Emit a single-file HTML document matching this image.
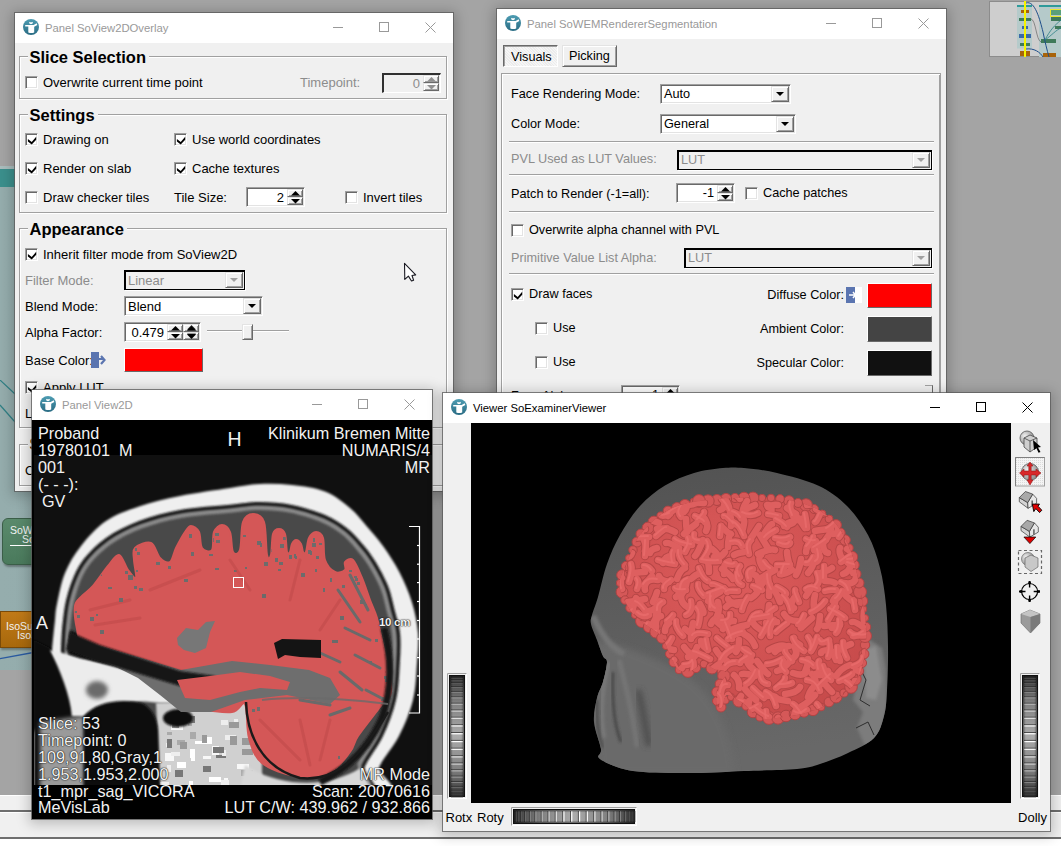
<!DOCTYPE html><html><head><meta charset="utf-8"><style>
*{box-sizing:border-box}
body{margin:0;width:1061px;height:846px;position:relative;overflow:hidden;background:#a4a4a4;font-family:"Liberation Sans",sans-serif;font-size:13px;color:#000}
.a{position:absolute}
.win{position:absolute;box-shadow:0 0 0 1px rgba(90,90,90,0.75),0 2px 12px 3px rgba(0,0,0,0.22)}
.t{position:absolute;white-space:nowrap}
.grp{position:absolute;border:1px solid #a0a0a0;box-shadow:inset 1px 1px 0 #fff,1px 1px 0 #fff}
.cb{position:absolute;width:13px;height:13px;background:#fff;border-top:1px solid #a0a0a0;border-left:1px solid #a0a0a0;border-right:1px solid #fff;border-bottom:1px solid #fff;box-shadow:inset 1px 1px 0 #696969,inset -1px -1px 0 #e3e3e3}
.sunk{position:absolute;border-top:1px solid #a0a0a0;border-left:1px solid #a0a0a0;border-right:1px solid #fff;border-bottom:1px solid #fff;box-shadow:inset 1px 1px 0 #696969,inset -1px -1px 0 #e3e3e3}
.btn{position:absolute;background:#f0f0f0;border-top:1px solid #e3e3e3;border-left:1px solid #e3e3e3;border-right:1px solid #696969;border-bottom:1px solid #696969;box-shadow:inset 1px 1px 0 #fff,inset -1px -1px 0 #a0a0a0}
</style></head><body>
<div class="a" style="left:0px;top:166px;width:430px;height:504px;background:linear-gradient(90deg,#95adad,#8aa7a7)"></div>
<div class="a" style="left:0px;top:166px;width:430px;height:3px;background:#a9bdbd"></div>
<div class="a" style="left:0px;top:169px;width:430px;height:18px;background:#3b8f8c"></div>
<svg class="a" style="left:0;top:380px" width="40" height="290"><path d="M0 0 L15 14" stroke="#2f7f84" stroke-width="1.2"/><path d="M0 25 L15 42" stroke="#2f7f84" stroke-width="1.2"/><path d="M0 278.7 L36 272" stroke="#2a5aa0" stroke-width="1.3"/></svg>
<div class="a" style="left:2px;top:518px;width:40px;height:47px;background:linear-gradient(#5a8a6c,#4a7a5c);border:1px solid #3b5e48;border-radius:6px;box-shadow:1px 2px 2px rgba(0,0,0,0.3)"></div>
<div class="t" style="left:10px;top:523.86px;font-size:10.5px;line-height:13px;color:#f4f4f4;">SoWE</div>
<div class="t" style="left:22px;top:533.36px;font-size:10.5px;line-height:13px;color:#f4f4f4;">So</div>
<div class="a" style="left:10px;top:545px;width:22px;height:1px;background:#fff"></div>
<div class="a" style="left:0px;top:611px;width:42px;height:37px;background:linear-gradient(#c07a18,#a8680c);border:1px solid #7a4a08;box-shadow:1px 2px 2px rgba(0,0,0,0.3)"></div>
<div class="t" style="left:6px;top:619.86px;font-size:10.5px;line-height:13px;color:#f4f4f4;">IsoSurf</div>
<div class="t" style="left:17px;top:629.36px;font-size:10.5px;line-height:13px;color:#f4f4f4;">IsoS</div>
<div class="a" style="left:0px;top:795px;width:1061px;height:51px;background:#f0f0f0"></div>
<div class="a" style="left:0px;top:795px;width:1061px;height:1px;background:#fff"></div>
<div class="a" style="left:0px;top:810px;width:1061px;height:2px;background:#6e6e6e"></div>
<div class="a" style="left:0px;top:812px;width:1061px;height:1px;background:#fff"></div>
<div class="a" style="left:0px;top:837px;width:1061px;height:2px;background:#6e6e6e"></div>
<div class="a" style="left:0px;top:839px;width:1061px;height:7px;background:#fff"></div>
<svg class="a" style="left:989px;top:1px" width="72" height="56" viewBox="989 1 72 56"><rect x="989.5" y="1.5" width="80" height="55" fill="#cecece" stroke="#8c8c8c" stroke-width="1"/><rect x="1017" y="5" width="15" height="43.5" fill="#b5caca"/><rect x="1017" y="5" width="15" height="2" fill="#2f9a9a"/><rect x="1039" y="5" width="30" height="52" fill="#b5caca"/><rect x="1039" y="5" width="30" height="2" fill="#2f9a9a"/><rect x="1021" y="10" width="8" height="3" fill="#a8630a"/><rect x="1019" y="18" width="12" height="3" fill="#3f7a5a"/><rect x="1022" y="26" width="6" height="3" fill="#3a6aa8"/><rect x="1019" y="34" width="12" height="4" fill="#3a6aa8"/><rect x="1020" y="43" width="10" height="3" fill="#3f7a5a"/><rect x="1020" y="51" width="10" height="5" fill="#a8630a"/><rect x="1051" y="10" width="10" height="5" fill="#5aa07a"/><rect x="1051" y="16" width="10" height="5" fill="#3f7a5a"/><rect x="1055" y="26" width="6" height="3" fill="#3f7a5a"/><rect x="1041" y="39" width="15" height="4" fill="#3f7a5a"/><rect x="1043" y="53" width="13" height="4" fill="#a8630a"/><rect x="1050.5" y="9.5" width="12" height="7" fill="none" stroke="#e8e830" stroke-width="1"/><path d="M1031 19 C1036 20 1036 40 1041 42" stroke="#555" stroke-width="0.6" fill="none"/><path d="M1026 3 C1035 0 1040 20 1043 32 C1045 42 1047 50 1049 57" stroke="#1f4f8a" stroke-width="1" fill="none"/><path d="M1026 49 C1034 48 1040 52 1043 57" stroke="#1f4f8a" stroke-width="1" fill="none"/><path d="M1045 40 C1050 30 1055 25 1061 20 M1045 40 C1052 35 1056 30 1061 28" stroke="#2a7f84" stroke-width="0.8" fill="none"/><rect x="1024" y="1" width="2" height="56" fill="#f5f500"/></svg>
<div class="win" style="left:15px;top:13px;width:438px;height:478px;background:#f0f0f0"></div>
<div class="a" style="left:15px;top:13px;width:438px;height:30px;background:#fff"></div>
<div class="a" style="left:23px;top:19px;width:17px;height:17px"><svg width="17" height="17" viewBox="0 0 17 17"><defs><linearGradient id="ig" x1="0" y1="0" x2="0" y2="1"><stop offset="0" stop-color="#4d9cb2"/><stop offset="1" stop-color="#2a6c84"/></linearGradient></defs><circle cx="8" cy="8" r="8" fill="url(#ig)"/><path d="M6 2.7 Q7 3.5 8 3.3 Q9 3.5 10 2.7 Q10.3 5.1 8 5.3 Q5.7 5.1 6 2.7 Z" fill="#fff"/><path d="M2.2 5.9 L10.6 5.9 L13.7 4.2 L14.3 6 L11.2 7.7 L11.2 13.4 Q8.2 14.4 5.3 13.4 L5.3 7.6 L2.2 7.6 Z" fill="#fff"/></svg></div>
<div class="t" style="left:45px;top:21.08px;font-size:11.3px;line-height:14px;color:#999;">Panel SoView2DOverlay</div>
<div class="a" style="left:333px;top:27px;width:10px;height:1px;background:#999"></div>
<div class="a" style="left:379px;top:22px;width:10px;height:10px;border:1px solid #999"></div>
<svg class="a" style="left:425px;top:22px" width="11" height="11"><path d="M0.5 0.5L10.5 10.5M10.5 0.5L0.5 10.5" stroke="#999" stroke-width="1"/></svg>
<div class="grp" style="left:19px;top:56px;width:428px;height:43px"></div>
<div class="t" style="left:27.5px;top:48px;height:14px;font-weight:bold;font-size:16.5px;line-height:14px;background:#f0f0f0;color:#f0f0f0;padding:0 3px 0 2px">Slice Selection</div>
<div class="t" style="left:29.5px;top:47.08px;font-size:16.5px;line-height:20px;color:#000;font-weight:bold;">Slice Selection</div>
<div class="cb" style="left:25px;top:76px"></div>
<div class="t" style="left:43px;top:74.50px;font-size:13px;line-height:16px;color:#000;">Overwrite current time point</div>
<div class="t" style="left:300px;top:74.50px;font-size:13px;line-height:16px;color:#8c8c8c;">Timepoint:</div>
<div class="a" style="left:382px;top:73px;width:59px;height:20px;background:#f0f0f0;border-top:2px solid #303030;border-left:2px solid #303030;border-right:1px solid #fff;border-bottom:1px solid #fff"></div>
<div class="btn" style="left:423px;top:75px;width:16px;height:8.0px"></div>
<div class="btn" style="left:423px;top:83.0px;width:16px;height:8.0px"></div>
<svg class="a" style="left:426.5px;top:77.0px" width="9" height="5"><path d="M0 4.5H9L4.5 0Z" fill="#909090"/></svg>
<svg class="a" style="left:426.5px;top:84.5px" width="9" height="5"><path d="M0 0H9L4.5 4.5Z" fill="#909090"/></svg>
<div class="t" style="right:641px;top:75.50px;font-size:13px;line-height:16px;color:#8c8c8c;">0</div>
<div class="grp" style="left:19px;top:114px;width:428px;height:99px"></div>
<div class="t" style="left:27.5px;top:106px;height:14px;font-weight:bold;font-size:16.5px;line-height:14px;background:#f0f0f0;color:#f0f0f0;padding:0 3px 0 2px">Settings</div>
<div class="t" style="left:29.5px;top:104.78px;font-size:16.5px;line-height:20px;color:#000;font-weight:bold;">Settings</div>
<div class="cb" style="left:25px;top:133px"><svg class="a" style="left:1px;top:0.5px" width="10" height="10" viewBox="-0.3 -0.5 10 10"><path d="M0.6 3.4 L4.4 6.6 L8.9 1.2 L8.9 4.2 L4.4 9 L0.6 6 Z" fill="#000"/></svg></div>
<div class="t" style="left:43px;top:131.50px;font-size:13px;line-height:16px;color:#000;">Drawing on</div>
<div class="cb" style="left:174px;top:133px"><svg class="a" style="left:1px;top:0.5px" width="10" height="10" viewBox="-0.3 -0.5 10 10"><path d="M0.6 3.4 L4.4 6.6 L8.9 1.2 L8.9 4.2 L4.4 9 L0.6 6 Z" fill="#000"/></svg></div>
<div class="t" style="left:192px;top:131.50px;font-size:13px;line-height:16px;color:#000;">Use world coordinates</div>
<div class="cb" style="left:25px;top:162px"><svg class="a" style="left:1px;top:0.5px" width="10" height="10" viewBox="-0.3 -0.5 10 10"><path d="M0.6 3.4 L4.4 6.6 L8.9 1.2 L8.9 4.2 L4.4 9 L0.6 6 Z" fill="#000"/></svg></div>
<div class="t" style="left:43px;top:160.50px;font-size:13px;line-height:16px;color:#000;">Render on slab</div>
<div class="cb" style="left:174px;top:162px"><svg class="a" style="left:1px;top:0.5px" width="10" height="10" viewBox="-0.3 -0.5 10 10"><path d="M0.6 3.4 L4.4 6.6 L8.9 1.2 L8.9 4.2 L4.4 9 L0.6 6 Z" fill="#000"/></svg></div>
<div class="t" style="left:192px;top:160.50px;font-size:13px;line-height:16px;color:#000;">Cache textures</div>
<div class="cb" style="left:25px;top:191px"></div>
<div class="t" style="left:43px;top:189.50px;font-size:13px;line-height:16px;color:#000;">Draw checker tiles</div>
<div class="t" style="left:174px;top:190.00px;font-size:13px;line-height:16px;color:#000;">Tile Size:</div>
<div class="sunk" style="left:246px;top:187px;width:59px;height:20px;background:#fff"></div>
<div class="btn" style="left:287px;top:189px;width:16px;height:8.0px"></div>
<div class="btn" style="left:287px;top:197.0px;width:16px;height:8.0px"></div>
<svg class="a" style="left:290.5px;top:191.0px" width="9" height="5"><path d="M0 4.5H9L4.5 0Z" fill="#000"/></svg>
<svg class="a" style="left:290.5px;top:198.5px" width="9" height="5"><path d="M0 0H9L4.5 4.5Z" fill="#000"/></svg>
<div class="t" style="right:777px;top:189.50px;font-size:13px;line-height:16px;color:#000;">2</div>
<div class="cb" style="left:345px;top:191px"></div>
<div class="t" style="left:363px;top:189.50px;font-size:13px;line-height:16px;color:#000;">Invert tiles</div>
<div class="grp" style="left:19px;top:228px;width:428px;height:200px"></div>
<div class="t" style="left:27.5px;top:220px;height:14px;font-weight:bold;font-size:16.5px;line-height:14px;background:#f0f0f0;color:#f0f0f0;padding:0 3px 0 2px">Appearance</div>
<div class="t" style="left:29.5px;top:219.28px;font-size:16.5px;line-height:20px;color:#000;font-weight:bold;">Appearance</div>
<div class="cb" style="left:25px;top:248px"><svg class="a" style="left:1px;top:0.5px" width="10" height="10" viewBox="-0.3 -0.5 10 10"><path d="M0.6 3.4 L4.4 6.6 L8.9 1.2 L8.9 4.2 L4.4 9 L0.6 6 Z" fill="#000"/></svg></div>
<div class="t" style="left:43px;top:246.50px;font-size:13px;line-height:16px;color:#000;">Inherit filter mode from SoView2D</div>
<div class="t" style="left:25px;top:272.50px;font-size:13px;line-height:16px;color:#8c8c8c;">Filter Mode:</div>
<div class="a" style="left:124px;top:270px;width:121px;height:20px;background:#f0f0f0;border:1px solid #000;border-top-width:2px;border-left-width:2px;box-shadow:1px 1px 0 #fff"></div>
<div class="btn" style="left:225px;top:272px;width:18px;height:16px"></div>
<svg class="a" style="left:230.0px;top:278.0px" width="8" height="5"><path d="M0 0H8L4 4Z" fill="#a0a0a0"/></svg>
<div class="t" style="left:128px;top:272.50px;font-size:13px;line-height:16px;color:#8c8c8c;">Linear</div>
<div class="t" style="left:25px;top:298.50px;font-size:13px;line-height:16px;color:#000;">Blend Mode:</div>
<div class="sunk" style="left:124px;top:296px;width:139px;height:20px;background:#fff"></div>
<div class="btn" style="left:243px;top:298px;width:18px;height:16px"></div>
<svg class="a" style="left:248.0px;top:304.0px" width="8" height="5"><path d="M0 0H8L4 4Z" fill="#000"/></svg>
<div class="t" style="left:128px;top:298.50px;font-size:13px;line-height:16px;color:#000;">Blend</div>
<div class="t" style="left:25px;top:324.50px;font-size:13px;line-height:16px;color:#000;">Alpha Factor:</div>
<div class="sunk" style="left:124px;top:322px;width:77px;height:20px;background:#fff"></div>
<div class="btn" style="left:183px;top:324px;width:16px;height:8.0px"></div>
<div class="btn" style="left:183px;top:332.0px;width:16px;height:8.0px"></div>
<svg class="a" style="left:186.5px;top:326.0px" width="9" height="5"><path d="M0 4.5H9L4.5 0Z" fill="#000"/></svg>
<svg class="a" style="left:186.5px;top:333.5px" width="9" height="5"><path d="M0 0H9L4.5 4.5Z" fill="#000"/></svg>
<div class="btn" style="left:167px;top:324px;width:16px;height:8.0px"></div>
<div class="btn" style="left:167px;top:332.0px;width:16px;height:8.0px"></div>
<svg class="a" style="left:170.5px;top:326.0px" width="9" height="5"><path d="M0 4.5H9L4.5 0Z" fill="#000"/></svg>
<svg class="a" style="left:170.5px;top:333.5px" width="9" height="5"><path d="M0 0H9L4.5 4.5Z" fill="#000"/></svg>
<svg class="a" style="left:186.5px;top:325.0px" width="9" height="14"><path d="M0 4.5H9L4.5 0Z M0 5.5H9L4.5 1Z" fill="#000" opacity="0.8"/><path d="M0 8.5H9L4.5 13Z M0 9.5H9L4.5 14Z" fill="#000" opacity="0.8"/></svg>
<div class="t" style="right:897px;top:324.50px;font-size:13px;line-height:16px;color:#000;">0.479</div>
<div class="a" style="left:207px;top:330px;width:82px;height:2px;border-top:1px solid #a0a0a0;border-bottom:1px solid #fff"></div>
<div class="btn" style="left:242px;top:324px;width:11px;height:16px"></div>
<div class="t" style="left:25px;top:352.50px;font-size:13px;line-height:16px;color:#000;">Base Color:</div>
<svg class="a" style="left:91px;top:352px" width="17" height="16"><rect x="0" y="0" width="8" height="16" fill="#5b75b0"/><path d="M6 7H13M10 4L13.5 8L10 12" stroke="#5b75b0" stroke-width="2.2" fill="none"/></svg>
<div class="a" style="left:124px;top:348px;width:79px;height:24px;background:#f00;border-top:1px solid #fff;border-left:1px solid #fff;border-right:1px solid #696969;border-bottom:1px solid #696969"></div>
<div class="cb" style="left:25px;top:381px"><svg class="a" style="left:1px;top:0.5px" width="10" height="10" viewBox="-0.3 -0.5 10 10"><path d="M0.6 3.4 L4.4 6.6 L8.9 1.2 L8.9 4.2 L4.4 9 L0.6 6 Z" fill="#000"/></svg></div>
<div class="t" style="left:43px;top:379.50px;font-size:13px;line-height:16px;color:#000;">Apply LUT</div>
<div class="t" style="left:25px;top:405.50px;font-size:13px;line-height:16px;color:#000;">LUT</div>
<div class="grp" style="left:19px;top:444px;width:428px;height:42px"></div>
<div class="t" style="left:27.5px;top:436px;height:14px;font-weight:bold;font-size:16.5px;line-height:14px;background:#f0f0f0;color:#f0f0f0;padding:0 3px 0 2px">S</div>
<div class="t" style="left:29.5px;top:434.28px;font-size:16.5px;line-height:20px;color:#000;font-weight:bold;">S</div>
<div class="t" style="left:25px;top:462.50px;font-size:13px;line-height:16px;color:#000;">Ov</div>
<svg class="a" style="left:402px;top:261px" width="16" height="23" viewBox="402 261 16 23"><path d="M404.5 263.3 L404.8 279.4 L408.4 276.1 L411.5 281 L413.6 280.2 L412 275.5 L415.7 274.9 Z" fill="#fff" stroke="#1a1a22" stroke-width="1.1" stroke-linejoin="round"/></svg>
<div class="win" style="left:497px;top:9px;width:449px;height:400px;background:#f0f0f0"></div>
<div class="a" style="left:497px;top:9px;width:449px;height:30px;background:#fff"></div>
<div class="a" style="left:505px;top:15px;width:17px;height:17px"><svg width="17" height="17" viewBox="0 0 17 17"><defs><linearGradient id="ig" x1="0" y1="0" x2="0" y2="1"><stop offset="0" stop-color="#4d9cb2"/><stop offset="1" stop-color="#2a6c84"/></linearGradient></defs><circle cx="8" cy="8" r="8" fill="url(#ig)"/><path d="M6 2.7 Q7 3.5 8 3.3 Q9 3.5 10 2.7 Q10.3 5.1 8 5.3 Q5.7 5.1 6 2.7 Z" fill="#fff"/><path d="M2.2 5.9 L10.6 5.9 L13.7 4.2 L14.3 6 L11.2 7.7 L11.2 13.4 Q8.2 14.4 5.3 13.4 L5.3 7.6 L2.2 7.6 Z" fill="#fff"/></svg></div>
<div class="t" style="left:527px;top:17.08px;font-size:11.3px;line-height:14px;color:#999;">Panel SoWEMRendererSegmentation</div>
<div class="a" style="left:826px;top:23px;width:10px;height:1px;background:#999"></div>
<div class="a" style="left:872px;top:18px;width:10px;height:10px;border:1px solid #999"></div>
<svg class="a" style="left:918px;top:18px" width="11" height="11"><path d="M0.5 0.5L10.5 10.5M10.5 0.5L0.5 10.5" stroke="#999" stroke-width="1"/></svg>
<div class="a" style="left:501px;top:73px;width:440px;height:340px;border-top:1px solid #fff;border-left:1px solid #fff;border-right:1px solid #696969;box-shadow:inset -1px 0 0 #a0a0a0, inset 1px 1px 0 #e3e3e3;outline:1px solid #a0a0a0;outline-offset:-1px"></div>
<div class="a" style="left:501px;top:73px;width:440px;height:340px;border:1px solid #a0a0a0;box-shadow:inset 1px 1px 0 #fff"></div>
<div class="a" style="left:503px;top:45px;width:55px;height:22px;background:#f0f0f0;border-top:1px solid #696969;border-left:1px solid #696969;border-right:1px solid #fff;border-bottom:1px solid #fff;box-shadow:inset 1px 1px 0 #a0a0a0;background-image:repeating-linear-gradient(45deg,#f6f6f6 0 1px,#ececec 1px 2px)"></div>
<div class="t" style="left:511px;top:50.10px;font-size:12.7px;line-height:15px;color:#000;">Visuals</div>
<div class="btn" style="left:562px;top:45px;width:55px;height:22px"></div>
<div class="t" style="left:569px;top:49.10px;font-size:12.7px;line-height:15px;color:#000;">Picking</div>
<div class="t" style="left:511px;top:87.10px;font-size:12.7px;line-height:15px;color:#000;">Face Rendering Mode:</div>
<div class="sunk" style="left:660px;top:84px;width:131px;height:20px;background:#fff"></div>
<div class="btn" style="left:771px;top:86px;width:18px;height:16px"></div>
<svg class="a" style="left:776.0px;top:92.0px" width="8" height="5"><path d="M0 0H8L4 4Z" fill="#000"/></svg>
<div class="t" style="left:664px;top:87.10px;font-size:12.7px;line-height:15px;color:#000;">Auto</div>
<div class="t" style="left:511px;top:117.10px;font-size:12.7px;line-height:15px;color:#000;">Color Mode:</div>
<div class="sunk" style="left:660px;top:114px;width:136px;height:20px;background:#fff"></div>
<div class="btn" style="left:776px;top:116px;width:18px;height:16px"></div>
<svg class="a" style="left:781.0px;top:122.0px" width="8" height="5"><path d="M0 0H8L4 4Z" fill="#000"/></svg>
<div class="t" style="left:664px;top:117.10px;font-size:12.7px;line-height:15px;color:#000;">General</div>
<div class="a" style="left:509px;top:141px;width:425px;height:2px;border-top:1px solid #a0a0a0;border-bottom:1px solid #fff"></div>
<div class="t" style="left:511px;top:152.10px;font-size:12.7px;line-height:15px;color:#8c8c8c;">PVL Used as LUT Values:</div>
<div class="a" style="left:677px;top:150px;width:255px;height:20px;background:#f0f0f0;border:1px solid #000;border-top-width:2px;border-left-width:2px;box-shadow:1px 1px 0 #fff"></div>
<div class="btn" style="left:912px;top:152px;width:18px;height:16px"></div>
<svg class="a" style="left:917.0px;top:158.0px" width="8" height="5"><path d="M0 0H8L4 4Z" fill="#a0a0a0"/></svg>
<div class="t" style="left:681px;top:153.10px;font-size:12.7px;line-height:15px;color:#8c8c8c;">LUT</div>
<div class="a" style="left:509px;top:174px;width:425px;height:2px;border-top:1px solid #a0a0a0;border-bottom:1px solid #fff"></div>
<div class="t" style="left:511px;top:186.60px;font-size:12.7px;line-height:15px;color:#000;">Patch to Render (-1=all):</div>
<div class="sunk" style="left:676px;top:183px;width:59px;height:20px;background:#fff"></div>
<div class="btn" style="left:717px;top:185px;width:16px;height:8.0px"></div>
<div class="btn" style="left:717px;top:193.0px;width:16px;height:8.0px"></div>
<svg class="a" style="left:720.5px;top:187.0px" width="9" height="5"><path d="M0 4.5H9L4.5 0Z" fill="#000"/></svg>
<svg class="a" style="left:720.5px;top:194.5px" width="9" height="5"><path d="M0 0H9L4.5 4.5Z" fill="#000"/></svg>
<div class="t" style="right:347px;top:186.10px;font-size:12.7px;line-height:15px;color:#000;">-1</div>
<div class="cb" style="left:745px;top:187px"></div>
<div class="t" style="left:763px;top:186.10px;font-size:12.7px;line-height:15px;color:#000;">Cache patches</div>
<div class="a" style="left:509px;top:211px;width:425px;height:2px;border-top:1px solid #a0a0a0;border-bottom:1px solid #fff"></div>
<div class="cb" style="left:511px;top:224px"></div>
<div class="t" style="left:529px;top:223.10px;font-size:12.7px;line-height:15px;color:#000;">Overwrite alpha channel with PVL</div>
<div class="t" style="left:511px;top:251.10px;font-size:12.7px;line-height:15px;color:#8c8c8c;">Primitive Value List Alpha:</div>
<div class="a" style="left:684px;top:248px;width:248px;height:20px;background:#f0f0f0;border:1px solid #000;border-top-width:2px;border-left-width:2px;box-shadow:1px 1px 0 #fff"></div>
<div class="btn" style="left:912px;top:250px;width:18px;height:16px"></div>
<svg class="a" style="left:917.0px;top:256.0px" width="8" height="5"><path d="M0 0H8L4 4Z" fill="#a0a0a0"/></svg>
<div class="t" style="left:688px;top:251.10px;font-size:12.7px;line-height:15px;color:#8c8c8c;">LUT</div>
<div class="a" style="left:509px;top:273px;width:425px;height:2px;border-top:1px solid #a0a0a0;border-bottom:1px solid #fff"></div>
<div class="cb" style="left:511px;top:288px"><svg class="a" style="left:1px;top:0.5px" width="10" height="10" viewBox="-0.3 -0.5 10 10"><path d="M0.6 3.4 L4.4 6.6 L8.9 1.2 L8.9 4.2 L4.4 9 L0.6 6 Z" fill="#000"/></svg></div>
<div class="t" style="left:529px;top:287.10px;font-size:12.7px;line-height:15px;color:#000;">Draw faces</div>
<div class="t" style="right:217px;top:288.10px;font-size:12.7px;line-height:15px;color:#000;">Diffuse Color:</div>
<svg class="a" style="left:846px;top:287px" width="16" height="16"><rect x="0" y="0" width="16" height="16" fill="#fff"/><rect x="0" y="0" width="9" height="16" fill="#5b75b0"/><path d="M3 8H9M7 5L9.5 8L7 11" stroke="#fff" stroke-width="1.5" fill="none"/></svg>
<div class="a" style="left:867px;top:283px;width:65px;height:25px;background:#f00;border-top:1px solid #fff;border-left:1px solid #fff;border-right:1px solid #696969;border-bottom:1px solid #696969"></div>
<div class="cb" style="left:535px;top:322px"></div>
<div class="t" style="left:553px;top:321.10px;font-size:12.7px;line-height:15px;color:#000;">Use</div>
<div class="t" style="right:217px;top:322.10px;font-size:12.7px;line-height:15px;color:#000;">Ambient Color:</div>
<div class="a" style="left:867px;top:316px;width:65px;height:26px;background:#444;border-top:1px solid #fff;border-left:1px solid #fff;border-right:1px solid #696969;border-bottom:1px solid #696969"></div>
<div class="cb" style="left:535px;top:356px"></div>
<div class="t" style="left:553px;top:355.10px;font-size:12.7px;line-height:15px;color:#000;">Use</div>
<div class="t" style="right:217px;top:356.10px;font-size:12.7px;line-height:15px;color:#000;">Specular Color:</div>
<div class="a" style="left:867px;top:350px;width:65px;height:26px;background:#111;border-top:1px solid #fff;border-left:1px solid #fff;border-right:1px solid #696969;border-bottom:1px solid #696969"></div>
<div class="t" style="left:511px;top:389.10px;font-size:12.7px;line-height:15px;color:#000;">Face Alpha:</div>
<div class="sunk" style="left:621px;top:385px;width:59px;height:20px;background:#fff"></div>
<div class="btn" style="left:662px;top:387px;width:16px;height:8.0px"></div>
<div class="btn" style="left:662px;top:395.0px;width:16px;height:8.0px"></div>
<svg class="a" style="left:665.5px;top:389.0px" width="9" height="5"><path d="M0 4.5H9L4.5 0Z" fill="#000"/></svg>
<svg class="a" style="left:665.5px;top:396.5px" width="9" height="5"><path d="M0 0H9L4.5 4.5Z" fill="#000"/></svg>
<div class="t" style="right:402px;top:388.10px;font-size:12.7px;line-height:15px;color:#000;">1</div>
<div class="a" style="left:925px;top:385px;width:8px;height:20px;border-top:1px solid #a0a0a0;border-right:1px solid #696969"></div>
<div class="win" style="left:32px;top:390px;width:400px;height:429px;background:#000"></div>
<div class="a" style="left:32px;top:390px;width:400px;height:30px;background:#fff"></div>
<div class="a" style="left:40px;top:396px;width:17px;height:17px"><svg width="17" height="17" viewBox="0 0 17 17"><defs><linearGradient id="ig" x1="0" y1="0" x2="0" y2="1"><stop offset="0" stop-color="#4d9cb2"/><stop offset="1" stop-color="#2a6c84"/></linearGradient></defs><circle cx="8" cy="8" r="8" fill="url(#ig)"/><path d="M6 2.7 Q7 3.5 8 3.3 Q9 3.5 10 2.7 Q10.3 5.1 8 5.3 Q5.7 5.1 6 2.7 Z" fill="#fff"/><path d="M2.2 5.9 L10.6 5.9 L13.7 4.2 L14.3 6 L11.2 7.7 L11.2 13.4 Q8.2 14.4 5.3 13.4 L5.3 7.6 L2.2 7.6 Z" fill="#fff"/></svg></div>
<div class="t" style="left:62px;top:398.08px;font-size:11.3px;line-height:14px;color:#999;">Panel View2D</div>
<div class="a" style="left:312px;top:404px;width:10px;height:1px;background:#999"></div>
<div class="a" style="left:358px;top:399px;width:10px;height:10px;border:1px solid #999"></div>
<svg class="a" style="left:404px;top:399px" width="11" height="11"><path d="M0.5 0.5L10.5 10.5M10.5 0.5L0.5 10.5" stroke="#999" stroke-width="1"/></svg>
<svg class="a" style="left:32px;top:420px" width="401" height="399" viewBox="32 420 401 399"><defs><clipPath id="imgc"><rect x="34" y="455" width="398" height="330"/></clipPath><filter id="b1" x="-10%" y="-10%" width="120%" height="120%"><feGaussianBlur stdDeviation="1"/></filter><filter id="b2" x="-20%" y="-20%" width="140%" height="140%"><feGaussianBlur stdDeviation="2"/></filter></defs><rect x="34" y="455" width="398" height="330" fill="#101010"/><g clip-path="url(#imgc)"><path d="M40.0 800.0 C-12.8 783.3 46.0 725.0 48.0 700.0 C50.0 675.0 50.8 663.3 52.0 650.0 C53.2 636.7 54.2 627.7 55.0 620.0 C55.8 612.3 55.3 611.8 57.0 604.0 C58.7 596.2 61.0 582.7 65.0 573.0 C69.0 563.3 74.2 554.7 81.0 546.0 C87.8 537.3 96.3 527.6 106.0 521.0 C115.7 514.4 126.7 510.7 139.0 506.5 C151.3 502.3 164.8 499.1 180.0 496.0 C195.2 492.9 216.7 490.0 230.0 488.0 C243.3 486.0 249.7 484.5 260.0 484.0 C270.3 483.5 281.2 483.8 292.0 485.0 C302.8 486.2 315.3 487.7 325.0 491.5 C334.7 495.3 343.1 502.2 350.0 508.0 C356.9 513.8 361.0 519.7 366.5 526.0 C372.0 532.3 377.5 538.2 383.0 546.0 C388.5 553.8 394.8 563.2 399.6 572.6 C404.4 582.0 408.9 592.4 412.0 602.5 C415.1 612.6 417.2 622.9 418.0 633.0 C418.8 643.1 417.8 651.8 417.0 663.0 C416.2 674.2 416.0 687.8 413.0 700.0 C410.0 712.2 404.6 725.0 399.0 736.0 C393.4 747.0 385.3 755.3 379.6 766.0 C373.9 776.7 421.6 794.3 365.0 800.0 C308.4 805.7 92.8 816.7 40.0 800.0 Z" fill="#efefef" filter="url(#b1)"/><path d="M58.0 800.0 C9.7 783.3 59.5 725.0 60.0 700.0 C60.5 675.0 60.5 663.3 61.0 650.0 C61.5 636.7 61.8 629.5 63.0 620.0 C64.2 610.5 65.0 602.5 68.0 593.0 C71.0 583.5 74.7 572.2 81.0 563.0 C87.3 553.8 96.3 545.0 106.0 538.0 C115.7 531.0 126.7 525.7 139.0 521.0 C151.3 516.3 164.8 512.7 180.0 510.0 C195.2 507.3 216.7 506.0 230.0 504.7 C243.3 503.4 249.7 501.9 260.0 502.0 C270.3 502.1 281.2 502.8 292.0 505.0 C302.8 507.2 315.9 511.2 325.0 515.0 C334.1 518.8 340.5 523.3 346.6 528.0 C352.7 532.7 356.8 537.5 361.5 543.0 C366.2 548.5 370.6 553.8 375.0 561.0 C379.4 568.2 384.7 577.8 388.0 586.0 C391.3 594.2 392.6 602.2 394.6 610.0 C396.6 617.8 399.1 624.2 400.0 633.0 C400.9 641.8 400.5 651.8 399.8 663.0 C399.1 674.2 398.8 687.8 396.0 700.0 C393.2 712.2 388.2 725.0 383.0 736.0 C377.8 747.0 370.5 755.3 365.0 766.0 C359.5 776.7 401.2 794.3 350.0 800.0 C298.8 805.7 106.3 816.7 58.0 800.0 Z" fill="#141414" filter="url(#b1)"/><path d="M61.5 800.1 C14.3 783.7 63.0 725.1 63.5 700.1 C64.0 675.1 64.0 663.4 64.5 650.1 C65.0 636.9 65.3 629.8 66.5 620.4 C67.6 611.1 68.4 603.3 71.3 594.1 C74.2 584.8 77.8 573.9 83.9 565.0 C90.0 556.1 98.7 547.6 108.1 540.8 C117.4 534.0 128.1 528.8 140.2 524.3 C152.3 519.7 165.6 516.1 180.6 513.4 C195.6 510.8 217.1 509.5 230.3 508.2 C243.6 506.9 249.8 505.5 260.0 505.5 C270.1 505.5 280.7 506.3 291.3 508.4 C301.9 510.6 314.8 514.5 323.6 518.2 C332.5 521.9 338.6 526.3 344.5 530.8 C350.3 535.3 354.3 539.9 358.8 545.3 C363.4 550.6 367.7 555.8 372.0 562.8 C376.3 569.8 381.6 579.3 384.8 587.3 C387.9 595.3 389.2 603.2 391.2 610.9 C393.2 618.5 395.7 624.7 396.5 633.3 C397.4 642.0 397.0 651.8 396.3 662.8 C395.7 673.8 395.3 687.3 392.6 699.2 C389.8 711.2 384.9 723.6 379.8 734.5 C374.7 745.4 367.4 753.7 361.9 764.4 C356.4 775.1 396.9 792.6 346.8 798.6 C296.7 804.5 108.7 816.5 61.5 800.1 Z" fill="#8a8a8a" filter="url(#b1)"/><path d="M66.0 800.2 C20.2 784.1 67.5 725.1 68.0 700.2 C68.5 675.2 68.5 663.5 69.0 650.3 C69.5 637.1 69.8 630.1 70.9 621.0 C72.0 611.8 72.9 604.3 75.6 595.4 C78.4 586.5 81.7 576.0 87.6 567.5 C93.4 559.1 101.7 551.0 110.7 544.5 C119.7 538.0 130.0 532.9 141.8 528.5 C153.6 524.0 166.6 520.5 181.4 517.9 C196.2 515.2 217.7 514.0 230.8 512.7 C243.9 511.3 250.0 510.0 260.0 510.0 C269.9 510.0 280.1 510.8 290.4 512.8 C300.8 514.9 313.3 518.8 321.9 522.4 C330.4 526.0 336.1 530.0 341.7 534.3 C347.3 538.7 351.0 543.1 355.4 548.2 C359.8 553.4 364.0 558.4 368.2 565.2 C372.4 572.0 377.5 581.2 380.6 589.0 C383.7 596.8 384.9 604.5 386.8 612.0 C388.8 619.4 391.2 625.4 392.0 633.8 C392.9 642.2 392.5 651.8 391.8 662.5 C391.2 673.3 390.9 686.5 388.2 698.2 C385.5 709.9 380.8 721.9 375.8 732.6 C370.7 743.3 363.4 751.6 357.9 762.3 C352.4 773.0 391.3 790.5 342.7 796.8 C294.0 803.1 111.8 816.3 66.0 800.2 Z" fill="#484848" filter="url(#b1)"/><path d="M34 640 L50 648 L62 668 L72 690 L72 716 L84 716 L84 790 L34 790 Z" fill="#0c0c0c" filter="url(#b1)"/><path d="M40 722 L84 716 L84 790 L40 790 Z" fill="#9a9a9a" filter="url(#b2)"/><path d="M50 650 C62 652 90 661 122 668 C150 673 180 677 210 688 L232 700 C200 703 185 703 160 703 C140 700 115 700 84 716 L72 716 C70 695 60 670 50 650 Z" fill="#ececec" filter="url(#b1)"/><path d="M70 630 L90 638 L130 650 L179 666 L232 674 L236 690 L179 682 L130 668 L80 658 L68 654 Z" fill="#141414" filter="url(#b1)"/><ellipse cx="97" cy="690" rx="11" ry="9" fill="#6a6a6a" filter="url(#b2)"/><path d="M156 703 L247 700 L262 740 L262 790 L160 790 Z" fill="#d0d0d0" filter="url(#b1)"/><rect x="188" y="723" width="4" height="3" fill="#aaa"/><rect x="234" y="719" width="4" height="7" fill="#eee"/><rect x="178" y="718" width="5" height="4" fill="#fff"/><rect x="166" y="743" width="5" height="4" fill="#eee"/><rect x="216" y="755" width="10" height="3" fill="#777"/><rect x="248" y="715" width="8" height="6" fill="#999"/><rect x="171" y="721" width="12" height="9" fill="#f8f8f8"/><rect x="221" y="720" width="7" height="5" fill="#eee"/><rect x="167" y="765" width="4" height="7" fill="#eee"/><rect x="177" y="762" width="9" height="6" fill="#fff"/><rect x="212" y="746" width="7" height="9" fill="#f8f8f8"/><rect x="175" y="770" width="8" height="7" fill="#777"/><rect x="204" y="737" width="8" height="7" fill="#fff"/><rect x="248" y="721" width="6" height="9" fill="#fff"/><rect x="189" y="781" width="4" height="8" fill="#fff"/><rect x="165" y="753" width="9" height="8" fill="#f8f8f8"/><rect x="190" y="749" width="5" height="9" fill="#fff"/><rect x="167" y="732" width="5" height="3" fill="#aaa"/><rect x="225" y="735" width="11" height="5" fill="#eee"/><rect x="224" y="778" width="4" height="6" fill="#f8f8f8"/><rect x="191" y="757" width="4" height="4" fill="#fff"/><rect x="229" y="722" width="10" height="6" fill="#999"/><rect x="242" y="749" width="11" height="6" fill="#999"/><rect x="209" y="777" width="12" height="5" fill="#fff"/><rect x="223" y="785" width="10" height="4" fill="#aaa"/><rect x="172" y="725" width="7" height="3" fill="#999"/><rect x="203" y="756" width="8" height="3" fill="#f8f8f8"/><rect x="171" y="752" width="9" height="4" fill="#eee"/><rect x="222" y="750" width="4" height="6" fill="#eee"/><rect x="241" y="770" width="12" height="6" fill="#aaa"/><rect x="195" y="741" width="10" height="3" fill="#fff"/><rect x="176" y="785" width="6" height="3" fill="#fff"/><rect x="189" y="716" width="6" height="7" fill="#777"/><rect x="167" y="739" width="5" height="9" fill="#777"/><rect x="177" y="740" width="8" height="5" fill="#aaa"/><rect x="213" y="747" width="11" height="6" fill="#777"/><rect x="202" y="735" width="5" height="8" fill="#999"/><rect x="190" y="732" width="6" height="7" fill="#aaa"/><rect x="160" y="782" width="9" height="4" fill="#eee"/><rect x="221" y="780" width="8" height="8" fill="#eee"/><rect x="237" y="764" width="12" height="5" fill="#f8f8f8"/><rect x="242" y="738" width="12" height="7" fill="#999"/><rect x="230" y="736" width="7" height="9" fill="#999"/><rect x="180" y="742" width="7" height="7" fill="#999"/><rect x="203" y="766" width="8" height="6" fill="#777"/><path d="M84 790 L84 716 C95 702 120 698 142 703 C152 708 157 718 158 730 L160 790 Z" fill="#0b0b0b" filter="url(#b1)"/><ellipse cx="178" cy="718" rx="15" ry="9" fill="#0b0b0b" filter="url(#b1)"/><path d="M245 765 C280 788 330 788 360 768 L372 790 L240 790 Z" fill="#d8d8d8" filter="url(#b1)"/><path d="M77.0 629.0 C75.7 623.3 74.2 611.5 75.0 606.0 C75.8 600.5 79.0 599.3 82.0 596.0 C85.0 592.7 88.7 591.0 93.0 586.0 C97.3 581.0 103.7 571.2 108.0 566.0 C112.3 560.8 115.7 554.3 119.0 555.0 C122.3 555.7 125.2 566.2 128.0 570.0 C130.8 573.8 135.0 579.7 136.0 578.0 C137.0 576.3 134.2 565.0 134.0 560.0 C133.8 555.0 132.2 550.8 135.0 548.0 C137.8 545.2 146.8 541.3 151.0 543.0 C155.2 544.7 156.8 554.8 160.0 558.0 C163.2 561.2 167.3 563.7 170.0 562.0 C172.7 560.3 173.5 553.0 176.0 548.0 C178.5 543.0 182.5 535.7 185.0 532.0 C187.5 528.3 188.7 526.0 191.0 526.0 C193.3 526.0 197.2 528.3 199.0 532.0 C200.8 535.7 199.8 545.0 202.0 548.0 C204.2 551.0 210.0 552.7 212.0 550.0 C214.0 547.3 212.3 536.2 214.0 532.0 C215.7 527.8 219.3 525.0 222.0 525.0 C224.7 525.0 228.2 527.5 230.0 532.0 C231.8 536.5 231.3 549.0 233.0 552.0 C234.7 555.0 238.3 555.0 240.0 550.0 C241.7 545.0 240.8 528.0 243.0 522.0 C245.2 516.0 249.5 514.0 253.0 514.0 C256.5 514.0 261.7 515.2 264.0 522.0 C266.3 528.8 265.8 549.5 267.0 555.0 C268.2 560.5 270.0 558.5 271.0 555.0 C272.0 551.5 271.7 538.3 273.0 534.0 C274.3 529.7 277.0 529.0 279.0 529.0 C281.0 529.0 283.7 530.2 285.0 534.0 C286.3 537.8 286.2 549.0 287.0 552.0 C287.8 555.0 289.2 553.3 290.0 552.0 C290.8 550.7 291.0 546.0 292.0 544.0 C293.0 542.0 294.5 540.0 296.0 540.0 C297.5 540.0 299.8 542.0 301.0 544.0 C302.2 546.0 302.2 550.7 303.0 552.0 C303.8 553.3 305.0 554.3 306.0 552.0 C307.0 549.7 307.3 541.3 309.0 538.0 C310.7 534.7 313.7 532.0 316.0 532.0 C318.3 532.0 321.5 533.3 323.0 538.0 C324.5 542.7 323.0 554.3 325.0 560.0 C327.0 565.7 331.7 570.3 335.0 572.0 C338.3 573.7 343.3 571.7 345.0 570.0 C346.7 568.3 343.7 563.7 345.0 562.0 C346.3 560.3 350.2 557.3 353.0 560.0 C355.8 562.7 359.2 571.3 362.0 578.0 C364.8 584.7 367.5 593.3 370.0 600.0 C372.5 606.7 375.0 611.3 377.0 618.0 C379.0 624.7 380.3 632.5 382.0 640.0 C383.7 647.5 385.5 654.3 387.0 663.0 C388.5 671.7 392.2 684.7 391.0 692.0 C389.8 699.3 385.5 699.7 380.0 707.0 C374.5 714.3 363.0 728.5 358.0 736.0 C353.0 743.5 354.7 746.0 350.0 752.0 C345.3 758.0 339.0 768.0 330.0 772.0 C321.0 776.0 307.3 777.5 296.0 776.0 C284.7 774.5 269.8 769.3 262.0 763.0 C254.2 756.7 251.8 747.8 249.0 738.0 C246.2 728.2 247.8 708.3 245.0 704.0 C242.2 699.7 239.8 711.3 232.0 712.0 C224.2 712.7 207.2 710.8 198.0 708.0 C188.8 705.2 181.3 701.3 177.0 695.0 C172.7 688.7 176.3 675.7 172.0 670.0 C167.7 664.3 160.2 663.8 151.0 661.0 C141.8 658.2 128.3 656.5 117.0 653.0 C105.7 649.5 89.7 644.0 83.0 640.0 C76.3 636.0 78.3 634.7 77.0 629.0 Z" fill="#d45757" stroke="#d45757" stroke-width="2" stroke-linejoin="round"/><clipPath id="redc"><path d="M77.0 629.0 C75.7 623.3 74.2 611.5 75.0 606.0 C75.8 600.5 79.0 599.3 82.0 596.0 C85.0 592.7 88.7 591.0 93.0 586.0 C97.3 581.0 103.7 571.2 108.0 566.0 C112.3 560.8 115.7 554.3 119.0 555.0 C122.3 555.7 125.2 566.2 128.0 570.0 C130.8 573.8 135.0 579.7 136.0 578.0 C137.0 576.3 134.2 565.0 134.0 560.0 C133.8 555.0 132.2 550.8 135.0 548.0 C137.8 545.2 146.8 541.3 151.0 543.0 C155.2 544.7 156.8 554.8 160.0 558.0 C163.2 561.2 167.3 563.7 170.0 562.0 C172.7 560.3 173.5 553.0 176.0 548.0 C178.5 543.0 182.5 535.7 185.0 532.0 C187.5 528.3 188.7 526.0 191.0 526.0 C193.3 526.0 197.2 528.3 199.0 532.0 C200.8 535.7 199.8 545.0 202.0 548.0 C204.2 551.0 210.0 552.7 212.0 550.0 C214.0 547.3 212.3 536.2 214.0 532.0 C215.7 527.8 219.3 525.0 222.0 525.0 C224.7 525.0 228.2 527.5 230.0 532.0 C231.8 536.5 231.3 549.0 233.0 552.0 C234.7 555.0 238.3 555.0 240.0 550.0 C241.7 545.0 240.8 528.0 243.0 522.0 C245.2 516.0 249.5 514.0 253.0 514.0 C256.5 514.0 261.7 515.2 264.0 522.0 C266.3 528.8 265.8 549.5 267.0 555.0 C268.2 560.5 270.0 558.5 271.0 555.0 C272.0 551.5 271.7 538.3 273.0 534.0 C274.3 529.7 277.0 529.0 279.0 529.0 C281.0 529.0 283.7 530.2 285.0 534.0 C286.3 537.8 286.2 549.0 287.0 552.0 C287.8 555.0 289.2 553.3 290.0 552.0 C290.8 550.7 291.0 546.0 292.0 544.0 C293.0 542.0 294.5 540.0 296.0 540.0 C297.5 540.0 299.8 542.0 301.0 544.0 C302.2 546.0 302.2 550.7 303.0 552.0 C303.8 553.3 305.0 554.3 306.0 552.0 C307.0 549.7 307.3 541.3 309.0 538.0 C310.7 534.7 313.7 532.0 316.0 532.0 C318.3 532.0 321.5 533.3 323.0 538.0 C324.5 542.7 323.0 554.3 325.0 560.0 C327.0 565.7 331.7 570.3 335.0 572.0 C338.3 573.7 343.3 571.7 345.0 570.0 C346.7 568.3 343.7 563.7 345.0 562.0 C346.3 560.3 350.2 557.3 353.0 560.0 C355.8 562.7 359.2 571.3 362.0 578.0 C364.8 584.7 367.5 593.3 370.0 600.0 C372.5 606.7 375.0 611.3 377.0 618.0 C379.0 624.7 380.3 632.5 382.0 640.0 C383.7 647.5 385.5 654.3 387.0 663.0 C388.5 671.7 392.2 684.7 391.0 692.0 C389.8 699.3 385.5 699.7 380.0 707.0 C374.5 714.3 363.0 728.5 358.0 736.0 C353.0 743.5 354.7 746.0 350.0 752.0 C345.3 758.0 339.0 768.0 330.0 772.0 C321.0 776.0 307.3 777.5 296.0 776.0 C284.7 774.5 269.8 769.3 262.0 763.0 C254.2 756.7 251.8 747.8 249.0 738.0 C246.2 728.2 247.8 708.3 245.0 704.0 C242.2 699.7 239.8 711.3 232.0 712.0 C224.2 712.7 207.2 710.8 198.0 708.0 C188.8 705.2 181.3 701.3 177.0 695.0 C172.7 688.7 176.3 675.7 172.0 670.0 C167.7 664.3 160.2 663.8 151.0 661.0 C141.8 658.2 128.3 656.5 117.0 653.0 C105.7 649.5 89.7 644.0 83.0 640.0 C76.3 636.0 78.3 634.7 77.0 629.0 Z"/></clipPath><g clip-path="url(#redc)"><rect x="384" y="676" width="3" height="3" fill="#6c6c6c"/><rect x="209" y="554" width="4" height="2" fill="#6c6c6c"/><rect x="190" y="724" width="3" height="3" fill="#6c6c6c"/><rect x="387" y="623" width="4" height="3" fill="#6c6c6c"/><rect x="323" y="588" width="2" height="4" fill="#6c6c6c"/><rect x="313" y="538" width="2" height="4" fill="#6c6c6c"/><rect x="260" y="543" width="2" height="4" fill="#6c6c6c"/><rect x="128" y="666" width="2" height="3" fill="#6c6c6c"/><rect x="191" y="552" width="3" height="4" fill="#6c6c6c"/><rect x="245" y="567" width="2" height="2" fill="#6c6c6c"/><rect x="73" y="611" width="4" height="2" fill="#6c6c6c"/><rect x="362" y="739" width="2" height="4" fill="#6c6c6c"/><rect x="315" y="569" width="2" height="3" fill="#6c6c6c"/><rect x="323" y="781" width="3" height="3" fill="#6c6c6c"/><rect x="257" y="707" width="3" height="4" fill="#6c6c6c"/><rect x="180" y="529" width="3" height="3" fill="#6c6c6c"/><rect x="381" y="697" width="3" height="4" fill="#6c6c6c"/><rect x="283" y="537" width="3" height="3" fill="#6c6c6c"/><rect x="135" y="548" width="2" height="3" fill="#6c6c6c"/><rect x="264" y="562" width="4" height="4" fill="#6c6c6c"/><rect x="389" y="719" width="3" height="2" fill="#6c6c6c"/><rect x="368" y="587" width="4" height="3" fill="#6c6c6c"/><rect x="319" y="543" width="3" height="2" fill="#6c6c6c"/><rect x="308" y="550" width="3" height="4" fill="#6c6c6c"/><rect x="301" y="573" width="4" height="4" fill="#6c6c6c"/><rect x="275" y="558" width="3" height="4" fill="#6c6c6c"/><rect x="211" y="538" width="3" height="4" fill="#6c6c6c"/><rect x="216" y="540" width="4" height="3" fill="#6c6c6c"/><rect x="365" y="604" width="2" height="3" fill="#6c6c6c"/><rect x="316" y="556" width="3" height="3" fill="#6c6c6c"/><rect x="387" y="726" width="3" height="4" fill="#6c6c6c"/><rect x="349" y="570" width="3" height="2" fill="#6c6c6c"/><rect x="112" y="668" width="3" height="4" fill="#6c6c6c"/><rect x="257" y="541" width="4" height="4" fill="#6c6c6c"/><rect x="87" y="657" width="3" height="3" fill="#6c6c6c"/><rect x="96" y="614" width="2" height="2" fill="#6c6c6c"/><rect x="134" y="586" width="3" height="3" fill="#6c6c6c"/><rect x="184" y="579" width="4" height="3" fill="#6c6c6c"/><rect x="289" y="555" width="3" height="4" fill="#6c6c6c"/><rect x="375" y="639" width="3" height="3" fill="#6c6c6c"/><rect x="279" y="562" width="4" height="3" fill="#6c6c6c"/><rect x="234" y="726" width="4" height="3" fill="#6c6c6c"/><rect x="136" y="570" width="2" height="2" fill="#6c6c6c"/><rect x="333" y="562" width="2" height="3" fill="#6c6c6c"/><rect x="77" y="615" width="3" height="3" fill="#6c6c6c"/><rect x="125" y="571" width="3" height="3" fill="#6c6c6c"/><rect x="231" y="526" width="4" height="3" fill="#6c6c6c"/><rect x="232" y="526" width="3" height="3" fill="#6c6c6c"/><rect x="137" y="552" width="3" height="3" fill="#6c6c6c"/><rect x="158" y="545" width="3" height="3" fill="#6c6c6c"/><rect x="215" y="533" width="4" height="3" fill="#6c6c6c"/><rect x="355" y="578" width="3" height="3" fill="#6c6c6c"/><rect x="139" y="588" width="4" height="3" fill="#6c6c6c"/><rect x="300" y="540" width="4" height="2" fill="#6c6c6c"/><rect x="270" y="549" width="2" height="3" fill="#6c6c6c"/><rect x="337" y="785" width="2" height="3" fill="#6c6c6c"/><rect x="238" y="540" width="3" height="2" fill="#6c6c6c"/><rect x="369" y="661" width="3" height="2" fill="#6c6c6c"/><rect x="310" y="551" width="2" height="4" fill="#6c6c6c"/><rect x="366" y="737" width="3" height="3" fill="#6c6c6c"/><rect x="330" y="578" width="2" height="4" fill="#6c6c6c"/><rect x="295" y="556" width="2" height="3" fill="#6c6c6c"/><rect x="385" y="679" width="3" height="3" fill="#6c6c6c"/><rect x="80" y="641" width="3" height="3" fill="#6c6c6c"/><rect x="232" y="527" width="2" height="2" fill="#6c6c6c"/><rect x="243" y="535" width="3" height="2" fill="#6c6c6c"/><rect x="278" y="569" width="3" height="2" fill="#6c6c6c"/><rect x="108" y="587" width="4" height="2" fill="#6c6c6c"/><rect x="232" y="540" width="3" height="4" fill="#6c6c6c"/><rect x="156" y="562" width="4" height="3" fill="#6c6c6c"/><rect x="168" y="566" width="3" height="3" fill="#6c6c6c"/><rect x="252" y="709" width="3" height="3" fill="#6c6c6c"/><rect x="122" y="664" width="2" height="3" fill="#6c6c6c"/><rect x="280" y="544" width="4" height="4" fill="#6c6c6c"/><rect x="85" y="645" width="3" height="3" fill="#6c6c6c"/><rect x="168" y="712" width="2" height="2" fill="#6c6c6c"/><rect x="338" y="756" width="2" height="3" fill="#6c6c6c"/><rect x="234" y="570" width="3" height="2" fill="#6c6c6c"/><rect x="77" y="656" width="2" height="3" fill="#6c6c6c"/><rect x="342" y="585" width="3" height="3" fill="#6c6c6c"/><rect x="284" y="797" width="3" height="3" fill="#6c6c6c"/><rect x="215" y="568" width="4" height="2" fill="#6c6c6c"/><rect x="357" y="582" width="3" height="3" fill="#6c6c6c"/><rect x="122" y="552" width="3" height="3" fill="#6c6c6c"/><rect x="294" y="554" width="2" height="4" fill="#6c6c6c"/><rect x="189" y="534" width="3" height="4" fill="#6c6c6c"/><rect x="360" y="744" width="3" height="3" fill="#6c6c6c"/><rect x="354" y="576" width="3" height="2" fill="#6c6c6c"/><rect x="100" y="573" width="2" height="3" fill="#6c6c6c"/><rect x="312" y="543" width="4" height="4" fill="#6c6c6c"/><path d="M90 610 L130 600" stroke="#c04a4a" stroke-width="3" stroke-linecap="round" opacity="0.6"/><path d="M95 625 L140 618" stroke="#c04a4a" stroke-width="3" stroke-linecap="round" opacity="0.6"/><path d="M150 590 L200 570" stroke="#c04a4a" stroke-width="3" stroke-linecap="round" opacity="0.6"/><path d="M230 560 L250 590" stroke="#c04a4a" stroke-width="3" stroke-linecap="round" opacity="0.6"/><path d="M300 560 L290 600" stroke="#c04a4a" stroke-width="3" stroke-linecap="round" opacity="0.6"/><path d="M340 600 L320 630" stroke="#c04a4a" stroke-width="3" stroke-linecap="round" opacity="0.6"/><path d="M260 720 L300 760" stroke="#c04a4a" stroke-width="3" stroke-linecap="round" opacity="0.6"/><path d="M300 720 L310 765" stroke="#c04a4a" stroke-width="3" stroke-linecap="round" opacity="0.6"/><path d="M330 720 L320 760" stroke="#c04a4a" stroke-width="3" stroke-linecap="round" opacity="0.6"/></g><rect x="119" y="598" width="4" height="4" fill="#6a6a6a"/><rect x="90" y="617" width="4" height="4" fill="#6a6a6a"/><rect x="100" y="630" width="4" height="4" fill="#6a6a6a"/><rect x="128" y="575" width="5" height="5" fill="#6a6a6a"/><rect x="262" y="594" width="4" height="4" fill="#6a6a6a"/><rect x="340" y="616" width="4" height="4" fill="#6a6a6a"/><rect x="332" y="640" width="6" height="3" fill="#6a6a6a"/><rect x="360" y="600" width="5" height="4" fill="#6a6a6a"/><path d="M350 575 L368 610" stroke="#6a6a6a" stroke-width="3" stroke-linecap="round"/><path d="M338 590 L360 622" stroke="#6a6a6a" stroke-width="3" stroke-linecap="round"/><path d="M345 628 L370 640" stroke="#6a6a6a" stroke-width="3" stroke-linecap="round"/><path d="M355 655 L380 668" stroke="#6a6a6a" stroke-width="3" stroke-linecap="round"/><path d="M340 672 L362 690" stroke="#6a6a6a" stroke-width="3" stroke-linecap="round"/><path d="M318 652 L340 662" stroke="#6a6a6a" stroke-width="3" stroke-linecap="round"/><path d="M300 700 L330 705" stroke="#6a6a6a" stroke-width="3" stroke-linecap="round"/><path d="M330 715 L350 708" stroke="#6a6a6a" stroke-width="3" stroke-linecap="round"/><path d="M366 690 L385 700" stroke="#6a6a6a" stroke-width="3" stroke-linecap="round"/><path d="M177 638 L186 628 L198 630 L206 622 L215 621 L210 632 L206 648 L195 653 L184 650 L178 645 Z" fill="#777"/><path d="M79 640 L138 657 L181 670 L232 661 L270 665 L309 670 L330 678 L340 695 L330 704 L287 695 L245 700 L211 712 L181 712 L160 695 L138 678 L96 657 Z" fill="#6e6e6e"/><path d="M70 632 L100 645 L140 658 L180 671 L215 676 L225 690 L180 686 L140 674 L96 661 L66 650 Z" fill="#121212" filter="url(#b1)"/><path d="M177 680 L210 676 L240 672 L270 676 L290 682 L287 690 L260 688 L240 692 L210 700 L185 698 Z" fill="#d45757"/><path d="M274 643 L282 639 L321 640 L321 658 L300 657 L285 655 L278 659 Z" fill="#141414"/><path d="M384 628 C392 660 392 690 382 718 C370 745 350 768 320 782" stroke="#151515" stroke-width="7" fill="none" filter="url(#b1)"/><path d="M246 702 C247 735 262 768 300 778 C335 782 358 760 388 712" stroke="#1a1a1a" stroke-width="2.5" fill="none"/><path d="M262 700 C290 697 330 697 388 704" stroke="#6a6a6a" stroke-width="2" fill="none" opacity="0.8"/></g><path d="M409 526.5 H419.5 V713 H409" stroke="#fff" stroke-width="1.2" fill="none"/><path d="M417 545.5 H419.5" stroke="#fff" stroke-width="1.2"/><path d="M417 564.2 H419.5" stroke="#fff" stroke-width="1.2"/><path d="M417 582.6 H419.5" stroke="#fff" stroke-width="1.2"/><path d="M417 601.5 H419.5" stroke="#fff" stroke-width="1.2"/><path d="M417 620.5 H419.5" stroke="#fff" stroke-width="1.2"/><path d="M417 639 H419.5" stroke="#fff" stroke-width="1.2"/><path d="M417 657.6 H419.5" stroke="#fff" stroke-width="1.2"/><path d="M417 676 H419.5" stroke="#fff" stroke-width="1.2"/><path d="M417 695 H419.5" stroke="#fff" stroke-width="1.2"/><rect x="233.5" y="577.5" width="10" height="10" fill="none" stroke="#fff" stroke-width="1"/></svg>
<div class="t" style="left:38px;top:424.49px;font-size:16.2px;line-height:19px;color:#f2f2f2;">Proband</div>
<div class="t" style="left:38px;top:441.49px;font-size:16.2px;line-height:19px;color:#f2f2f2;">19780101&nbsp;&nbsp;M</div>
<div class="t" style="left:38px;top:458.39px;font-size:16.2px;line-height:19px;color:#f2f2f2;">001</div>
<div class="t" style="left:38px;top:475.39px;font-size:16.2px;line-height:19px;color:#f2f2f2;">(- - -):</div>
<div class="t" style="left:42px;top:492.39px;font-size:16.2px;line-height:19px;color:#f2f2f2;">GV</div>
<div class="t" style="left:227.5px;top:427.74px;font-size:19.5px;line-height:23px;color:#f2f2f2;">H</div>
<div class="t" style="right:631px;top:424.49px;font-size:16.2px;line-height:19px;color:#f2f2f2;">Klinikum Bremen Mitte</div>
<div class="t" style="right:631px;top:441.49px;font-size:16.2px;line-height:19px;color:#f2f2f2;">NUMARIS/4</div>
<div class="t" style="right:631px;top:458.39px;font-size:16.2px;line-height:19px;color:#f2f2f2;">MR</div>
<div class="t" style="left:36px;top:611.76px;font-size:18px;line-height:22px;color:#f2f2f2;">A</div>
<div class="t" style="left:379px;top:615.02px;font-size:11.5px;line-height:14px;color:#f2f2f2;font-weight:bold;letter-spacing:-0.3px;text-shadow:0 0 2px #000,0 0 1px #000">10 cm</div>
<div class="t" style="left:38px;top:714.39px;font-size:16.2px;line-height:19px;color:#f2f2f2;text-shadow:0 0 1.5px #000,0 0 1px #000">Slice: 53</div>
<div class="t" style="left:38px;top:731.39px;font-size:16.2px;line-height:19px;color:#f2f2f2;text-shadow:0 0 1.5px #000,0 0 1px #000">Timepoint: 0</div>
<div class="t" style="left:38px;top:748.29px;font-size:16.2px;line-height:19px;color:#f2f2f2;text-shadow:0 0 1.5px #000,0 0 1px #000">109,91,80,Gray,1</div>
<div class="t" style="left:38px;top:765.29px;font-size:16.2px;line-height:19px;color:#f2f2f2;text-shadow:0 0 1.5px #000,0 0 1px #000">1.953,1.953,2.000</div>
<div class="t" style="left:38px;top:782.29px;font-size:16.2px;line-height:19px;color:#f2f2f2;">t1_mpr_sag_VICORA</div>
<div class="t" style="left:38px;top:798.49px;font-size:16.2px;line-height:19px;color:#f2f2f2;">MeVisLab</div>
<div class="t" style="right:631px;top:765.29px;font-size:16.2px;line-height:19px;color:#f2f2f2;text-shadow:0 0 1.5px #000,0 0 1px #000">MR Mode</div>
<div class="t" style="right:631px;top:782.29px;font-size:16.2px;line-height:19px;color:#f2f2f2;">Scan: 20070616</div>
<div class="t" style="right:631px;top:798.49px;font-size:16.2px;line-height:19px;color:#f2f2f2;">LUT C/W: 439.962 / 932.866</div>
<div class="win" style="left:443px;top:393px;width:607px;height:438px;background:#f0f0f0"></div>
<div class="a" style="left:443px;top:393px;width:607px;height:30px;background:#fff"></div>
<div class="a" style="left:451px;top:399px;width:17px;height:17px"><svg width="17" height="17" viewBox="0 0 17 17"><defs><linearGradient id="ig" x1="0" y1="0" x2="0" y2="1"><stop offset="0" stop-color="#4d9cb2"/><stop offset="1" stop-color="#2a6c84"/></linearGradient></defs><circle cx="8" cy="8" r="8" fill="url(#ig)"/><path d="M6 2.7 Q7 3.5 8 3.3 Q9 3.5 10 2.7 Q10.3 5.1 8 5.3 Q5.7 5.1 6 2.7 Z" fill="#fff"/><path d="M2.2 5.9 L10.6 5.9 L13.7 4.2 L14.3 6 L11.2 7.7 L11.2 13.4 Q8.2 14.4 5.3 13.4 L5.3 7.6 L2.2 7.6 Z" fill="#fff"/></svg></div>
<div class="t" style="left:473px;top:401.08px;font-size:11.3px;line-height:14px;color:#000;">Viewer SoExaminerViewer</div>
<div class="a" style="left:930px;top:407px;width:10px;height:1px;background:#000"></div>
<div class="a" style="left:976px;top:402px;width:10px;height:10px;border:1px solid #000"></div>
<svg class="a" style="left:1022px;top:402px" width="11" height="11"><path d="M0.5 0.5L10.5 10.5M10.5 0.5L0.5 10.5" stroke="#000" stroke-width="1"/></svg>
<svg class="a" style="left:471px;top:423px" width="540" height="380" viewBox="471 423 540 380"><rect x="471" y="423" width="540" height="380" fill="#000"/><defs><linearGradient id="hg1" x1="0" y1="0" x2="0.15" y2="1"><stop offset="0" stop-color="#525252"/><stop offset="0.45" stop-color="#5c5c5c"/><stop offset="1" stop-color="#686868"/></linearGradient><radialGradient id="bg1" cx="0.45" cy="0.35" r="0.7"><stop offset="0" stop-color="#dd5c5c"/><stop offset="1" stop-color="#c64a4a"/></radialGradient><filter id="hb"><feGaussianBlur stdDeviation="1.5"/></filter><filter id="hb3"><feGaussianBlur stdDeviation="3"/></filter></defs><path d="M723.0 468.0 C714.7 468.8 703.7 470.1 694.0 473.0 C684.3 475.9 674.0 480.0 665.0 485.5 C656.0 491.0 647.5 497.8 640.0 506.0 C632.5 514.2 625.5 525.3 620.0 535.0 C614.5 544.7 610.7 553.7 607.0 564.0 C603.3 574.3 600.5 588.5 598.0 597.0 C595.5 605.5 593.2 610.5 592.0 615.0 C590.8 619.5 590.2 619.8 591.0 624.0 C591.8 628.2 595.0 634.7 597.0 640.0 C599.0 645.3 601.3 652.3 603.0 656.0 C604.7 659.7 607.0 657.7 607.0 662.0 C607.0 666.3 604.7 676.0 603.0 682.0 C601.3 688.0 598.5 691.3 597.0 698.0 C595.5 704.7 593.3 713.5 594.0 722.0 C594.7 730.5 600.0 742.8 601.0 749.0 C602.0 755.2 594.7 755.3 600.0 759.0 C605.3 762.7 617.3 768.7 633.0 771.0 C648.7 773.3 675.5 773.0 694.0 773.0 C712.5 773.0 726.8 771.7 744.0 771.0 C761.2 770.3 784.3 770.2 797.0 769.0 C809.7 767.8 811.5 766.7 820.0 764.0 C828.5 761.3 839.0 757.3 848.0 753.0 C857.0 748.7 868.0 744.2 874.0 738.0 C880.0 731.8 881.8 724.0 884.0 716.0 C886.2 708.0 886.3 701.5 887.0 690.0 C887.7 678.5 888.2 661.2 888.0 647.0 C887.8 632.8 887.3 618.2 886.0 605.0 C884.7 591.8 883.0 579.7 880.0 568.0 C877.0 556.3 873.5 545.3 868.0 535.0 C862.5 524.7 855.3 514.2 847.0 506.0 C838.7 497.8 829.7 491.0 818.0 485.5 C806.3 480.0 789.3 475.9 777.0 473.0 C764.7 470.1 753.0 468.8 744.0 468.0 C735.0 467.2 731.3 467.2 723.0 468.0 Z" fill="url(#hg1)"/><clipPath id="hdc"><path d="M723.0 468.0 C714.7 468.8 703.7 470.1 694.0 473.0 C684.3 475.9 674.0 480.0 665.0 485.5 C656.0 491.0 647.5 497.8 640.0 506.0 C632.5 514.2 625.5 525.3 620.0 535.0 C614.5 544.7 610.7 553.7 607.0 564.0 C603.3 574.3 600.5 588.5 598.0 597.0 C595.5 605.5 593.2 610.5 592.0 615.0 C590.8 619.5 590.2 619.8 591.0 624.0 C591.8 628.2 595.0 634.7 597.0 640.0 C599.0 645.3 601.3 652.3 603.0 656.0 C604.7 659.7 607.0 657.7 607.0 662.0 C607.0 666.3 604.7 676.0 603.0 682.0 C601.3 688.0 598.5 691.3 597.0 698.0 C595.5 704.7 593.3 713.5 594.0 722.0 C594.7 730.5 600.0 742.8 601.0 749.0 C602.0 755.2 594.7 755.3 600.0 759.0 C605.3 762.7 617.3 768.7 633.0 771.0 C648.7 773.3 675.5 773.0 694.0 773.0 C712.5 773.0 726.8 771.7 744.0 771.0 C761.2 770.3 784.3 770.2 797.0 769.0 C809.7 767.8 811.5 766.7 820.0 764.0 C828.5 761.3 839.0 757.3 848.0 753.0 C857.0 748.7 868.0 744.2 874.0 738.0 C880.0 731.8 881.8 724.0 884.0 716.0 C886.2 708.0 886.3 701.5 887.0 690.0 C887.7 678.5 888.2 661.2 888.0 647.0 C887.8 632.8 887.3 618.2 886.0 605.0 C884.7 591.8 883.0 579.7 880.0 568.0 C877.0 556.3 873.5 545.3 868.0 535.0 C862.5 524.7 855.3 514.2 847.0 506.0 C838.7 497.8 829.7 491.0 818.0 485.5 C806.3 480.0 789.3 475.9 777.0 473.0 C764.7 470.1 753.0 468.8 744.0 468.0 C735.0 467.2 731.3 467.2 723.0 468.0 Z"/></clipPath><g clip-path="url(#hdc)"><path d="M596 640 C620 645 650 655 680 672 C710 690 730 720 735 775 L600 775 L595 700 Z" fill="#6a6a6a" filter="url(#hb3)"/><path d="M593 616 C603 638 612 648 624 654" stroke="#767676" stroke-width="6" fill="none" filter="url(#hb)"/><path d="M609 662 C603 682 599 712 604 738" stroke="#787878" stroke-width="4.5" fill="none" filter="url(#hb)"/><path d="M619 660 C627 690 634 720 637 747" stroke="#747474" stroke-width="5" fill="none" filter="url(#hb)"/><path d="M613 672 C612 700 614 725 621 742" stroke="#3c3c3c" stroke-width="2.2" fill="none" filter="url(#hb)"/><path d="M638 690 C643 710 646 730 649 746" stroke="#454545" stroke-width="5" fill="none" filter="url(#hb3)"/><path d="M597 700 C596 720 598 735 603 748" stroke="#444" stroke-width="2" fill="none" filter="url(#hb)"/></g><g clip-path="url(#hdc)"><path d="M858 646 L870 640 L882 648 L886 670 L887 705 L880 738 L866 748 L857 728 L863 712 L853 700 L860 668 Z" fill="#7c7c7c" filter="url(#hb)"/><path d="M864 650 L876 646 L882 680 L876 700 L866 698 Z" fill="#8c8c8c" filter="url(#hb)"/><path d="M860 668 L866 680 L860 700 L870 706 M856 728 L868 722 L874 735" stroke="#2e2e2e" stroke-width="1" fill="none"/></g><path d="M694.0 502.0 C682.3 504.3 674.0 506.5 665.0 512.0 C656.0 517.5 646.2 527.0 640.0 535.0 C633.8 543.0 631.3 552.3 628.0 560.0 C624.7 567.7 621.0 575.2 620.0 581.0 C619.0 586.8 619.7 589.3 622.0 595.0 C624.3 600.7 629.7 609.8 634.0 615.0 C638.3 620.2 643.3 622.3 648.0 626.0 C652.7 629.7 658.2 631.8 662.0 637.0 C665.8 642.2 668.2 651.5 671.0 657.0 C673.8 662.5 675.8 667.7 679.0 670.0 C682.2 672.3 685.8 672.0 690.0 671.0 C694.2 670.0 700.0 664.3 704.0 664.0 C708.0 663.7 710.3 667.5 714.0 669.0 C717.7 670.5 725.5 669.5 726.0 673.0 C726.5 676.5 718.5 684.5 717.0 690.0 C715.5 695.5 716.2 703.2 717.0 706.0 C717.8 708.8 720.3 708.8 722.0 707.0 C723.7 705.2 723.3 695.5 727.0 695.0 C730.7 694.5 738.8 700.3 744.0 704.0 C749.2 707.7 752.5 714.7 758.0 717.0 C763.5 719.3 767.0 719.3 777.0 718.0 C787.0 716.7 805.7 714.0 818.0 709.0 C830.3 704.0 843.3 696.3 851.0 688.0 C858.7 679.7 861.5 669.3 864.0 659.0 C866.5 648.7 866.7 637.7 866.0 626.0 C865.3 614.3 862.5 601.3 860.0 589.0 C857.5 576.7 855.2 563.0 851.0 552.0 C846.8 541.0 841.8 530.7 835.0 523.0 C828.2 515.3 819.7 510.2 810.0 506.0 C800.3 501.8 789.5 499.3 777.0 498.0 C764.5 496.7 748.8 497.3 735.0 498.0 C721.2 498.7 705.7 499.7 694.0 502.0 Z" fill="url(#bg1)"/><circle cx="694" cy="502" r="4.0" fill="#d55858" stroke="#b04444" stroke-width="1"/><circle cx="685" cy="505" r="5.6" fill="#d55858" stroke="#b04444" stroke-width="1"/><circle cx="677" cy="508" r="5.4" fill="#d55858" stroke="#b04444" stroke-width="1"/><circle cx="668" cy="511" r="4.9" fill="#d55858" stroke="#b04444" stroke-width="1"/><circle cx="661" cy="516" r="4.1" fill="#d55858" stroke="#b04444" stroke-width="1"/><circle cx="654" cy="522" r="5.9" fill="#d55858" stroke="#b04444" stroke-width="1"/><circle cx="648" cy="528" r="5.9" fill="#d55858" stroke="#b04444" stroke-width="1"/><circle cx="641" cy="534" r="5.0" fill="#d55858" stroke="#b04444" stroke-width="1"/><circle cx="637" cy="542" r="5.0" fill="#d55858" stroke="#b04444" stroke-width="1"/><circle cx="633" cy="550" r="4.2" fill="#d55858" stroke="#b04444" stroke-width="1"/><circle cx="629" cy="558" r="3.5" fill="#d55858" stroke="#b04444" stroke-width="1"/><circle cx="626" cy="566" r="4.6" fill="#d55858" stroke="#b04444" stroke-width="1"/><circle cx="622" cy="575" r="5.3" fill="#d55858" stroke="#b04444" stroke-width="1"/><circle cx="620" cy="583" r="3.7" fill="#d55858" stroke="#b04444" stroke-width="1"/><circle cx="622" cy="592" r="5.9" fill="#d55858" stroke="#b04444" stroke-width="1"/><circle cx="625" cy="600" r="4.2" fill="#d55858" stroke="#b04444" stroke-width="1"/><circle cx="630" cy="608" r="4.2" fill="#d55858" stroke="#b04444" stroke-width="1"/><circle cx="635" cy="615" r="3.6" fill="#d55858" stroke="#b04444" stroke-width="1"/><circle cx="642" cy="621" r="6.5" fill="#d55858" stroke="#b04444" stroke-width="1"/><circle cx="649" cy="627" r="5.7" fill="#d55858" stroke="#b04444" stroke-width="1"/><circle cx="656" cy="632" r="6.1" fill="#d55858" stroke="#b04444" stroke-width="1"/><circle cx="662" cy="638" r="5.3" fill="#d55858" stroke="#b04444" stroke-width="1"/><circle cx="666" cy="646" r="3.6" fill="#d55858" stroke="#b04444" stroke-width="1"/><circle cx="670" cy="654" r="4.5" fill="#d55858" stroke="#b04444" stroke-width="1"/><circle cx="674" cy="662" r="5.0" fill="#d55858" stroke="#b04444" stroke-width="1"/><circle cx="679" cy="670" r="3.8" fill="#d55858" stroke="#b04444" stroke-width="1"/><circle cx="688" cy="671" r="6.4" fill="#d55858" stroke="#b04444" stroke-width="1"/><circle cx="696" cy="668" r="4.6" fill="#d55858" stroke="#b04444" stroke-width="1"/><circle cx="704" cy="664" r="4.0" fill="#d55858" stroke="#b04444" stroke-width="1"/><circle cx="712" cy="668" r="6.0" fill="#d55858" stroke="#b04444" stroke-width="1"/><circle cx="721" cy="671" r="3.9" fill="#d55858" stroke="#b04444" stroke-width="1"/><circle cx="724" cy="676" r="6.3" fill="#d55858" stroke="#b04444" stroke-width="1"/><circle cx="720" cy="684" r="4.9" fill="#d55858" stroke="#b04444" stroke-width="1"/><circle cx="717" cy="692" r="5.2" fill="#d55858" stroke="#b04444" stroke-width="1"/><circle cx="717" cy="701" r="4.5" fill="#d55858" stroke="#b04444" stroke-width="1"/><circle cx="721" cy="707" r="5.0" fill="#d55858" stroke="#b04444" stroke-width="1"/><circle cx="725" cy="700" r="4.1" fill="#d55858" stroke="#b04444" stroke-width="1"/><circle cx="731" cy="697" r="3.6" fill="#d55858" stroke="#b04444" stroke-width="1"/><circle cx="739" cy="701" r="6.1" fill="#d55858" stroke="#b04444" stroke-width="1"/><circle cx="746" cy="706" r="4.2" fill="#d55858" stroke="#b04444" stroke-width="1"/><circle cx="753" cy="712" r="5.8" fill="#d55858" stroke="#b04444" stroke-width="1"/><circle cx="760" cy="717" r="4.1" fill="#d55858" stroke="#b04444" stroke-width="1"/><circle cx="769" cy="718" r="6.4" fill="#d55858" stroke="#b04444" stroke-width="1"/><circle cx="778" cy="718" r="6.2" fill="#d55858" stroke="#b04444" stroke-width="1"/><circle cx="786" cy="716" r="5.8" fill="#d55858" stroke="#b04444" stroke-width="1"/><circle cx="795" cy="714" r="5.8" fill="#d55858" stroke="#b04444" stroke-width="1"/><circle cx="804" cy="712" r="5.2" fill="#d55858" stroke="#b04444" stroke-width="1"/><circle cx="813" cy="710" r="5.7" fill="#d55858" stroke="#b04444" stroke-width="1"/><circle cx="821" cy="707" r="3.9" fill="#d55858" stroke="#b04444" stroke-width="1"/><circle cx="829" cy="702" r="4.9" fill="#d55858" stroke="#b04444" stroke-width="1"/><circle cx="836" cy="697" r="6.0" fill="#d55858" stroke="#b04444" stroke-width="1"/><circle cx="844" cy="693" r="4.1" fill="#d55858" stroke="#b04444" stroke-width="1"/><circle cx="851" cy="687" r="6.3" fill="#d55858" stroke="#b04444" stroke-width="1"/><circle cx="855" cy="679" r="6.2" fill="#d55858" stroke="#b04444" stroke-width="1"/><circle cx="859" cy="671" r="4.7" fill="#d55858" stroke="#b04444" stroke-width="1"/><circle cx="862" cy="663" r="4.6" fill="#d55858" stroke="#b04444" stroke-width="1"/><circle cx="864" cy="654" r="4.9" fill="#d55858" stroke="#b04444" stroke-width="1"/><circle cx="865" cy="645" r="4.7" fill="#d55858" stroke="#b04444" stroke-width="1"/><circle cx="865" cy="636" r="6.5" fill="#d55858" stroke="#b04444" stroke-width="1"/><circle cx="866" cy="627" r="4.7" fill="#d55858" stroke="#b04444" stroke-width="1"/><circle cx="865" cy="618" r="3.6" fill="#d55858" stroke="#b04444" stroke-width="1"/><circle cx="863" cy="609" r="3.8" fill="#d55858" stroke="#b04444" stroke-width="1"/><circle cx="862" cy="601" r="5.7" fill="#d55858" stroke="#b04444" stroke-width="1"/><circle cx="860" cy="592" r="6.5" fill="#d55858" stroke="#b04444" stroke-width="1"/><circle cx="859" cy="583" r="5.0" fill="#d55858" stroke="#b04444" stroke-width="1"/><circle cx="856" cy="574" r="5.0" fill="#d55858" stroke="#b04444" stroke-width="1"/><circle cx="854" cy="565" r="5.2" fill="#d55858" stroke="#b04444" stroke-width="1"/><circle cx="852" cy="557" r="5.7" fill="#d55858" stroke="#b04444" stroke-width="1"/><circle cx="849" cy="548" r="4.2" fill="#d55858" stroke="#b04444" stroke-width="1"/><circle cx="845" cy="540" r="5.3" fill="#d55858" stroke="#b04444" stroke-width="1"/><circle cx="840" cy="533" r="5.2" fill="#d55858" stroke="#b04444" stroke-width="1"/><circle cx="836" cy="525" r="5.4" fill="#d55858" stroke="#b04444" stroke-width="1"/><circle cx="829" cy="519" r="4.0" fill="#d55858" stroke="#b04444" stroke-width="1"/><circle cx="822" cy="514" r="4.0" fill="#d55858" stroke="#b04444" stroke-width="1"/><circle cx="814" cy="509" r="4.5" fill="#d55858" stroke="#b04444" stroke-width="1"/><circle cx="806" cy="505" r="6.3" fill="#d55858" stroke="#b04444" stroke-width="1"/><circle cx="798" cy="503" r="4.5" fill="#d55858" stroke="#b04444" stroke-width="1"/><circle cx="789" cy="501" r="5.3" fill="#d55858" stroke="#b04444" stroke-width="1"/><circle cx="780" cy="499" r="4.4" fill="#d55858" stroke="#b04444" stroke-width="1"/><circle cx="771" cy="498" r="3.8" fill="#d55858" stroke="#b04444" stroke-width="1"/><circle cx="762" cy="498" r="3.7" fill="#d55858" stroke="#b04444" stroke-width="1"/><circle cx="753" cy="498" r="5.9" fill="#d55858" stroke="#b04444" stroke-width="1"/><circle cx="744" cy="498" r="5.8" fill="#d55858" stroke="#b04444" stroke-width="1"/><circle cx="735" cy="498" r="4.6" fill="#d55858" stroke="#b04444" stroke-width="1"/><circle cx="726" cy="499" r="5.6" fill="#d55858" stroke="#b04444" stroke-width="1"/><circle cx="717" cy="500" r="5.5" fill="#d55858" stroke="#b04444" stroke-width="1"/><circle cx="708" cy="501" r="6.2" fill="#d55858" stroke="#b04444" stroke-width="1"/><circle cx="699" cy="501" r="6.4" fill="#d55858" stroke="#b04444" stroke-width="1"/><clipPath id="brc"><path d="M694.0 502.0 C682.3 504.3 674.0 506.5 665.0 512.0 C656.0 517.5 646.2 527.0 640.0 535.0 C633.8 543.0 631.3 552.3 628.0 560.0 C624.7 567.7 621.0 575.2 620.0 581.0 C619.0 586.8 619.7 589.3 622.0 595.0 C624.3 600.7 629.7 609.8 634.0 615.0 C638.3 620.2 643.3 622.3 648.0 626.0 C652.7 629.7 658.2 631.8 662.0 637.0 C665.8 642.2 668.2 651.5 671.0 657.0 C673.8 662.5 675.8 667.7 679.0 670.0 C682.2 672.3 685.8 672.0 690.0 671.0 C694.2 670.0 700.0 664.3 704.0 664.0 C708.0 663.7 710.3 667.5 714.0 669.0 C717.7 670.5 725.5 669.5 726.0 673.0 C726.5 676.5 718.5 684.5 717.0 690.0 C715.5 695.5 716.2 703.2 717.0 706.0 C717.8 708.8 720.3 708.8 722.0 707.0 C723.7 705.2 723.3 695.5 727.0 695.0 C730.7 694.5 738.8 700.3 744.0 704.0 C749.2 707.7 752.5 714.7 758.0 717.0 C763.5 719.3 767.0 719.3 777.0 718.0 C787.0 716.7 805.7 714.0 818.0 709.0 C830.3 704.0 843.3 696.3 851.0 688.0 C858.7 679.7 861.5 669.3 864.0 659.0 C866.5 648.7 866.7 637.7 866.0 626.0 C865.3 614.3 862.5 601.3 860.0 589.0 C857.5 576.7 855.2 563.0 851.0 552.0 C846.8 541.0 841.8 530.7 835.0 523.0 C828.2 515.3 819.7 510.2 810.0 506.0 C800.3 501.8 789.5 499.3 777.0 498.0 C764.5 496.7 748.8 497.3 735.0 498.0 C721.2 498.7 705.7 499.7 694.0 502.0 Z"/></clipPath><g clip-path="url(#brc)"><path d="M613 494 Q618 490 618 478" stroke="#b64646" stroke-width="8.5" stroke-linecap="round" fill="none"/><path d="M607 504 Q618 497 621 498" stroke="#b64646" stroke-width="8.5" stroke-linecap="round" fill="none"/><path d="M612 513 Q600 509 598 510" stroke="#b64646" stroke-width="8.5" stroke-linecap="round" fill="none"/><path d="M610 532 Q613 523 611 522" stroke="#b64646" stroke-width="8.5" stroke-linecap="round" fill="none"/><path d="M613 536 Q619 534 630 536" stroke="#b64646" stroke-width="8.5" stroke-linecap="round" fill="none"/><path d="M617 556 Q615 566 613 573" stroke="#b64646" stroke-width="8.5" stroke-linecap="round" fill="none"/><path d="M609 568 Q610 558 603 552" stroke="#b64646" stroke-width="8.5" stroke-linecap="round" fill="none"/><path d="M611 573 Q612 577 616 580" stroke="#b64646" stroke-width="8.5" stroke-linecap="round" fill="none"/><path d="M607 590 Q607 595 601 600" stroke="#b64646" stroke-width="8.5" stroke-linecap="round" fill="none"/><path d="M610 600 Q614 590 607 591" stroke="#b64646" stroke-width="8.5" stroke-linecap="round" fill="none"/><path d="M614 615 Q621 617 630 617" stroke="#b64646" stroke-width="8.5" stroke-linecap="round" fill="none"/><path d="M607 619 Q608 630 614 635" stroke="#b64646" stroke-width="8.5" stroke-linecap="round" fill="none"/><path d="M616 640 Q613 648 609 651" stroke="#b64646" stroke-width="8.5" stroke-linecap="round" fill="none"/><path d="M608 650 Q606 647 613 634" stroke="#b64646" stroke-width="8.5" stroke-linecap="round" fill="none"/><path d="M608 658 Q600 657 595 647" stroke="#b64646" stroke-width="8.5" stroke-linecap="round" fill="none"/><path d="M612 670 Q606 671 608 680" stroke="#b64646" stroke-width="8.5" stroke-linecap="round" fill="none"/><path d="M614 689 Q621 693 619 697" stroke="#b64646" stroke-width="8.5" stroke-linecap="round" fill="none"/><path d="M611 693 Q604 688 597 684" stroke="#b64646" stroke-width="8.5" stroke-linecap="round" fill="none"/><path d="M608 712 Q618 710 621 715" stroke="#b64646" stroke-width="8.5" stroke-linecap="round" fill="none"/><path d="M614 724 Q605 718 603 713" stroke="#b64646" stroke-width="8.5" stroke-linecap="round" fill="none"/><path d="M620 495 Q624 505 617 508" stroke="#b64646" stroke-width="8.5" stroke-linecap="round" fill="none"/><path d="M629 504 Q621 502 613 505" stroke="#b64646" stroke-width="8.5" stroke-linecap="round" fill="none"/><path d="M623 512 Q621 520 610 525" stroke="#b64646" stroke-width="8.5" stroke-linecap="round" fill="none"/><path d="M624 526 Q632 533 634 532" stroke="#b64646" stroke-width="8.5" stroke-linecap="round" fill="none"/><path d="M623 543 Q625 538 625 528" stroke="#b64646" stroke-width="8.5" stroke-linecap="round" fill="none"/><path d="M623 554 Q624 563 620 567" stroke="#b64646" stroke-width="8.5" stroke-linecap="round" fill="none"/><path d="M622 568 Q613 563 614 557" stroke="#b64646" stroke-width="8.5" stroke-linecap="round" fill="none"/><path d="M622 578 Q615 583 606 581" stroke="#b64646" stroke-width="8.5" stroke-linecap="round" fill="none"/><path d="M622 589 Q620 585 621 573" stroke="#b64646" stroke-width="8.5" stroke-linecap="round" fill="none"/><path d="M628 602 Q637 601 645 599" stroke="#b64646" stroke-width="8.5" stroke-linecap="round" fill="none"/><path d="M621 615 Q629 615 633 610" stroke="#b64646" stroke-width="8.5" stroke-linecap="round" fill="none"/><path d="M626 621 Q629 613 629 607" stroke="#b64646" stroke-width="8.5" stroke-linecap="round" fill="none"/><path d="M625 639 Q615 629 615 627" stroke="#b64646" stroke-width="8.5" stroke-linecap="round" fill="none"/><path d="M623 650 Q626 652 626 664" stroke="#b64646" stroke-width="8.5" stroke-linecap="round" fill="none"/><path d="M624 657 Q627 656 633 661" stroke="#b64646" stroke-width="8.5" stroke-linecap="round" fill="none"/><path d="M621 667 Q616 670 609 670" stroke="#b64646" stroke-width="8.5" stroke-linecap="round" fill="none"/><path d="M621 688 Q625 687 634 688" stroke="#b64646" stroke-width="8.5" stroke-linecap="round" fill="none"/><path d="M620 699 Q618 699 614 706" stroke="#b64646" stroke-width="8.5" stroke-linecap="round" fill="none"/><path d="M624 706 Q620 701 609 698" stroke="#b64646" stroke-width="8.5" stroke-linecap="round" fill="none"/><path d="M627 721 Q625 726 620 729" stroke="#b64646" stroke-width="8.5" stroke-linecap="round" fill="none"/><path d="M641 497 Q640 488 631 489" stroke="#b64646" stroke-width="8.5" stroke-linecap="round" fill="none"/><path d="M632 505 Q630 505 624 498" stroke="#b64646" stroke-width="8.5" stroke-linecap="round" fill="none"/><path d="M635 515 Q640 520 636 527" stroke="#b64646" stroke-width="8.5" stroke-linecap="round" fill="none"/><path d="M641 532 Q641 529 631 526" stroke="#b64646" stroke-width="8.5" stroke-linecap="round" fill="none"/><path d="M635 538 Q640 537 649 537" stroke="#b64646" stroke-width="8.5" stroke-linecap="round" fill="none"/><path d="M632 553 Q630 559 621 557" stroke="#b64646" stroke-width="8.5" stroke-linecap="round" fill="none"/><path d="M631 564 Q633 570 629 582" stroke="#b64646" stroke-width="8.5" stroke-linecap="round" fill="none"/><path d="M634 573 Q641 572 645 572" stroke="#b64646" stroke-width="8.5" stroke-linecap="round" fill="none"/><path d="M637 589 Q640 582 637 579" stroke="#b64646" stroke-width="8.5" stroke-linecap="round" fill="none"/><path d="M636 598 Q634 604 632 612" stroke="#b64646" stroke-width="8.5" stroke-linecap="round" fill="none"/><path d="M638 613 Q643 618 649 615" stroke="#b64646" stroke-width="8.5" stroke-linecap="round" fill="none"/><path d="M640 624 Q647 626 656 626" stroke="#b64646" stroke-width="8.5" stroke-linecap="round" fill="none"/><path d="M638 637 Q628 637 621 639" stroke="#b64646" stroke-width="8.5" stroke-linecap="round" fill="none"/><path d="M640 645 Q633 656 635 661" stroke="#b64646" stroke-width="8.5" stroke-linecap="round" fill="none"/><path d="M638 659 Q640 664 634 675" stroke="#b64646" stroke-width="8.5" stroke-linecap="round" fill="none"/><path d="M636 672 Q626 673 624 673" stroke="#b64646" stroke-width="8.5" stroke-linecap="round" fill="none"/><path d="M639 680 Q643 689 641 696" stroke="#b64646" stroke-width="8.5" stroke-linecap="round" fill="none"/><path d="M631 698 Q642 693 649 696" stroke="#b64646" stroke-width="8.5" stroke-linecap="round" fill="none"/><path d="M639 705 Q636 695 629 691" stroke="#b64646" stroke-width="8.5" stroke-linecap="round" fill="none"/><path d="M634 724 Q637 727 642 736" stroke="#b64646" stroke-width="8.5" stroke-linecap="round" fill="none"/><path d="M649 487 Q650 487 659 495" stroke="#b64646" stroke-width="8.5" stroke-linecap="round" fill="none"/><path d="M649 506 Q652 501 656 499" stroke="#b64646" stroke-width="8.5" stroke-linecap="round" fill="none"/><path d="M649 516 Q650 516 660 511" stroke="#b64646" stroke-width="8.5" stroke-linecap="round" fill="none"/><path d="M645 529 Q636 530 627 529" stroke="#b64646" stroke-width="8.5" stroke-linecap="round" fill="none"/><path d="M646 541 Q646 545 645 556" stroke="#b64646" stroke-width="8.5" stroke-linecap="round" fill="none"/><path d="M645 551 Q647 547 644 540" stroke="#b64646" stroke-width="8.5" stroke-linecap="round" fill="none"/><path d="M644 566 Q649 566 652 571" stroke="#b64646" stroke-width="8.5" stroke-linecap="round" fill="none"/><path d="M652 576 Q643 585 645 590" stroke="#b64646" stroke-width="8.5" stroke-linecap="round" fill="none"/><path d="M644 585 Q648 578 658 580" stroke="#b64646" stroke-width="8.5" stroke-linecap="round" fill="none"/><path d="M653 602 Q656 596 657 592" stroke="#b64646" stroke-width="8.5" stroke-linecap="round" fill="none"/><path d="M645 610 Q640 603 636 602" stroke="#b64646" stroke-width="8.5" stroke-linecap="round" fill="none"/><path d="M651 625 Q657 620 656 613" stroke="#b64646" stroke-width="8.5" stroke-linecap="round" fill="none"/><path d="M649 637 Q645 626 648 624" stroke="#b64646" stroke-width="8.5" stroke-linecap="round" fill="none"/><path d="M645 643 Q653 634 655 635" stroke="#b64646" stroke-width="8.5" stroke-linecap="round" fill="none"/><path d="M648 664 Q643 656 638 655" stroke="#b64646" stroke-width="8.5" stroke-linecap="round" fill="none"/><path d="M645 669 Q644 670 636 677" stroke="#b64646" stroke-width="8.5" stroke-linecap="round" fill="none"/><path d="M646 682 Q646 687 652 692" stroke="#b64646" stroke-width="8.5" stroke-linecap="round" fill="none"/><path d="M643 700 Q639 708 631 713" stroke="#b64646" stroke-width="8.5" stroke-linecap="round" fill="none"/><path d="M648 712 Q651 719 659 723" stroke="#b64646" stroke-width="8.5" stroke-linecap="round" fill="none"/><path d="M650 717 Q649 717 653 725" stroke="#b64646" stroke-width="8.5" stroke-linecap="round" fill="none"/><path d="M659 497 Q655 499 651 506" stroke="#b64646" stroke-width="8.5" stroke-linecap="round" fill="none"/><path d="M662 506 Q667 515 668 516" stroke="#b64646" stroke-width="8.5" stroke-linecap="round" fill="none"/><path d="M661 515 Q662 517 670 514" stroke="#b64646" stroke-width="8.5" stroke-linecap="round" fill="none"/><path d="M659 523 Q651 519 642 518" stroke="#b64646" stroke-width="8.5" stroke-linecap="round" fill="none"/><path d="M656 536 Q666 527 667 528" stroke="#b64646" stroke-width="8.5" stroke-linecap="round" fill="none"/><path d="M657 548 Q651 549 650 553" stroke="#b64646" stroke-width="8.5" stroke-linecap="round" fill="none"/><path d="M658 560 Q663 562 675 564" stroke="#b64646" stroke-width="8.5" stroke-linecap="round" fill="none"/><path d="M659 576 Q660 580 669 582" stroke="#b64646" stroke-width="8.5" stroke-linecap="round" fill="none"/><path d="M664 589 Q663 585 671 580" stroke="#b64646" stroke-width="8.5" stroke-linecap="round" fill="none"/><path d="M660 601 Q657 610 649 611" stroke="#b64646" stroke-width="8.5" stroke-linecap="round" fill="none"/><path d="M658 611 Q657 605 663 602" stroke="#b64646" stroke-width="8.5" stroke-linecap="round" fill="none"/><path d="M656 627 Q655 617 661 616" stroke="#b64646" stroke-width="8.5" stroke-linecap="round" fill="none"/><path d="M657 632 Q649 631 645 638" stroke="#b64646" stroke-width="8.5" stroke-linecap="round" fill="none"/><path d="M662 643 Q663 645 666 654" stroke="#b64646" stroke-width="8.5" stroke-linecap="round" fill="none"/><path d="M659 658 Q663 653 659 644" stroke="#b64646" stroke-width="8.5" stroke-linecap="round" fill="none"/><path d="M663 673 Q657 680 647 679" stroke="#b64646" stroke-width="8.5" stroke-linecap="round" fill="none"/><path d="M662 686 Q660 690 660 702" stroke="#b64646" stroke-width="8.5" stroke-linecap="round" fill="none"/><path d="M656 693 Q653 696 654 708" stroke="#b64646" stroke-width="8.5" stroke-linecap="round" fill="none"/><path d="M663 709 Q664 708 672 710" stroke="#b64646" stroke-width="8.5" stroke-linecap="round" fill="none"/><path d="M664 724 Q659 720 655 717" stroke="#b64646" stroke-width="8.5" stroke-linecap="round" fill="none"/><path d="M670 487 Q665 479 656 479" stroke="#b64646" stroke-width="8.5" stroke-linecap="round" fill="none"/><path d="M672 501 Q675 497 669 488" stroke="#b64646" stroke-width="8.5" stroke-linecap="round" fill="none"/><path d="M668 514 Q673 510 679 507" stroke="#b64646" stroke-width="8.5" stroke-linecap="round" fill="none"/><path d="M675 532 Q667 527 657 529" stroke="#b64646" stroke-width="8.5" stroke-linecap="round" fill="none"/><path d="M675 539 Q679 543 692 545" stroke="#b64646" stroke-width="8.5" stroke-linecap="round" fill="none"/><path d="M672 556 Q665 556 663 563" stroke="#b64646" stroke-width="8.5" stroke-linecap="round" fill="none"/><path d="M673 563 Q671 554 673 551" stroke="#b64646" stroke-width="8.5" stroke-linecap="round" fill="none"/><path d="M677 579 Q680 570 685 568" stroke="#b64646" stroke-width="8.5" stroke-linecap="round" fill="none"/><path d="M675 588 Q676 591 686 590" stroke="#b64646" stroke-width="8.5" stroke-linecap="round" fill="none"/><path d="M676 597 Q680 595 679 586" stroke="#b64646" stroke-width="8.5" stroke-linecap="round" fill="none"/><path d="M673 615 Q670 619 667 621" stroke="#b64646" stroke-width="8.5" stroke-linecap="round" fill="none"/><path d="M669 623 Q665 626 665 631" stroke="#b64646" stroke-width="8.5" stroke-linecap="round" fill="none"/><path d="M672 638 Q668 648 657 649" stroke="#b64646" stroke-width="8.5" stroke-linecap="round" fill="none"/><path d="M674 650 Q665 649 658 646" stroke="#b64646" stroke-width="8.5" stroke-linecap="round" fill="none"/><path d="M674 660 Q669 664 672 670" stroke="#b64646" stroke-width="8.5" stroke-linecap="round" fill="none"/><path d="M673 675 Q676 667 670 663" stroke="#b64646" stroke-width="8.5" stroke-linecap="round" fill="none"/><path d="M674 680 Q679 676 674 665" stroke="#b64646" stroke-width="8.5" stroke-linecap="round" fill="none"/><path d="M674 699 Q670 692 673 685" stroke="#b64646" stroke-width="8.5" stroke-linecap="round" fill="none"/><path d="M676 705 Q682 699 690 703" stroke="#b64646" stroke-width="8.5" stroke-linecap="round" fill="none"/><path d="M671 717 Q670 711 661 703" stroke="#b64646" stroke-width="8.5" stroke-linecap="round" fill="none"/><path d="M683 488 Q682 480 678 475" stroke="#b64646" stroke-width="8.5" stroke-linecap="round" fill="none"/><path d="M688 501 Q687 510 684 512" stroke="#b64646" stroke-width="8.5" stroke-linecap="round" fill="none"/><path d="M681 517 Q677 513 682 506" stroke="#b64646" stroke-width="8.5" stroke-linecap="round" fill="none"/><path d="M687 532 Q686 526 686 519" stroke="#b64646" stroke-width="8.5" stroke-linecap="round" fill="none"/><path d="M688 538 Q691 542 685 552" stroke="#b64646" stroke-width="8.5" stroke-linecap="round" fill="none"/><path d="M679 548 Q669 542 666 543" stroke="#b64646" stroke-width="8.5" stroke-linecap="round" fill="none"/><path d="M685 565 Q678 558 679 551" stroke="#b64646" stroke-width="8.5" stroke-linecap="round" fill="none"/><path d="M687 581 Q685 592 680 596" stroke="#b64646" stroke-width="8.5" stroke-linecap="round" fill="none"/><path d="M681 590 Q681 581 688 579" stroke="#b64646" stroke-width="8.5" stroke-linecap="round" fill="none"/><path d="M681 596 Q681 604 689 608" stroke="#b64646" stroke-width="8.5" stroke-linecap="round" fill="none"/><path d="M686 615 Q693 612 691 601" stroke="#b64646" stroke-width="8.5" stroke-linecap="round" fill="none"/><path d="M685 629 Q685 629 693 635" stroke="#b64646" stroke-width="8.5" stroke-linecap="round" fill="none"/><path d="M683 636 Q675 628 676 621" stroke="#b64646" stroke-width="8.5" stroke-linecap="round" fill="none"/><path d="M684 647 Q688 653 695 656" stroke="#b64646" stroke-width="8.5" stroke-linecap="round" fill="none"/><path d="M684 665 Q691 665 693 661" stroke="#b64646" stroke-width="8.5" stroke-linecap="round" fill="none"/><path d="M682 668 Q678 673 670 670" stroke="#b64646" stroke-width="8.5" stroke-linecap="round" fill="none"/><path d="M683 682 Q678 683 668 682" stroke="#b64646" stroke-width="8.5" stroke-linecap="round" fill="none"/><path d="M682 694 Q681 688 690 683" stroke="#b64646" stroke-width="8.5" stroke-linecap="round" fill="none"/><path d="M681 710 Q682 712 692 715" stroke="#b64646" stroke-width="8.5" stroke-linecap="round" fill="none"/><path d="M689 720 Q678 725 676 732" stroke="#b64646" stroke-width="8.5" stroke-linecap="round" fill="none"/><path d="M699 487 Q695 478 700 475" stroke="#b64646" stroke-width="8.5" stroke-linecap="round" fill="none"/><path d="M696 503 Q688 507 686 502" stroke="#b64646" stroke-width="8.5" stroke-linecap="round" fill="none"/><path d="M695 516 Q705 521 705 522" stroke="#b64646" stroke-width="8.5" stroke-linecap="round" fill="none"/><path d="M696 524 Q689 529 684 534" stroke="#b64646" stroke-width="8.5" stroke-linecap="round" fill="none"/><path d="M700 541 Q692 541 694 534" stroke="#b64646" stroke-width="8.5" stroke-linecap="round" fill="none"/><path d="M695 556 Q698 553 703 540" stroke="#b64646" stroke-width="8.5" stroke-linecap="round" fill="none"/><path d="M699 568 Q703 579 708 581" stroke="#b64646" stroke-width="8.5" stroke-linecap="round" fill="none"/><path d="M701 573 Q696 574 691 579" stroke="#b64646" stroke-width="8.5" stroke-linecap="round" fill="none"/><path d="M698 584 Q697 589 704 596" stroke="#b64646" stroke-width="8.5" stroke-linecap="round" fill="none"/><path d="M700 604 Q705 613 703 613" stroke="#b64646" stroke-width="8.5" stroke-linecap="round" fill="none"/><path d="M697 608 Q702 612 698 626" stroke="#b64646" stroke-width="8.5" stroke-linecap="round" fill="none"/><path d="M693 623 Q691 634 691 639" stroke="#b64646" stroke-width="8.5" stroke-linecap="round" fill="none"/><path d="M693 636 Q696 631 708 634" stroke="#b64646" stroke-width="8.5" stroke-linecap="round" fill="none"/><path d="M697 647 Q694 656 688 657" stroke="#b64646" stroke-width="8.5" stroke-linecap="round" fill="none"/><path d="M693 661 Q695 664 692 675" stroke="#b64646" stroke-width="8.5" stroke-linecap="round" fill="none"/><path d="M696 674 Q703 675 712 675" stroke="#b64646" stroke-width="8.5" stroke-linecap="round" fill="none"/><path d="M697 687 Q699 688 710 692" stroke="#b64646" stroke-width="8.5" stroke-linecap="round" fill="none"/><path d="M694 691 Q694 702 691 704" stroke="#b64646" stroke-width="8.5" stroke-linecap="round" fill="none"/><path d="M695 708 Q697 705 691 691" stroke="#b64646" stroke-width="8.5" stroke-linecap="round" fill="none"/><path d="M694 717 Q698 717 703 713" stroke="#b64646" stroke-width="8.5" stroke-linecap="round" fill="none"/><path d="M708 491 Q714 492 719 486" stroke="#b64646" stroke-width="8.5" stroke-linecap="round" fill="none"/><path d="M704 503 Q694 502 690 503" stroke="#b64646" stroke-width="8.5" stroke-linecap="round" fill="none"/><path d="M704 512 Q705 514 698 520" stroke="#b64646" stroke-width="8.5" stroke-linecap="round" fill="none"/><path d="M706 531 Q709 526 705 519" stroke="#b64646" stroke-width="8.5" stroke-linecap="round" fill="none"/><path d="M707 541 Q711 546 707 553" stroke="#b64646" stroke-width="8.5" stroke-linecap="round" fill="none"/><path d="M712 549 Q717 553 718 556" stroke="#b64646" stroke-width="8.5" stroke-linecap="round" fill="none"/><path d="M703 559 Q710 549 709 547" stroke="#b64646" stroke-width="8.5" stroke-linecap="round" fill="none"/><path d="M709 572 Q709 562 706 558" stroke="#b64646" stroke-width="8.5" stroke-linecap="round" fill="none"/><path d="M712 584 Q715 583 726 590" stroke="#b64646" stroke-width="8.5" stroke-linecap="round" fill="none"/><path d="M708 601 Q709 598 720 592" stroke="#b64646" stroke-width="8.5" stroke-linecap="round" fill="none"/><path d="M711 608 Q710 598 712 597" stroke="#b64646" stroke-width="8.5" stroke-linecap="round" fill="none"/><path d="M711 624 Q713 618 721 617" stroke="#b64646" stroke-width="8.5" stroke-linecap="round" fill="none"/><path d="M706 640 Q706 641 708 650" stroke="#b64646" stroke-width="8.5" stroke-linecap="round" fill="none"/><path d="M707 649 Q701 645 701 641" stroke="#b64646" stroke-width="8.5" stroke-linecap="round" fill="none"/><path d="M710 659 Q699 653 694 652" stroke="#b64646" stroke-width="8.5" stroke-linecap="round" fill="none"/><path d="M708 672 Q715 667 719 664" stroke="#b64646" stroke-width="8.5" stroke-linecap="round" fill="none"/><path d="M711 687 Q707 691 708 697" stroke="#b64646" stroke-width="8.5" stroke-linecap="round" fill="none"/><path d="M712 694 Q711 684 702 683" stroke="#b64646" stroke-width="8.5" stroke-linecap="round" fill="none"/><path d="M711 706 Q720 712 722 715" stroke="#b64646" stroke-width="8.5" stroke-linecap="round" fill="none"/><path d="M703 725 Q700 727 693 735" stroke="#b64646" stroke-width="8.5" stroke-linecap="round" fill="none"/><path d="M719 490 Q725 492 727 496" stroke="#b64646" stroke-width="8.5" stroke-linecap="round" fill="none"/><path d="M724 500 Q726 508 720 510" stroke="#b64646" stroke-width="8.5" stroke-linecap="round" fill="none"/><path d="M724 516 Q726 515 734 524" stroke="#b64646" stroke-width="8.5" stroke-linecap="round" fill="none"/><path d="M721 526 Q730 535 731 534" stroke="#b64646" stroke-width="8.5" stroke-linecap="round" fill="none"/><path d="M720 536 Q721 527 721 526" stroke="#b64646" stroke-width="8.5" stroke-linecap="round" fill="none"/><path d="M725 552 Q720 559 714 557" stroke="#b64646" stroke-width="8.5" stroke-linecap="round" fill="none"/><path d="M719 561 Q710 562 702 560" stroke="#b64646" stroke-width="8.5" stroke-linecap="round" fill="none"/><path d="M724 574 Q723 563 729 561" stroke="#b64646" stroke-width="8.5" stroke-linecap="round" fill="none"/><path d="M724 588 Q717 591 708 594" stroke="#b64646" stroke-width="8.5" stroke-linecap="round" fill="none"/><path d="M718 602 Q720 610 717 616" stroke="#b64646" stroke-width="8.5" stroke-linecap="round" fill="none"/><path d="M716 609 Q710 607 711 594" stroke="#b64646" stroke-width="8.5" stroke-linecap="round" fill="none"/><path d="M716 621 Q723 628 727 628" stroke="#b64646" stroke-width="8.5" stroke-linecap="round" fill="none"/><path d="M717 638 Q720 641 728 647" stroke="#b64646" stroke-width="8.5" stroke-linecap="round" fill="none"/><path d="M716 650 Q720 657 727 661" stroke="#b64646" stroke-width="8.5" stroke-linecap="round" fill="none"/><path d="M721 660 Q725 652 734 648" stroke="#b64646" stroke-width="8.5" stroke-linecap="round" fill="none"/><path d="M724 668 Q723 668 713 674" stroke="#b64646" stroke-width="8.5" stroke-linecap="round" fill="none"/><path d="M722 687 Q725 680 720 678" stroke="#b64646" stroke-width="8.5" stroke-linecap="round" fill="none"/><path d="M724 698 Q718 700 709 706" stroke="#b64646" stroke-width="8.5" stroke-linecap="round" fill="none"/><path d="M722 708 Q724 698 719 694" stroke="#b64646" stroke-width="8.5" stroke-linecap="round" fill="none"/><path d="M720 715 Q725 703 724 700" stroke="#b64646" stroke-width="8.5" stroke-linecap="round" fill="none"/><path d="M732 492 Q741 499 740 499" stroke="#b64646" stroke-width="8.5" stroke-linecap="round" fill="none"/><path d="M729 507 Q727 500 722 497" stroke="#b64646" stroke-width="8.5" stroke-linecap="round" fill="none"/><path d="M730 511 Q728 505 722 499" stroke="#b64646" stroke-width="8.5" stroke-linecap="round" fill="none"/><path d="M731 526 Q732 522 730 514" stroke="#b64646" stroke-width="8.5" stroke-linecap="round" fill="none"/><path d="M731 542 Q740 540 742 546" stroke="#b64646" stroke-width="8.5" stroke-linecap="round" fill="none"/><path d="M728 547 Q728 542 729 537" stroke="#b64646" stroke-width="8.5" stroke-linecap="round" fill="none"/><path d="M735 564 Q733 566 726 563" stroke="#b64646" stroke-width="8.5" stroke-linecap="round" fill="none"/><path d="M733 579 Q731 575 722 569" stroke="#b64646" stroke-width="8.5" stroke-linecap="round" fill="none"/><path d="M727 592 Q728 590 738 591" stroke="#b64646" stroke-width="8.5" stroke-linecap="round" fill="none"/><path d="M728 599 Q728 601 737 605" stroke="#b64646" stroke-width="8.5" stroke-linecap="round" fill="none"/><path d="M730 614 Q731 622 722 621" stroke="#b64646" stroke-width="8.5" stroke-linecap="round" fill="none"/><path d="M734 621 Q728 620 723 629" stroke="#b64646" stroke-width="8.5" stroke-linecap="round" fill="none"/><path d="M732 639 Q730 633 726 623" stroke="#b64646" stroke-width="8.5" stroke-linecap="round" fill="none"/><path d="M736 652 Q739 648 739 640" stroke="#b64646" stroke-width="8.5" stroke-linecap="round" fill="none"/><path d="M736 662 Q729 662 726 666" stroke="#b64646" stroke-width="8.5" stroke-linecap="round" fill="none"/><path d="M734 675 Q740 680 739 688" stroke="#b64646" stroke-width="8.5" stroke-linecap="round" fill="none"/><path d="M728 685 Q722 684 721 693" stroke="#b64646" stroke-width="8.5" stroke-linecap="round" fill="none"/><path d="M728 695 Q733 703 736 701" stroke="#b64646" stroke-width="8.5" stroke-linecap="round" fill="none"/><path d="M735 706 Q736 699 744 702" stroke="#b64646" stroke-width="8.5" stroke-linecap="round" fill="none"/><path d="M728 721 Q731 714 728 708" stroke="#b64646" stroke-width="8.5" stroke-linecap="round" fill="none"/><path d="M748 493 Q742 491 738 491" stroke="#b64646" stroke-width="8.5" stroke-linecap="round" fill="none"/><path d="M747 501 Q741 510 743 517" stroke="#b64646" stroke-width="8.5" stroke-linecap="round" fill="none"/><path d="M741 518 Q739 514 733 512" stroke="#b64646" stroke-width="8.5" stroke-linecap="round" fill="none"/><path d="M742 532 Q745 522 744 520" stroke="#b64646" stroke-width="8.5" stroke-linecap="round" fill="none"/><path d="M744 536 Q740 525 733 522" stroke="#b64646" stroke-width="8.5" stroke-linecap="round" fill="none"/><path d="M744 552 Q737 553 734 555" stroke="#b64646" stroke-width="8.5" stroke-linecap="round" fill="none"/><path d="M740 566 Q736 570 740 577" stroke="#b64646" stroke-width="8.5" stroke-linecap="round" fill="none"/><path d="M748 574 Q758 573 758 581" stroke="#b64646" stroke-width="8.5" stroke-linecap="round" fill="none"/><path d="M742 585 Q736 583 737 573" stroke="#b64646" stroke-width="8.5" stroke-linecap="round" fill="none"/><path d="M742 602 Q730 602 726 607" stroke="#b64646" stroke-width="8.5" stroke-linecap="round" fill="none"/><path d="M742 610 Q743 604 748 597" stroke="#b64646" stroke-width="8.5" stroke-linecap="round" fill="none"/><path d="M747 625 Q741 626 733 629" stroke="#b64646" stroke-width="8.5" stroke-linecap="round" fill="none"/><path d="M743 632 Q733 634 728 639" stroke="#b64646" stroke-width="8.5" stroke-linecap="round" fill="none"/><path d="M745 649 Q750 650 751 661" stroke="#b64646" stroke-width="8.5" stroke-linecap="round" fill="none"/><path d="M740 663 Q740 661 748 657" stroke="#b64646" stroke-width="8.5" stroke-linecap="round" fill="none"/><path d="M742 674 Q745 673 755 676" stroke="#b64646" stroke-width="8.5" stroke-linecap="round" fill="none"/><path d="M746 684 Q752 681 756 671" stroke="#b64646" stroke-width="8.5" stroke-linecap="round" fill="none"/><path d="M741 696 Q734 706 735 709" stroke="#b64646" stroke-width="8.5" stroke-linecap="round" fill="none"/><path d="M743 711 Q750 711 759 705" stroke="#b64646" stroke-width="8.5" stroke-linecap="round" fill="none"/><path d="M749 716 Q748 706 749 701" stroke="#b64646" stroke-width="8.5" stroke-linecap="round" fill="none"/><path d="M753 491 Q756 490 764 486" stroke="#b64646" stroke-width="8.5" stroke-linecap="round" fill="none"/><path d="M755 505 Q745 510 744 508" stroke="#b64646" stroke-width="8.5" stroke-linecap="round" fill="none"/><path d="M758 513 Q751 517 743 513" stroke="#b64646" stroke-width="8.5" stroke-linecap="round" fill="none"/><path d="M759 526 Q752 537 751 538" stroke="#b64646" stroke-width="8.5" stroke-linecap="round" fill="none"/><path d="M751 540 Q746 544 749 554" stroke="#b64646" stroke-width="8.5" stroke-linecap="round" fill="none"/><path d="M761 555 Q757 558 763 568" stroke="#b64646" stroke-width="8.5" stroke-linecap="round" fill="none"/><path d="M753 569 Q746 570 749 579" stroke="#b64646" stroke-width="8.5" stroke-linecap="round" fill="none"/><path d="M761 578 Q771 572 775 570" stroke="#b64646" stroke-width="8.5" stroke-linecap="round" fill="none"/><path d="M753 586 Q760 588 762 590" stroke="#b64646" stroke-width="8.5" stroke-linecap="round" fill="none"/><path d="M751 598 Q758 594 761 585" stroke="#b64646" stroke-width="8.5" stroke-linecap="round" fill="none"/><path d="M760 613 Q753 613 750 622" stroke="#b64646" stroke-width="8.5" stroke-linecap="round" fill="none"/><path d="M754 624 Q755 626 761 630" stroke="#b64646" stroke-width="8.5" stroke-linecap="round" fill="none"/><path d="M761 636 Q766 627 769 622" stroke="#b64646" stroke-width="8.5" stroke-linecap="round" fill="none"/><path d="M755 646 Q752 638 744 634" stroke="#b64646" stroke-width="8.5" stroke-linecap="round" fill="none"/><path d="M752 655 Q743 650 743 649" stroke="#b64646" stroke-width="8.5" stroke-linecap="round" fill="none"/><path d="M753 669 Q747 665 746 657" stroke="#b64646" stroke-width="8.5" stroke-linecap="round" fill="none"/><path d="M753 688 Q760 695 764 698" stroke="#b64646" stroke-width="8.5" stroke-linecap="round" fill="none"/><path d="M756 700 Q746 691 745 689" stroke="#b64646" stroke-width="8.5" stroke-linecap="round" fill="none"/><path d="M756 708 Q761 713 769 717" stroke="#b64646" stroke-width="8.5" stroke-linecap="round" fill="none"/><path d="M756 723 Q755 732 752 737" stroke="#b64646" stroke-width="8.5" stroke-linecap="round" fill="none"/><path d="M766 490 Q760 487 752 492" stroke="#b64646" stroke-width="8.5" stroke-linecap="round" fill="none"/><path d="M767 505 Q773 504 771 514" stroke="#b64646" stroke-width="8.5" stroke-linecap="round" fill="none"/><path d="M768 514 Q770 514 779 516" stroke="#b64646" stroke-width="8.5" stroke-linecap="round" fill="none"/><path d="M772 524 Q769 525 763 536" stroke="#b64646" stroke-width="8.5" stroke-linecap="round" fill="none"/><path d="M765 538 Q768 534 776 530" stroke="#b64646" stroke-width="8.5" stroke-linecap="round" fill="none"/><path d="M768 548 Q764 542 760 535" stroke="#b64646" stroke-width="8.5" stroke-linecap="round" fill="none"/><path d="M771 569 Q767 567 764 562" stroke="#b64646" stroke-width="8.5" stroke-linecap="round" fill="none"/><path d="M766 578 Q763 585 756 589" stroke="#b64646" stroke-width="8.5" stroke-linecap="round" fill="none"/><path d="M772 590 Q768 584 768 575" stroke="#b64646" stroke-width="8.5" stroke-linecap="round" fill="none"/><path d="M769 596 Q769 590 770 585" stroke="#b64646" stroke-width="8.5" stroke-linecap="round" fill="none"/><path d="M770 615 Q761 617 753 618" stroke="#b64646" stroke-width="8.5" stroke-linecap="round" fill="none"/><path d="M773 622 Q767 616 769 605" stroke="#b64646" stroke-width="8.5" stroke-linecap="round" fill="none"/><path d="M770 636 Q768 628 774 620" stroke="#b64646" stroke-width="8.5" stroke-linecap="round" fill="none"/><path d="M769 650 Q780 644 785 646" stroke="#b64646" stroke-width="8.5" stroke-linecap="round" fill="none"/><path d="M767 664 Q773 664 782 659" stroke="#b64646" stroke-width="8.5" stroke-linecap="round" fill="none"/><path d="M768 674 Q765 672 757 661" stroke="#b64646" stroke-width="8.5" stroke-linecap="round" fill="none"/><path d="M768 684 Q760 683 760 672" stroke="#b64646" stroke-width="8.5" stroke-linecap="round" fill="none"/><path d="M766 696 Q776 695 777 699" stroke="#b64646" stroke-width="8.5" stroke-linecap="round" fill="none"/><path d="M766 711 Q767 723 767 726" stroke="#b64646" stroke-width="8.5" stroke-linecap="round" fill="none"/><path d="M768 718 Q762 721 767 731" stroke="#b64646" stroke-width="8.5" stroke-linecap="round" fill="none"/><path d="M776 490 Q776 479 779 473" stroke="#b64646" stroke-width="8.5" stroke-linecap="round" fill="none"/><path d="M778 505 Q773 504 768 507" stroke="#b64646" stroke-width="8.5" stroke-linecap="round" fill="none"/><path d="M776 519 Q784 523 787 527" stroke="#b64646" stroke-width="8.5" stroke-linecap="round" fill="none"/><path d="M784 526 Q792 524 793 523" stroke="#b64646" stroke-width="8.5" stroke-linecap="round" fill="none"/><path d="M775 538 Q785 540 790 537" stroke="#b64646" stroke-width="8.5" stroke-linecap="round" fill="none"/><path d="M775 550 Q771 548 758 554" stroke="#b64646" stroke-width="8.5" stroke-linecap="round" fill="none"/><path d="M785 565 Q783 569 782 574" stroke="#b64646" stroke-width="8.5" stroke-linecap="round" fill="none"/><path d="M780 574 Q784 575 792 570" stroke="#b64646" stroke-width="8.5" stroke-linecap="round" fill="none"/><path d="M777 587 Q787 592 786 594" stroke="#b64646" stroke-width="8.5" stroke-linecap="round" fill="none"/><path d="M780 602 Q776 592 774 590" stroke="#b64646" stroke-width="8.5" stroke-linecap="round" fill="none"/><path d="M775 608 Q773 609 768 613" stroke="#b64646" stroke-width="8.5" stroke-linecap="round" fill="none"/><path d="M777 622 Q775 622 766 623" stroke="#b64646" stroke-width="8.5" stroke-linecap="round" fill="none"/><path d="M776 632 Q779 629 787 623" stroke="#b64646" stroke-width="8.5" stroke-linecap="round" fill="none"/><path d="M775 652 Q778 648 789 646" stroke="#b64646" stroke-width="8.5" stroke-linecap="round" fill="none"/><path d="M783 661 Q780 667 786 672" stroke="#b64646" stroke-width="8.5" stroke-linecap="round" fill="none"/><path d="M777 671 Q784 669 790 661" stroke="#b64646" stroke-width="8.5" stroke-linecap="round" fill="none"/><path d="M776 688 Q785 681 785 678" stroke="#b64646" stroke-width="8.5" stroke-linecap="round" fill="none"/><path d="M785 694 Q797 693 800 687" stroke="#b64646" stroke-width="8.5" stroke-linecap="round" fill="none"/><path d="M776 706 Q773 694 766 692" stroke="#b64646" stroke-width="8.5" stroke-linecap="round" fill="none"/><path d="M778 718 Q781 722 784 728" stroke="#b64646" stroke-width="8.5" stroke-linecap="round" fill="none"/><path d="M790 491 Q799 493 803 486" stroke="#b64646" stroke-width="8.5" stroke-linecap="round" fill="none"/><path d="M787 508 Q794 513 796 514" stroke="#b64646" stroke-width="8.5" stroke-linecap="round" fill="none"/><path d="M793 516 Q789 507 791 503" stroke="#b64646" stroke-width="8.5" stroke-linecap="round" fill="none"/><path d="M788 523 Q795 520 805 518" stroke="#b64646" stroke-width="8.5" stroke-linecap="round" fill="none"/><path d="M790 543 Q788 547 779 543" stroke="#b64646" stroke-width="8.5" stroke-linecap="round" fill="none"/><path d="M787 552 Q787 557 790 566" stroke="#b64646" stroke-width="8.5" stroke-linecap="round" fill="none"/><path d="M790 565 Q785 565 777 565" stroke="#b64646" stroke-width="8.5" stroke-linecap="round" fill="none"/><path d="M796 575 Q800 568 801 559" stroke="#b64646" stroke-width="8.5" stroke-linecap="round" fill="none"/><path d="M795 590 Q794 591 799 602" stroke="#b64646" stroke-width="8.5" stroke-linecap="round" fill="none"/><path d="M794 598 Q789 605 794 608" stroke="#b64646" stroke-width="8.5" stroke-linecap="round" fill="none"/><path d="M791 611 Q789 601 783 596" stroke="#b64646" stroke-width="8.5" stroke-linecap="round" fill="none"/><path d="M797 621 Q788 621 784 614" stroke="#b64646" stroke-width="8.5" stroke-linecap="round" fill="none"/><path d="M793 638 Q796 646 804 651" stroke="#b64646" stroke-width="8.5" stroke-linecap="round" fill="none"/><path d="M794 646 Q799 654 793 658" stroke="#b64646" stroke-width="8.5" stroke-linecap="round" fill="none"/><path d="M792 661 Q784 652 785 651" stroke="#b64646" stroke-width="8.5" stroke-linecap="round" fill="none"/><path d="M793 673 Q804 677 807 671" stroke="#b64646" stroke-width="8.5" stroke-linecap="round" fill="none"/><path d="M792 683 Q788 685 780 685" stroke="#b64646" stroke-width="8.5" stroke-linecap="round" fill="none"/><path d="M788 701 Q781 700 773 698" stroke="#b64646" stroke-width="8.5" stroke-linecap="round" fill="none"/><path d="M793 704 Q797 706 803 716" stroke="#b64646" stroke-width="8.5" stroke-linecap="round" fill="none"/><path d="M795 722 Q792 719 796 710" stroke="#b64646" stroke-width="8.5" stroke-linecap="round" fill="none"/><path d="M801 494 Q794 489 797 483" stroke="#b64646" stroke-width="8.5" stroke-linecap="round" fill="none"/><path d="M807 505 Q815 504 818 504" stroke="#b64646" stroke-width="8.5" stroke-linecap="round" fill="none"/><path d="M805 514 Q807 525 807 528" stroke="#b64646" stroke-width="8.5" stroke-linecap="round" fill="none"/><path d="M805 528 Q800 520 796 516" stroke="#b64646" stroke-width="8.5" stroke-linecap="round" fill="none"/><path d="M806 539 Q810 542 816 541" stroke="#b64646" stroke-width="8.5" stroke-linecap="round" fill="none"/><path d="M806 552 Q806 549 810 541" stroke="#b64646" stroke-width="8.5" stroke-linecap="round" fill="none"/><path d="M806 563 Q810 564 813 557" stroke="#b64646" stroke-width="8.5" stroke-linecap="round" fill="none"/><path d="M808 573 Q815 565 813 560" stroke="#b64646" stroke-width="8.5" stroke-linecap="round" fill="none"/><path d="M806 589 Q811 585 818 589" stroke="#b64646" stroke-width="8.5" stroke-linecap="round" fill="none"/><path d="M806 596 Q806 596 812 587" stroke="#b64646" stroke-width="8.5" stroke-linecap="round" fill="none"/><path d="M804 615 Q800 624 798 624" stroke="#b64646" stroke-width="8.5" stroke-linecap="round" fill="none"/><path d="M801 628 Q804 625 812 618" stroke="#b64646" stroke-width="8.5" stroke-linecap="round" fill="none"/><path d="M808 637 Q814 645 811 651" stroke="#b64646" stroke-width="8.5" stroke-linecap="round" fill="none"/><path d="M800 645 Q792 640 794 638" stroke="#b64646" stroke-width="8.5" stroke-linecap="round" fill="none"/><path d="M802 660 Q810 661 814 666" stroke="#b64646" stroke-width="8.5" stroke-linecap="round" fill="none"/><path d="M805 672 Q808 666 808 659" stroke="#b64646" stroke-width="8.5" stroke-linecap="round" fill="none"/><path d="M807 680 Q817 681 820 691" stroke="#b64646" stroke-width="8.5" stroke-linecap="round" fill="none"/><path d="M808 697 Q811 687 817 685" stroke="#b64646" stroke-width="8.5" stroke-linecap="round" fill="none"/><path d="M807 710 Q800 716 795 712" stroke="#b64646" stroke-width="8.5" stroke-linecap="round" fill="none"/><path d="M804 717 Q809 713 821 716" stroke="#b64646" stroke-width="8.5" stroke-linecap="round" fill="none"/><path d="M818 491 Q809 493 803 493" stroke="#b64646" stroke-width="8.5" stroke-linecap="round" fill="none"/><path d="M813 501 Q811 496 801 498" stroke="#b64646" stroke-width="8.5" stroke-linecap="round" fill="none"/><path d="M820 514 Q816 523 815 522" stroke="#b64646" stroke-width="8.5" stroke-linecap="round" fill="none"/><path d="M815 531 Q819 530 830 529" stroke="#b64646" stroke-width="8.5" stroke-linecap="round" fill="none"/><path d="M813 537 Q812 542 807 547" stroke="#b64646" stroke-width="8.5" stroke-linecap="round" fill="none"/><path d="M814 550 Q816 549 820 557" stroke="#b64646" stroke-width="8.5" stroke-linecap="round" fill="none"/><path d="M816 562 Q821 560 818 550" stroke="#b64646" stroke-width="8.5" stroke-linecap="round" fill="none"/><path d="M820 573 Q830 570 832 568" stroke="#b64646" stroke-width="8.5" stroke-linecap="round" fill="none"/><path d="M816 586 Q821 582 817 573" stroke="#b64646" stroke-width="8.5" stroke-linecap="round" fill="none"/><path d="M815 595 Q813 602 814 608" stroke="#b64646" stroke-width="8.5" stroke-linecap="round" fill="none"/><path d="M811 612 Q820 608 825 601" stroke="#b64646" stroke-width="8.5" stroke-linecap="round" fill="none"/><path d="M817 629 Q819 627 820 616" stroke="#b64646" stroke-width="8.5" stroke-linecap="round" fill="none"/><path d="M817 637 Q814 648 811 651" stroke="#b64646" stroke-width="8.5" stroke-linecap="round" fill="none"/><path d="M821 653 Q821 650 830 650" stroke="#b64646" stroke-width="8.5" stroke-linecap="round" fill="none"/><path d="M819 661 Q817 662 819 670" stroke="#b64646" stroke-width="8.5" stroke-linecap="round" fill="none"/><path d="M812 674 Q815 676 816 684" stroke="#b64646" stroke-width="8.5" stroke-linecap="round" fill="none"/><path d="M819 686 Q827 678 831 675" stroke="#b64646" stroke-width="8.5" stroke-linecap="round" fill="none"/><path d="M815 695 Q808 703 802 706" stroke="#b64646" stroke-width="8.5" stroke-linecap="round" fill="none"/><path d="M817 704 Q822 708 821 718" stroke="#b64646" stroke-width="8.5" stroke-linecap="round" fill="none"/><path d="M813 719 Q812 721 801 722" stroke="#b64646" stroke-width="8.5" stroke-linecap="round" fill="none"/><path d="M826 490 Q819 486 815 490" stroke="#b64646" stroke-width="8.5" stroke-linecap="round" fill="none"/><path d="M830 508 Q834 504 841 499" stroke="#b64646" stroke-width="8.5" stroke-linecap="round" fill="none"/><path d="M829 513 Q819 511 816 509" stroke="#b64646" stroke-width="8.5" stroke-linecap="round" fill="none"/><path d="M831 529 Q830 535 826 539" stroke="#b64646" stroke-width="8.5" stroke-linecap="round" fill="none"/><path d="M826 540 Q824 542 814 548" stroke="#b64646" stroke-width="8.5" stroke-linecap="round" fill="none"/><path d="M828 553 Q823 552 823 543" stroke="#b64646" stroke-width="8.5" stroke-linecap="round" fill="none"/><path d="M824 566 Q824 570 824 579" stroke="#b64646" stroke-width="8.5" stroke-linecap="round" fill="none"/><path d="M825 581 Q832 581 835 583" stroke="#b64646" stroke-width="8.5" stroke-linecap="round" fill="none"/><path d="M825 591 Q832 589 836 590" stroke="#b64646" stroke-width="8.5" stroke-linecap="round" fill="none"/><path d="M833 601 Q835 596 845 592" stroke="#b64646" stroke-width="8.5" stroke-linecap="round" fill="none"/><path d="M830 609 Q842 615 845 618" stroke="#b64646" stroke-width="8.5" stroke-linecap="round" fill="none"/><path d="M824 626 Q834 625 840 625" stroke="#b64646" stroke-width="8.5" stroke-linecap="round" fill="none"/><path d="M829 640 Q821 645 820 640" stroke="#b64646" stroke-width="8.5" stroke-linecap="round" fill="none"/><path d="M830 652 Q835 656 836 660" stroke="#b64646" stroke-width="8.5" stroke-linecap="round" fill="none"/><path d="M828 657 Q831 649 829 641" stroke="#b64646" stroke-width="8.5" stroke-linecap="round" fill="none"/><path d="M828 671 Q822 677 816 674" stroke="#b64646" stroke-width="8.5" stroke-linecap="round" fill="none"/><path d="M831 680 Q826 677 823 666" stroke="#b64646" stroke-width="8.5" stroke-linecap="round" fill="none"/><path d="M832 692 Q828 688 824 683" stroke="#b64646" stroke-width="8.5" stroke-linecap="round" fill="none"/><path d="M832 709 Q839 705 840 702" stroke="#b64646" stroke-width="8.5" stroke-linecap="round" fill="none"/><path d="M825 723 Q824 720 815 718" stroke="#b64646" stroke-width="8.5" stroke-linecap="round" fill="none"/><path d="M842 497 Q839 501 835 509" stroke="#b64646" stroke-width="8.5" stroke-linecap="round" fill="none"/><path d="M840 509 Q840 504 837 498" stroke="#b64646" stroke-width="8.5" stroke-linecap="round" fill="none"/><path d="M839 518 Q832 527 827 529" stroke="#b64646" stroke-width="8.5" stroke-linecap="round" fill="none"/><path d="M838 525 Q839 534 833 534" stroke="#b64646" stroke-width="8.5" stroke-linecap="round" fill="none"/><path d="M839 537 Q843 530 851 526" stroke="#b64646" stroke-width="8.5" stroke-linecap="round" fill="none"/><path d="M840 548 Q838 551 843 561" stroke="#b64646" stroke-width="8.5" stroke-linecap="round" fill="none"/><path d="M841 562 Q850 555 856 553" stroke="#b64646" stroke-width="8.5" stroke-linecap="round" fill="none"/><path d="M843 574 Q849 572 851 565" stroke="#b64646" stroke-width="8.5" stroke-linecap="round" fill="none"/><path d="M842 591 Q838 599 836 599" stroke="#b64646" stroke-width="8.5" stroke-linecap="round" fill="none"/><path d="M835 598 Q837 601 831 610" stroke="#b64646" stroke-width="8.5" stroke-linecap="round" fill="none"/><path d="M836 607 Q831 615 828 620" stroke="#b64646" stroke-width="8.5" stroke-linecap="round" fill="none"/><path d="M840 623 Q841 628 832 628" stroke="#b64646" stroke-width="8.5" stroke-linecap="round" fill="none"/><path d="M836 633 Q840 629 839 620" stroke="#b64646" stroke-width="8.5" stroke-linecap="round" fill="none"/><path d="M836 651 Q840 659 840 661" stroke="#b64646" stroke-width="8.5" stroke-linecap="round" fill="none"/><path d="M838 659 Q837 658 837 647" stroke="#b64646" stroke-width="8.5" stroke-linecap="round" fill="none"/><path d="M836 676 Q841 668 850 665" stroke="#b64646" stroke-width="8.5" stroke-linecap="round" fill="none"/><path d="M839 681 Q849 677 852 674" stroke="#b64646" stroke-width="8.5" stroke-linecap="round" fill="none"/><path d="M840 701 Q847 705 848 708" stroke="#b64646" stroke-width="8.5" stroke-linecap="round" fill="none"/><path d="M843 713 Q846 706 845 699" stroke="#b64646" stroke-width="8.5" stroke-linecap="round" fill="none"/><path d="M837 718 Q839 717 849 712" stroke="#b64646" stroke-width="8.5" stroke-linecap="round" fill="none"/><path d="M857 493 Q852 495 844 494" stroke="#b64646" stroke-width="8.5" stroke-linecap="round" fill="none"/><path d="M852 508 Q860 505 864 498" stroke="#b64646" stroke-width="8.5" stroke-linecap="round" fill="none"/><path d="M849 516 Q853 519 848 527" stroke="#b64646" stroke-width="8.5" stroke-linecap="round" fill="none"/><path d="M855 531 Q848 535 848 537" stroke="#b64646" stroke-width="8.5" stroke-linecap="round" fill="none"/><path d="M854 539 Q851 538 846 532" stroke="#b64646" stroke-width="8.5" stroke-linecap="round" fill="none"/><path d="M855 553 Q848 550 847 549" stroke="#b64646" stroke-width="8.5" stroke-linecap="round" fill="none"/><path d="M848 560 Q856 560 862 556" stroke="#b64646" stroke-width="8.5" stroke-linecap="round" fill="none"/><path d="M856 577 Q855 585 844 583" stroke="#b64646" stroke-width="8.5" stroke-linecap="round" fill="none"/><path d="M849 591 Q847 584 841 582" stroke="#b64646" stroke-width="8.5" stroke-linecap="round" fill="none"/><path d="M854 601 Q854 603 846 596" stroke="#b64646" stroke-width="8.5" stroke-linecap="round" fill="none"/><path d="M855 610 Q854 603 853 600" stroke="#b64646" stroke-width="8.5" stroke-linecap="round" fill="none"/><path d="M852 622 Q855 621 863 627" stroke="#b64646" stroke-width="8.5" stroke-linecap="round" fill="none"/><path d="M850 632 Q855 637 868 635" stroke="#b64646" stroke-width="8.5" stroke-linecap="round" fill="none"/><path d="M851 644 Q841 648 839 650" stroke="#b64646" stroke-width="8.5" stroke-linecap="round" fill="none"/><path d="M847 658 Q842 649 843 642" stroke="#b64646" stroke-width="8.5" stroke-linecap="round" fill="none"/><path d="M856 670 Q864 672 865 678" stroke="#b64646" stroke-width="8.5" stroke-linecap="round" fill="none"/><path d="M854 688 Q850 683 846 681" stroke="#b64646" stroke-width="8.5" stroke-linecap="round" fill="none"/><path d="M852 697 Q859 699 867 695" stroke="#b64646" stroke-width="8.5" stroke-linecap="round" fill="none"/><path d="M852 705 Q846 699 847 695" stroke="#b64646" stroke-width="8.5" stroke-linecap="round" fill="none"/><path d="M852 715 Q846 721 841 729" stroke="#b64646" stroke-width="8.5" stroke-linecap="round" fill="none"/><path d="M864 494 Q858 492 851 494" stroke="#b64646" stroke-width="8.5" stroke-linecap="round" fill="none"/><path d="M866 503 Q866 494 862 492" stroke="#b64646" stroke-width="8.5" stroke-linecap="round" fill="none"/><path d="M864 516 Q869 519 874 517" stroke="#b64646" stroke-width="8.5" stroke-linecap="round" fill="none"/><path d="M867 531 Q867 520 873 515" stroke="#b64646" stroke-width="8.5" stroke-linecap="round" fill="none"/><path d="M860 543 Q859 553 865 554" stroke="#b64646" stroke-width="8.5" stroke-linecap="round" fill="none"/><path d="M861 549 Q850 546 848 541" stroke="#b64646" stroke-width="8.5" stroke-linecap="round" fill="none"/><path d="M864 565 Q859 567 848 563" stroke="#b64646" stroke-width="8.5" stroke-linecap="round" fill="none"/><path d="M862 571 Q859 572 853 573" stroke="#b64646" stroke-width="8.5" stroke-linecap="round" fill="none"/><path d="M866 591 Q864 586 865 576" stroke="#b64646" stroke-width="8.5" stroke-linecap="round" fill="none"/><path d="M865 597 Q870 589 874 587" stroke="#b64646" stroke-width="8.5" stroke-linecap="round" fill="none"/><path d="M867 612 Q867 604 867 595" stroke="#b64646" stroke-width="8.5" stroke-linecap="round" fill="none"/><path d="M864 621 Q862 608 869 605" stroke="#b64646" stroke-width="8.5" stroke-linecap="round" fill="none"/><path d="M864 632 Q856 637 853 636" stroke="#b64646" stroke-width="8.5" stroke-linecap="round" fill="none"/><path d="M865 652 Q868 661 869 664" stroke="#b64646" stroke-width="8.5" stroke-linecap="round" fill="none"/><path d="M863 657 Q863 663 853 666" stroke="#b64646" stroke-width="8.5" stroke-linecap="round" fill="none"/><path d="M867 675 Q865 681 855 681" stroke="#b64646" stroke-width="8.5" stroke-linecap="round" fill="none"/><path d="M863 681 Q860 673 862 669" stroke="#b64646" stroke-width="8.5" stroke-linecap="round" fill="none"/><path d="M866 697 Q872 699 879 692" stroke="#b64646" stroke-width="8.5" stroke-linecap="round" fill="none"/><path d="M860 709 Q863 705 872 708" stroke="#b64646" stroke-width="8.5" stroke-linecap="round" fill="none"/><path d="M859 722 Q856 722 845 731" stroke="#b64646" stroke-width="8.5" stroke-linecap="round" fill="none"/><path d="M613 494 Q618 490 618 478" stroke="#de5f5f" stroke-width="6.5" stroke-linecap="round" fill="none"/><path d="M607 504 Q618 497 621 498" stroke="#de5f5f" stroke-width="6.5" stroke-linecap="round" fill="none"/><path d="M612 513 Q600 509 598 510" stroke="#de5f5f" stroke-width="6.5" stroke-linecap="round" fill="none"/><path d="M610 532 Q613 523 611 522" stroke="#de5f5f" stroke-width="6.5" stroke-linecap="round" fill="none"/><path d="M613 536 Q619 534 630 536" stroke="#de5f5f" stroke-width="6.5" stroke-linecap="round" fill="none"/><path d="M617 556 Q615 566 613 573" stroke="#de5f5f" stroke-width="6.5" stroke-linecap="round" fill="none"/><path d="M609 568 Q610 558 603 552" stroke="#de5f5f" stroke-width="6.5" stroke-linecap="round" fill="none"/><path d="M611 573 Q612 577 616 580" stroke="#de5f5f" stroke-width="6.5" stroke-linecap="round" fill="none"/><path d="M607 590 Q607 595 601 600" stroke="#de5f5f" stroke-width="6.5" stroke-linecap="round" fill="none"/><path d="M610 600 Q614 590 607 591" stroke="#de5f5f" stroke-width="6.5" stroke-linecap="round" fill="none"/><path d="M614 615 Q621 617 630 617" stroke="#de5f5f" stroke-width="6.5" stroke-linecap="round" fill="none"/><path d="M607 619 Q608 630 614 635" stroke="#de5f5f" stroke-width="6.5" stroke-linecap="round" fill="none"/><path d="M616 640 Q613 648 609 651" stroke="#de5f5f" stroke-width="6.5" stroke-linecap="round" fill="none"/><path d="M608 650 Q606 647 613 634" stroke="#de5f5f" stroke-width="6.5" stroke-linecap="round" fill="none"/><path d="M608 658 Q600 657 595 647" stroke="#de5f5f" stroke-width="6.5" stroke-linecap="round" fill="none"/><path d="M612 670 Q606 671 608 680" stroke="#de5f5f" stroke-width="6.5" stroke-linecap="round" fill="none"/><path d="M614 689 Q621 693 619 697" stroke="#de5f5f" stroke-width="6.5" stroke-linecap="round" fill="none"/><path d="M611 693 Q604 688 597 684" stroke="#de5f5f" stroke-width="6.5" stroke-linecap="round" fill="none"/><path d="M608 712 Q618 710 621 715" stroke="#de5f5f" stroke-width="6.5" stroke-linecap="round" fill="none"/><path d="M614 724 Q605 718 603 713" stroke="#de5f5f" stroke-width="6.5" stroke-linecap="round" fill="none"/><path d="M620 495 Q624 505 617 508" stroke="#de5f5f" stroke-width="6.5" stroke-linecap="round" fill="none"/><path d="M629 504 Q621 502 613 505" stroke="#de5f5f" stroke-width="6.5" stroke-linecap="round" fill="none"/><path d="M623 512 Q621 520 610 525" stroke="#de5f5f" stroke-width="6.5" stroke-linecap="round" fill="none"/><path d="M624 526 Q632 533 634 532" stroke="#de5f5f" stroke-width="6.5" stroke-linecap="round" fill="none"/><path d="M623 543 Q625 538 625 528" stroke="#de5f5f" stroke-width="6.5" stroke-linecap="round" fill="none"/><path d="M623 554 Q624 563 620 567" stroke="#de5f5f" stroke-width="6.5" stroke-linecap="round" fill="none"/><path d="M622 568 Q613 563 614 557" stroke="#de5f5f" stroke-width="6.5" stroke-linecap="round" fill="none"/><path d="M622 578 Q615 583 606 581" stroke="#de5f5f" stroke-width="6.5" stroke-linecap="round" fill="none"/><path d="M622 589 Q620 585 621 573" stroke="#de5f5f" stroke-width="6.5" stroke-linecap="round" fill="none"/><path d="M628 602 Q637 601 645 599" stroke="#de5f5f" stroke-width="6.5" stroke-linecap="round" fill="none"/><path d="M621 615 Q629 615 633 610" stroke="#de5f5f" stroke-width="6.5" stroke-linecap="round" fill="none"/><path d="M626 621 Q629 613 629 607" stroke="#de5f5f" stroke-width="6.5" stroke-linecap="round" fill="none"/><path d="M625 639 Q615 629 615 627" stroke="#de5f5f" stroke-width="6.5" stroke-linecap="round" fill="none"/><path d="M623 650 Q626 652 626 664" stroke="#de5f5f" stroke-width="6.5" stroke-linecap="round" fill="none"/><path d="M624 657 Q627 656 633 661" stroke="#de5f5f" stroke-width="6.5" stroke-linecap="round" fill="none"/><path d="M621 667 Q616 670 609 670" stroke="#de5f5f" stroke-width="6.5" stroke-linecap="round" fill="none"/><path d="M621 688 Q625 687 634 688" stroke="#de5f5f" stroke-width="6.5" stroke-linecap="round" fill="none"/><path d="M620 699 Q618 699 614 706" stroke="#de5f5f" stroke-width="6.5" stroke-linecap="round" fill="none"/><path d="M624 706 Q620 701 609 698" stroke="#de5f5f" stroke-width="6.5" stroke-linecap="round" fill="none"/><path d="M627 721 Q625 726 620 729" stroke="#de5f5f" stroke-width="6.5" stroke-linecap="round" fill="none"/><path d="M641 497 Q640 488 631 489" stroke="#de5f5f" stroke-width="6.5" stroke-linecap="round" fill="none"/><path d="M632 505 Q630 505 624 498" stroke="#de5f5f" stroke-width="6.5" stroke-linecap="round" fill="none"/><path d="M635 515 Q640 520 636 527" stroke="#de5f5f" stroke-width="6.5" stroke-linecap="round" fill="none"/><path d="M641 532 Q641 529 631 526" stroke="#de5f5f" stroke-width="6.5" stroke-linecap="round" fill="none"/><path d="M635 538 Q640 537 649 537" stroke="#de5f5f" stroke-width="6.5" stroke-linecap="round" fill="none"/><path d="M632 553 Q630 559 621 557" stroke="#de5f5f" stroke-width="6.5" stroke-linecap="round" fill="none"/><path d="M631 564 Q633 570 629 582" stroke="#de5f5f" stroke-width="6.5" stroke-linecap="round" fill="none"/><path d="M634 573 Q641 572 645 572" stroke="#de5f5f" stroke-width="6.5" stroke-linecap="round" fill="none"/><path d="M637 589 Q640 582 637 579" stroke="#de5f5f" stroke-width="6.5" stroke-linecap="round" fill="none"/><path d="M636 598 Q634 604 632 612" stroke="#de5f5f" stroke-width="6.5" stroke-linecap="round" fill="none"/><path d="M638 613 Q643 618 649 615" stroke="#de5f5f" stroke-width="6.5" stroke-linecap="round" fill="none"/><path d="M640 624 Q647 626 656 626" stroke="#de5f5f" stroke-width="6.5" stroke-linecap="round" fill="none"/><path d="M638 637 Q628 637 621 639" stroke="#de5f5f" stroke-width="6.5" stroke-linecap="round" fill="none"/><path d="M640 645 Q633 656 635 661" stroke="#de5f5f" stroke-width="6.5" stroke-linecap="round" fill="none"/><path d="M638 659 Q640 664 634 675" stroke="#de5f5f" stroke-width="6.5" stroke-linecap="round" fill="none"/><path d="M636 672 Q626 673 624 673" stroke="#de5f5f" stroke-width="6.5" stroke-linecap="round" fill="none"/><path d="M639 680 Q643 689 641 696" stroke="#de5f5f" stroke-width="6.5" stroke-linecap="round" fill="none"/><path d="M631 698 Q642 693 649 696" stroke="#de5f5f" stroke-width="6.5" stroke-linecap="round" fill="none"/><path d="M639 705 Q636 695 629 691" stroke="#de5f5f" stroke-width="6.5" stroke-linecap="round" fill="none"/><path d="M634 724 Q637 727 642 736" stroke="#de5f5f" stroke-width="6.5" stroke-linecap="round" fill="none"/><path d="M649 487 Q650 487 659 495" stroke="#de5f5f" stroke-width="6.5" stroke-linecap="round" fill="none"/><path d="M649 506 Q652 501 656 499" stroke="#de5f5f" stroke-width="6.5" stroke-linecap="round" fill="none"/><path d="M649 516 Q650 516 660 511" stroke="#de5f5f" stroke-width="6.5" stroke-linecap="round" fill="none"/><path d="M645 529 Q636 530 627 529" stroke="#de5f5f" stroke-width="6.5" stroke-linecap="round" fill="none"/><path d="M646 541 Q646 545 645 556" stroke="#de5f5f" stroke-width="6.5" stroke-linecap="round" fill="none"/><path d="M645 551 Q647 547 644 540" stroke="#de5f5f" stroke-width="6.5" stroke-linecap="round" fill="none"/><path d="M644 566 Q649 566 652 571" stroke="#de5f5f" stroke-width="6.5" stroke-linecap="round" fill="none"/><path d="M652 576 Q643 585 645 590" stroke="#de5f5f" stroke-width="6.5" stroke-linecap="round" fill="none"/><path d="M644 585 Q648 578 658 580" stroke="#de5f5f" stroke-width="6.5" stroke-linecap="round" fill="none"/><path d="M653 602 Q656 596 657 592" stroke="#de5f5f" stroke-width="6.5" stroke-linecap="round" fill="none"/><path d="M645 610 Q640 603 636 602" stroke="#de5f5f" stroke-width="6.5" stroke-linecap="round" fill="none"/><path d="M651 625 Q657 620 656 613" stroke="#de5f5f" stroke-width="6.5" stroke-linecap="round" fill="none"/><path d="M649 637 Q645 626 648 624" stroke="#de5f5f" stroke-width="6.5" stroke-linecap="round" fill="none"/><path d="M645 643 Q653 634 655 635" stroke="#de5f5f" stroke-width="6.5" stroke-linecap="round" fill="none"/><path d="M648 664 Q643 656 638 655" stroke="#de5f5f" stroke-width="6.5" stroke-linecap="round" fill="none"/><path d="M645 669 Q644 670 636 677" stroke="#de5f5f" stroke-width="6.5" stroke-linecap="round" fill="none"/><path d="M646 682 Q646 687 652 692" stroke="#de5f5f" stroke-width="6.5" stroke-linecap="round" fill="none"/><path d="M643 700 Q639 708 631 713" stroke="#de5f5f" stroke-width="6.5" stroke-linecap="round" fill="none"/><path d="M648 712 Q651 719 659 723" stroke="#de5f5f" stroke-width="6.5" stroke-linecap="round" fill="none"/><path d="M650 717 Q649 717 653 725" stroke="#de5f5f" stroke-width="6.5" stroke-linecap="round" fill="none"/><path d="M659 497 Q655 499 651 506" stroke="#de5f5f" stroke-width="6.5" stroke-linecap="round" fill="none"/><path d="M662 506 Q667 515 668 516" stroke="#de5f5f" stroke-width="6.5" stroke-linecap="round" fill="none"/><path d="M661 515 Q662 517 670 514" stroke="#de5f5f" stroke-width="6.5" stroke-linecap="round" fill="none"/><path d="M659 523 Q651 519 642 518" stroke="#de5f5f" stroke-width="6.5" stroke-linecap="round" fill="none"/><path d="M656 536 Q666 527 667 528" stroke="#de5f5f" stroke-width="6.5" stroke-linecap="round" fill="none"/><path d="M657 548 Q651 549 650 553" stroke="#de5f5f" stroke-width="6.5" stroke-linecap="round" fill="none"/><path d="M658 560 Q663 562 675 564" stroke="#de5f5f" stroke-width="6.5" stroke-linecap="round" fill="none"/><path d="M659 576 Q660 580 669 582" stroke="#de5f5f" stroke-width="6.5" stroke-linecap="round" fill="none"/><path d="M664 589 Q663 585 671 580" stroke="#de5f5f" stroke-width="6.5" stroke-linecap="round" fill="none"/><path d="M660 601 Q657 610 649 611" stroke="#de5f5f" stroke-width="6.5" stroke-linecap="round" fill="none"/><path d="M658 611 Q657 605 663 602" stroke="#de5f5f" stroke-width="6.5" stroke-linecap="round" fill="none"/><path d="M656 627 Q655 617 661 616" stroke="#de5f5f" stroke-width="6.5" stroke-linecap="round" fill="none"/><path d="M657 632 Q649 631 645 638" stroke="#de5f5f" stroke-width="6.5" stroke-linecap="round" fill="none"/><path d="M662 643 Q663 645 666 654" stroke="#de5f5f" stroke-width="6.5" stroke-linecap="round" fill="none"/><path d="M659 658 Q663 653 659 644" stroke="#de5f5f" stroke-width="6.5" stroke-linecap="round" fill="none"/><path d="M663 673 Q657 680 647 679" stroke="#de5f5f" stroke-width="6.5" stroke-linecap="round" fill="none"/><path d="M662 686 Q660 690 660 702" stroke="#de5f5f" stroke-width="6.5" stroke-linecap="round" fill="none"/><path d="M656 693 Q653 696 654 708" stroke="#de5f5f" stroke-width="6.5" stroke-linecap="round" fill="none"/><path d="M663 709 Q664 708 672 710" stroke="#de5f5f" stroke-width="6.5" stroke-linecap="round" fill="none"/><path d="M664 724 Q659 720 655 717" stroke="#de5f5f" stroke-width="6.5" stroke-linecap="round" fill="none"/><path d="M670 487 Q665 479 656 479" stroke="#de5f5f" stroke-width="6.5" stroke-linecap="round" fill="none"/><path d="M672 501 Q675 497 669 488" stroke="#de5f5f" stroke-width="6.5" stroke-linecap="round" fill="none"/><path d="M668 514 Q673 510 679 507" stroke="#de5f5f" stroke-width="6.5" stroke-linecap="round" fill="none"/><path d="M675 532 Q667 527 657 529" stroke="#de5f5f" stroke-width="6.5" stroke-linecap="round" fill="none"/><path d="M675 539 Q679 543 692 545" stroke="#de5f5f" stroke-width="6.5" stroke-linecap="round" fill="none"/><path d="M672 556 Q665 556 663 563" stroke="#de5f5f" stroke-width="6.5" stroke-linecap="round" fill="none"/><path d="M673 563 Q671 554 673 551" stroke="#de5f5f" stroke-width="6.5" stroke-linecap="round" fill="none"/><path d="M677 579 Q680 570 685 568" stroke="#de5f5f" stroke-width="6.5" stroke-linecap="round" fill="none"/><path d="M675 588 Q676 591 686 590" stroke="#de5f5f" stroke-width="6.5" stroke-linecap="round" fill="none"/><path d="M676 597 Q680 595 679 586" stroke="#de5f5f" stroke-width="6.5" stroke-linecap="round" fill="none"/><path d="M673 615 Q670 619 667 621" stroke="#de5f5f" stroke-width="6.5" stroke-linecap="round" fill="none"/><path d="M669 623 Q665 626 665 631" stroke="#de5f5f" stroke-width="6.5" stroke-linecap="round" fill="none"/><path d="M672 638 Q668 648 657 649" stroke="#de5f5f" stroke-width="6.5" stroke-linecap="round" fill="none"/><path d="M674 650 Q665 649 658 646" stroke="#de5f5f" stroke-width="6.5" stroke-linecap="round" fill="none"/><path d="M674 660 Q669 664 672 670" stroke="#de5f5f" stroke-width="6.5" stroke-linecap="round" fill="none"/><path d="M673 675 Q676 667 670 663" stroke="#de5f5f" stroke-width="6.5" stroke-linecap="round" fill="none"/><path d="M674 680 Q679 676 674 665" stroke="#de5f5f" stroke-width="6.5" stroke-linecap="round" fill="none"/><path d="M674 699 Q670 692 673 685" stroke="#de5f5f" stroke-width="6.5" stroke-linecap="round" fill="none"/><path d="M676 705 Q682 699 690 703" stroke="#de5f5f" stroke-width="6.5" stroke-linecap="round" fill="none"/><path d="M671 717 Q670 711 661 703" stroke="#de5f5f" stroke-width="6.5" stroke-linecap="round" fill="none"/><path d="M683 488 Q682 480 678 475" stroke="#de5f5f" stroke-width="6.5" stroke-linecap="round" fill="none"/><path d="M688 501 Q687 510 684 512" stroke="#de5f5f" stroke-width="6.5" stroke-linecap="round" fill="none"/><path d="M681 517 Q677 513 682 506" stroke="#de5f5f" stroke-width="6.5" stroke-linecap="round" fill="none"/><path d="M687 532 Q686 526 686 519" stroke="#de5f5f" stroke-width="6.5" stroke-linecap="round" fill="none"/><path d="M688 538 Q691 542 685 552" stroke="#de5f5f" stroke-width="6.5" stroke-linecap="round" fill="none"/><path d="M679 548 Q669 542 666 543" stroke="#de5f5f" stroke-width="6.5" stroke-linecap="round" fill="none"/><path d="M685 565 Q678 558 679 551" stroke="#de5f5f" stroke-width="6.5" stroke-linecap="round" fill="none"/><path d="M687 581 Q685 592 680 596" stroke="#de5f5f" stroke-width="6.5" stroke-linecap="round" fill="none"/><path d="M681 590 Q681 581 688 579" stroke="#de5f5f" stroke-width="6.5" stroke-linecap="round" fill="none"/><path d="M681 596 Q681 604 689 608" stroke="#de5f5f" stroke-width="6.5" stroke-linecap="round" fill="none"/><path d="M686 615 Q693 612 691 601" stroke="#de5f5f" stroke-width="6.5" stroke-linecap="round" fill="none"/><path d="M685 629 Q685 629 693 635" stroke="#de5f5f" stroke-width="6.5" stroke-linecap="round" fill="none"/><path d="M683 636 Q675 628 676 621" stroke="#de5f5f" stroke-width="6.5" stroke-linecap="round" fill="none"/><path d="M684 647 Q688 653 695 656" stroke="#de5f5f" stroke-width="6.5" stroke-linecap="round" fill="none"/><path d="M684 665 Q691 665 693 661" stroke="#de5f5f" stroke-width="6.5" stroke-linecap="round" fill="none"/><path d="M682 668 Q678 673 670 670" stroke="#de5f5f" stroke-width="6.5" stroke-linecap="round" fill="none"/><path d="M683 682 Q678 683 668 682" stroke="#de5f5f" stroke-width="6.5" stroke-linecap="round" fill="none"/><path d="M682 694 Q681 688 690 683" stroke="#de5f5f" stroke-width="6.5" stroke-linecap="round" fill="none"/><path d="M681 710 Q682 712 692 715" stroke="#de5f5f" stroke-width="6.5" stroke-linecap="round" fill="none"/><path d="M689 720 Q678 725 676 732" stroke="#de5f5f" stroke-width="6.5" stroke-linecap="round" fill="none"/><path d="M699 487 Q695 478 700 475" stroke="#de5f5f" stroke-width="6.5" stroke-linecap="round" fill="none"/><path d="M696 503 Q688 507 686 502" stroke="#de5f5f" stroke-width="6.5" stroke-linecap="round" fill="none"/><path d="M695 516 Q705 521 705 522" stroke="#de5f5f" stroke-width="6.5" stroke-linecap="round" fill="none"/><path d="M696 524 Q689 529 684 534" stroke="#de5f5f" stroke-width="6.5" stroke-linecap="round" fill="none"/><path d="M700 541 Q692 541 694 534" stroke="#de5f5f" stroke-width="6.5" stroke-linecap="round" fill="none"/><path d="M695 556 Q698 553 703 540" stroke="#de5f5f" stroke-width="6.5" stroke-linecap="round" fill="none"/><path d="M699 568 Q703 579 708 581" stroke="#de5f5f" stroke-width="6.5" stroke-linecap="round" fill="none"/><path d="M701 573 Q696 574 691 579" stroke="#de5f5f" stroke-width="6.5" stroke-linecap="round" fill="none"/><path d="M698 584 Q697 589 704 596" stroke="#de5f5f" stroke-width="6.5" stroke-linecap="round" fill="none"/><path d="M700 604 Q705 613 703 613" stroke="#de5f5f" stroke-width="6.5" stroke-linecap="round" fill="none"/><path d="M697 608 Q702 612 698 626" stroke="#de5f5f" stroke-width="6.5" stroke-linecap="round" fill="none"/><path d="M693 623 Q691 634 691 639" stroke="#de5f5f" stroke-width="6.5" stroke-linecap="round" fill="none"/><path d="M693 636 Q696 631 708 634" stroke="#de5f5f" stroke-width="6.5" stroke-linecap="round" fill="none"/><path d="M697 647 Q694 656 688 657" stroke="#de5f5f" stroke-width="6.5" stroke-linecap="round" fill="none"/><path d="M693 661 Q695 664 692 675" stroke="#de5f5f" stroke-width="6.5" stroke-linecap="round" fill="none"/><path d="M696 674 Q703 675 712 675" stroke="#de5f5f" stroke-width="6.5" stroke-linecap="round" fill="none"/><path d="M697 687 Q699 688 710 692" stroke="#de5f5f" stroke-width="6.5" stroke-linecap="round" fill="none"/><path d="M694 691 Q694 702 691 704" stroke="#de5f5f" stroke-width="6.5" stroke-linecap="round" fill="none"/><path d="M695 708 Q697 705 691 691" stroke="#de5f5f" stroke-width="6.5" stroke-linecap="round" fill="none"/><path d="M694 717 Q698 717 703 713" stroke="#de5f5f" stroke-width="6.5" stroke-linecap="round" fill="none"/><path d="M708 491 Q714 492 719 486" stroke="#de5f5f" stroke-width="6.5" stroke-linecap="round" fill="none"/><path d="M704 503 Q694 502 690 503" stroke="#de5f5f" stroke-width="6.5" stroke-linecap="round" fill="none"/><path d="M704 512 Q705 514 698 520" stroke="#de5f5f" stroke-width="6.5" stroke-linecap="round" fill="none"/><path d="M706 531 Q709 526 705 519" stroke="#de5f5f" stroke-width="6.5" stroke-linecap="round" fill="none"/><path d="M707 541 Q711 546 707 553" stroke="#de5f5f" stroke-width="6.5" stroke-linecap="round" fill="none"/><path d="M712 549 Q717 553 718 556" stroke="#de5f5f" stroke-width="6.5" stroke-linecap="round" fill="none"/><path d="M703 559 Q710 549 709 547" stroke="#de5f5f" stroke-width="6.5" stroke-linecap="round" fill="none"/><path d="M709 572 Q709 562 706 558" stroke="#de5f5f" stroke-width="6.5" stroke-linecap="round" fill="none"/><path d="M712 584 Q715 583 726 590" stroke="#de5f5f" stroke-width="6.5" stroke-linecap="round" fill="none"/><path d="M708 601 Q709 598 720 592" stroke="#de5f5f" stroke-width="6.5" stroke-linecap="round" fill="none"/><path d="M711 608 Q710 598 712 597" stroke="#de5f5f" stroke-width="6.5" stroke-linecap="round" fill="none"/><path d="M711 624 Q713 618 721 617" stroke="#de5f5f" stroke-width="6.5" stroke-linecap="round" fill="none"/><path d="M706 640 Q706 641 708 650" stroke="#de5f5f" stroke-width="6.5" stroke-linecap="round" fill="none"/><path d="M707 649 Q701 645 701 641" stroke="#de5f5f" stroke-width="6.5" stroke-linecap="round" fill="none"/><path d="M710 659 Q699 653 694 652" stroke="#de5f5f" stroke-width="6.5" stroke-linecap="round" fill="none"/><path d="M708 672 Q715 667 719 664" stroke="#de5f5f" stroke-width="6.5" stroke-linecap="round" fill="none"/><path d="M711 687 Q707 691 708 697" stroke="#de5f5f" stroke-width="6.5" stroke-linecap="round" fill="none"/><path d="M712 694 Q711 684 702 683" stroke="#de5f5f" stroke-width="6.5" stroke-linecap="round" fill="none"/><path d="M711 706 Q720 712 722 715" stroke="#de5f5f" stroke-width="6.5" stroke-linecap="round" fill="none"/><path d="M703 725 Q700 727 693 735" stroke="#de5f5f" stroke-width="6.5" stroke-linecap="round" fill="none"/><path d="M719 490 Q725 492 727 496" stroke="#de5f5f" stroke-width="6.5" stroke-linecap="round" fill="none"/><path d="M724 500 Q726 508 720 510" stroke="#de5f5f" stroke-width="6.5" stroke-linecap="round" fill="none"/><path d="M724 516 Q726 515 734 524" stroke="#de5f5f" stroke-width="6.5" stroke-linecap="round" fill="none"/><path d="M721 526 Q730 535 731 534" stroke="#de5f5f" stroke-width="6.5" stroke-linecap="round" fill="none"/><path d="M720 536 Q721 527 721 526" stroke="#de5f5f" stroke-width="6.5" stroke-linecap="round" fill="none"/><path d="M725 552 Q720 559 714 557" stroke="#de5f5f" stroke-width="6.5" stroke-linecap="round" fill="none"/><path d="M719 561 Q710 562 702 560" stroke="#de5f5f" stroke-width="6.5" stroke-linecap="round" fill="none"/><path d="M724 574 Q723 563 729 561" stroke="#de5f5f" stroke-width="6.5" stroke-linecap="round" fill="none"/><path d="M724 588 Q717 591 708 594" stroke="#de5f5f" stroke-width="6.5" stroke-linecap="round" fill="none"/><path d="M718 602 Q720 610 717 616" stroke="#de5f5f" stroke-width="6.5" stroke-linecap="round" fill="none"/><path d="M716 609 Q710 607 711 594" stroke="#de5f5f" stroke-width="6.5" stroke-linecap="round" fill="none"/><path d="M716 621 Q723 628 727 628" stroke="#de5f5f" stroke-width="6.5" stroke-linecap="round" fill="none"/><path d="M717 638 Q720 641 728 647" stroke="#de5f5f" stroke-width="6.5" stroke-linecap="round" fill="none"/><path d="M716 650 Q720 657 727 661" stroke="#de5f5f" stroke-width="6.5" stroke-linecap="round" fill="none"/><path d="M721 660 Q725 652 734 648" stroke="#de5f5f" stroke-width="6.5" stroke-linecap="round" fill="none"/><path d="M724 668 Q723 668 713 674" stroke="#de5f5f" stroke-width="6.5" stroke-linecap="round" fill="none"/><path d="M722 687 Q725 680 720 678" stroke="#de5f5f" stroke-width="6.5" stroke-linecap="round" fill="none"/><path d="M724 698 Q718 700 709 706" stroke="#de5f5f" stroke-width="6.5" stroke-linecap="round" fill="none"/><path d="M722 708 Q724 698 719 694" stroke="#de5f5f" stroke-width="6.5" stroke-linecap="round" fill="none"/><path d="M720 715 Q725 703 724 700" stroke="#de5f5f" stroke-width="6.5" stroke-linecap="round" fill="none"/><path d="M732 492 Q741 499 740 499" stroke="#de5f5f" stroke-width="6.5" stroke-linecap="round" fill="none"/><path d="M729 507 Q727 500 722 497" stroke="#de5f5f" stroke-width="6.5" stroke-linecap="round" fill="none"/><path d="M730 511 Q728 505 722 499" stroke="#de5f5f" stroke-width="6.5" stroke-linecap="round" fill="none"/><path d="M731 526 Q732 522 730 514" stroke="#de5f5f" stroke-width="6.5" stroke-linecap="round" fill="none"/><path d="M731 542 Q740 540 742 546" stroke="#de5f5f" stroke-width="6.5" stroke-linecap="round" fill="none"/><path d="M728 547 Q728 542 729 537" stroke="#de5f5f" stroke-width="6.5" stroke-linecap="round" fill="none"/><path d="M735 564 Q733 566 726 563" stroke="#de5f5f" stroke-width="6.5" stroke-linecap="round" fill="none"/><path d="M733 579 Q731 575 722 569" stroke="#de5f5f" stroke-width="6.5" stroke-linecap="round" fill="none"/><path d="M727 592 Q728 590 738 591" stroke="#de5f5f" stroke-width="6.5" stroke-linecap="round" fill="none"/><path d="M728 599 Q728 601 737 605" stroke="#de5f5f" stroke-width="6.5" stroke-linecap="round" fill="none"/><path d="M730 614 Q731 622 722 621" stroke="#de5f5f" stroke-width="6.5" stroke-linecap="round" fill="none"/><path d="M734 621 Q728 620 723 629" stroke="#de5f5f" stroke-width="6.5" stroke-linecap="round" fill="none"/><path d="M732 639 Q730 633 726 623" stroke="#de5f5f" stroke-width="6.5" stroke-linecap="round" fill="none"/><path d="M736 652 Q739 648 739 640" stroke="#de5f5f" stroke-width="6.5" stroke-linecap="round" fill="none"/><path d="M736 662 Q729 662 726 666" stroke="#de5f5f" stroke-width="6.5" stroke-linecap="round" fill="none"/><path d="M734 675 Q740 680 739 688" stroke="#de5f5f" stroke-width="6.5" stroke-linecap="round" fill="none"/><path d="M728 685 Q722 684 721 693" stroke="#de5f5f" stroke-width="6.5" stroke-linecap="round" fill="none"/><path d="M728 695 Q733 703 736 701" stroke="#de5f5f" stroke-width="6.5" stroke-linecap="round" fill="none"/><path d="M735 706 Q736 699 744 702" stroke="#de5f5f" stroke-width="6.5" stroke-linecap="round" fill="none"/><path d="M728 721 Q731 714 728 708" stroke="#de5f5f" stroke-width="6.5" stroke-linecap="round" fill="none"/><path d="M748 493 Q742 491 738 491" stroke="#de5f5f" stroke-width="6.5" stroke-linecap="round" fill="none"/><path d="M747 501 Q741 510 743 517" stroke="#de5f5f" stroke-width="6.5" stroke-linecap="round" fill="none"/><path d="M741 518 Q739 514 733 512" stroke="#de5f5f" stroke-width="6.5" stroke-linecap="round" fill="none"/><path d="M742 532 Q745 522 744 520" stroke="#de5f5f" stroke-width="6.5" stroke-linecap="round" fill="none"/><path d="M744 536 Q740 525 733 522" stroke="#de5f5f" stroke-width="6.5" stroke-linecap="round" fill="none"/><path d="M744 552 Q737 553 734 555" stroke="#de5f5f" stroke-width="6.5" stroke-linecap="round" fill="none"/><path d="M740 566 Q736 570 740 577" stroke="#de5f5f" stroke-width="6.5" stroke-linecap="round" fill="none"/><path d="M748 574 Q758 573 758 581" stroke="#de5f5f" stroke-width="6.5" stroke-linecap="round" fill="none"/><path d="M742 585 Q736 583 737 573" stroke="#de5f5f" stroke-width="6.5" stroke-linecap="round" fill="none"/><path d="M742 602 Q730 602 726 607" stroke="#de5f5f" stroke-width="6.5" stroke-linecap="round" fill="none"/><path d="M742 610 Q743 604 748 597" stroke="#de5f5f" stroke-width="6.5" stroke-linecap="round" fill="none"/><path d="M747 625 Q741 626 733 629" stroke="#de5f5f" stroke-width="6.5" stroke-linecap="round" fill="none"/><path d="M743 632 Q733 634 728 639" stroke="#de5f5f" stroke-width="6.5" stroke-linecap="round" fill="none"/><path d="M745 649 Q750 650 751 661" stroke="#de5f5f" stroke-width="6.5" stroke-linecap="round" fill="none"/><path d="M740 663 Q740 661 748 657" stroke="#de5f5f" stroke-width="6.5" stroke-linecap="round" fill="none"/><path d="M742 674 Q745 673 755 676" stroke="#de5f5f" stroke-width="6.5" stroke-linecap="round" fill="none"/><path d="M746 684 Q752 681 756 671" stroke="#de5f5f" stroke-width="6.5" stroke-linecap="round" fill="none"/><path d="M741 696 Q734 706 735 709" stroke="#de5f5f" stroke-width="6.5" stroke-linecap="round" fill="none"/><path d="M743 711 Q750 711 759 705" stroke="#de5f5f" stroke-width="6.5" stroke-linecap="round" fill="none"/><path d="M749 716 Q748 706 749 701" stroke="#de5f5f" stroke-width="6.5" stroke-linecap="round" fill="none"/><path d="M753 491 Q756 490 764 486" stroke="#de5f5f" stroke-width="6.5" stroke-linecap="round" fill="none"/><path d="M755 505 Q745 510 744 508" stroke="#de5f5f" stroke-width="6.5" stroke-linecap="round" fill="none"/><path d="M758 513 Q751 517 743 513" stroke="#de5f5f" stroke-width="6.5" stroke-linecap="round" fill="none"/><path d="M759 526 Q752 537 751 538" stroke="#de5f5f" stroke-width="6.5" stroke-linecap="round" fill="none"/><path d="M751 540 Q746 544 749 554" stroke="#de5f5f" stroke-width="6.5" stroke-linecap="round" fill="none"/><path d="M761 555 Q757 558 763 568" stroke="#de5f5f" stroke-width="6.5" stroke-linecap="round" fill="none"/><path d="M753 569 Q746 570 749 579" stroke="#de5f5f" stroke-width="6.5" stroke-linecap="round" fill="none"/><path d="M761 578 Q771 572 775 570" stroke="#de5f5f" stroke-width="6.5" stroke-linecap="round" fill="none"/><path d="M753 586 Q760 588 762 590" stroke="#de5f5f" stroke-width="6.5" stroke-linecap="round" fill="none"/><path d="M751 598 Q758 594 761 585" stroke="#de5f5f" stroke-width="6.5" stroke-linecap="round" fill="none"/><path d="M760 613 Q753 613 750 622" stroke="#de5f5f" stroke-width="6.5" stroke-linecap="round" fill="none"/><path d="M754 624 Q755 626 761 630" stroke="#de5f5f" stroke-width="6.5" stroke-linecap="round" fill="none"/><path d="M761 636 Q766 627 769 622" stroke="#de5f5f" stroke-width="6.5" stroke-linecap="round" fill="none"/><path d="M755 646 Q752 638 744 634" stroke="#de5f5f" stroke-width="6.5" stroke-linecap="round" fill="none"/><path d="M752 655 Q743 650 743 649" stroke="#de5f5f" stroke-width="6.5" stroke-linecap="round" fill="none"/><path d="M753 669 Q747 665 746 657" stroke="#de5f5f" stroke-width="6.5" stroke-linecap="round" fill="none"/><path d="M753 688 Q760 695 764 698" stroke="#de5f5f" stroke-width="6.5" stroke-linecap="round" fill="none"/><path d="M756 700 Q746 691 745 689" stroke="#de5f5f" stroke-width="6.5" stroke-linecap="round" fill="none"/><path d="M756 708 Q761 713 769 717" stroke="#de5f5f" stroke-width="6.5" stroke-linecap="round" fill="none"/><path d="M756 723 Q755 732 752 737" stroke="#de5f5f" stroke-width="6.5" stroke-linecap="round" fill="none"/><path d="M766 490 Q760 487 752 492" stroke="#de5f5f" stroke-width="6.5" stroke-linecap="round" fill="none"/><path d="M767 505 Q773 504 771 514" stroke="#de5f5f" stroke-width="6.5" stroke-linecap="round" fill="none"/><path d="M768 514 Q770 514 779 516" stroke="#de5f5f" stroke-width="6.5" stroke-linecap="round" fill="none"/><path d="M772 524 Q769 525 763 536" stroke="#de5f5f" stroke-width="6.5" stroke-linecap="round" fill="none"/><path d="M765 538 Q768 534 776 530" stroke="#de5f5f" stroke-width="6.5" stroke-linecap="round" fill="none"/><path d="M768 548 Q764 542 760 535" stroke="#de5f5f" stroke-width="6.5" stroke-linecap="round" fill="none"/><path d="M771 569 Q767 567 764 562" stroke="#de5f5f" stroke-width="6.5" stroke-linecap="round" fill="none"/><path d="M766 578 Q763 585 756 589" stroke="#de5f5f" stroke-width="6.5" stroke-linecap="round" fill="none"/><path d="M772 590 Q768 584 768 575" stroke="#de5f5f" stroke-width="6.5" stroke-linecap="round" fill="none"/><path d="M769 596 Q769 590 770 585" stroke="#de5f5f" stroke-width="6.5" stroke-linecap="round" fill="none"/><path d="M770 615 Q761 617 753 618" stroke="#de5f5f" stroke-width="6.5" stroke-linecap="round" fill="none"/><path d="M773 622 Q767 616 769 605" stroke="#de5f5f" stroke-width="6.5" stroke-linecap="round" fill="none"/><path d="M770 636 Q768 628 774 620" stroke="#de5f5f" stroke-width="6.5" stroke-linecap="round" fill="none"/><path d="M769 650 Q780 644 785 646" stroke="#de5f5f" stroke-width="6.5" stroke-linecap="round" fill="none"/><path d="M767 664 Q773 664 782 659" stroke="#de5f5f" stroke-width="6.5" stroke-linecap="round" fill="none"/><path d="M768 674 Q765 672 757 661" stroke="#de5f5f" stroke-width="6.5" stroke-linecap="round" fill="none"/><path d="M768 684 Q760 683 760 672" stroke="#de5f5f" stroke-width="6.5" stroke-linecap="round" fill="none"/><path d="M766 696 Q776 695 777 699" stroke="#de5f5f" stroke-width="6.5" stroke-linecap="round" fill="none"/><path d="M766 711 Q767 723 767 726" stroke="#de5f5f" stroke-width="6.5" stroke-linecap="round" fill="none"/><path d="M768 718 Q762 721 767 731" stroke="#de5f5f" stroke-width="6.5" stroke-linecap="round" fill="none"/><path d="M776 490 Q776 479 779 473" stroke="#de5f5f" stroke-width="6.5" stroke-linecap="round" fill="none"/><path d="M778 505 Q773 504 768 507" stroke="#de5f5f" stroke-width="6.5" stroke-linecap="round" fill="none"/><path d="M776 519 Q784 523 787 527" stroke="#de5f5f" stroke-width="6.5" stroke-linecap="round" fill="none"/><path d="M784 526 Q792 524 793 523" stroke="#de5f5f" stroke-width="6.5" stroke-linecap="round" fill="none"/><path d="M775 538 Q785 540 790 537" stroke="#de5f5f" stroke-width="6.5" stroke-linecap="round" fill="none"/><path d="M775 550 Q771 548 758 554" stroke="#de5f5f" stroke-width="6.5" stroke-linecap="round" fill="none"/><path d="M785 565 Q783 569 782 574" stroke="#de5f5f" stroke-width="6.5" stroke-linecap="round" fill="none"/><path d="M780 574 Q784 575 792 570" stroke="#de5f5f" stroke-width="6.5" stroke-linecap="round" fill="none"/><path d="M777 587 Q787 592 786 594" stroke="#de5f5f" stroke-width="6.5" stroke-linecap="round" fill="none"/><path d="M780 602 Q776 592 774 590" stroke="#de5f5f" stroke-width="6.5" stroke-linecap="round" fill="none"/><path d="M775 608 Q773 609 768 613" stroke="#de5f5f" stroke-width="6.5" stroke-linecap="round" fill="none"/><path d="M777 622 Q775 622 766 623" stroke="#de5f5f" stroke-width="6.5" stroke-linecap="round" fill="none"/><path d="M776 632 Q779 629 787 623" stroke="#de5f5f" stroke-width="6.5" stroke-linecap="round" fill="none"/><path d="M775 652 Q778 648 789 646" stroke="#de5f5f" stroke-width="6.5" stroke-linecap="round" fill="none"/><path d="M783 661 Q780 667 786 672" stroke="#de5f5f" stroke-width="6.5" stroke-linecap="round" fill="none"/><path d="M777 671 Q784 669 790 661" stroke="#de5f5f" stroke-width="6.5" stroke-linecap="round" fill="none"/><path d="M776 688 Q785 681 785 678" stroke="#de5f5f" stroke-width="6.5" stroke-linecap="round" fill="none"/><path d="M785 694 Q797 693 800 687" stroke="#de5f5f" stroke-width="6.5" stroke-linecap="round" fill="none"/><path d="M776 706 Q773 694 766 692" stroke="#de5f5f" stroke-width="6.5" stroke-linecap="round" fill="none"/><path d="M778 718 Q781 722 784 728" stroke="#de5f5f" stroke-width="6.5" stroke-linecap="round" fill="none"/><path d="M790 491 Q799 493 803 486" stroke="#de5f5f" stroke-width="6.5" stroke-linecap="round" fill="none"/><path d="M787 508 Q794 513 796 514" stroke="#de5f5f" stroke-width="6.5" stroke-linecap="round" fill="none"/><path d="M793 516 Q789 507 791 503" stroke="#de5f5f" stroke-width="6.5" stroke-linecap="round" fill="none"/><path d="M788 523 Q795 520 805 518" stroke="#de5f5f" stroke-width="6.5" stroke-linecap="round" fill="none"/><path d="M790 543 Q788 547 779 543" stroke="#de5f5f" stroke-width="6.5" stroke-linecap="round" fill="none"/><path d="M787 552 Q787 557 790 566" stroke="#de5f5f" stroke-width="6.5" stroke-linecap="round" fill="none"/><path d="M790 565 Q785 565 777 565" stroke="#de5f5f" stroke-width="6.5" stroke-linecap="round" fill="none"/><path d="M796 575 Q800 568 801 559" stroke="#de5f5f" stroke-width="6.5" stroke-linecap="round" fill="none"/><path d="M795 590 Q794 591 799 602" stroke="#de5f5f" stroke-width="6.5" stroke-linecap="round" fill="none"/><path d="M794 598 Q789 605 794 608" stroke="#de5f5f" stroke-width="6.5" stroke-linecap="round" fill="none"/><path d="M791 611 Q789 601 783 596" stroke="#de5f5f" stroke-width="6.5" stroke-linecap="round" fill="none"/><path d="M797 621 Q788 621 784 614" stroke="#de5f5f" stroke-width="6.5" stroke-linecap="round" fill="none"/><path d="M793 638 Q796 646 804 651" stroke="#de5f5f" stroke-width="6.5" stroke-linecap="round" fill="none"/><path d="M794 646 Q799 654 793 658" stroke="#de5f5f" stroke-width="6.5" stroke-linecap="round" fill="none"/><path d="M792 661 Q784 652 785 651" stroke="#de5f5f" stroke-width="6.5" stroke-linecap="round" fill="none"/><path d="M793 673 Q804 677 807 671" stroke="#de5f5f" stroke-width="6.5" stroke-linecap="round" fill="none"/><path d="M792 683 Q788 685 780 685" stroke="#de5f5f" stroke-width="6.5" stroke-linecap="round" fill="none"/><path d="M788 701 Q781 700 773 698" stroke="#de5f5f" stroke-width="6.5" stroke-linecap="round" fill="none"/><path d="M793 704 Q797 706 803 716" stroke="#de5f5f" stroke-width="6.5" stroke-linecap="round" fill="none"/><path d="M795 722 Q792 719 796 710" stroke="#de5f5f" stroke-width="6.5" stroke-linecap="round" fill="none"/><path d="M801 494 Q794 489 797 483" stroke="#de5f5f" stroke-width="6.5" stroke-linecap="round" fill="none"/><path d="M807 505 Q815 504 818 504" stroke="#de5f5f" stroke-width="6.5" stroke-linecap="round" fill="none"/><path d="M805 514 Q807 525 807 528" stroke="#de5f5f" stroke-width="6.5" stroke-linecap="round" fill="none"/><path d="M805 528 Q800 520 796 516" stroke="#de5f5f" stroke-width="6.5" stroke-linecap="round" fill="none"/><path d="M806 539 Q810 542 816 541" stroke="#de5f5f" stroke-width="6.5" stroke-linecap="round" fill="none"/><path d="M806 552 Q806 549 810 541" stroke="#de5f5f" stroke-width="6.5" stroke-linecap="round" fill="none"/><path d="M806 563 Q810 564 813 557" stroke="#de5f5f" stroke-width="6.5" stroke-linecap="round" fill="none"/><path d="M808 573 Q815 565 813 560" stroke="#de5f5f" stroke-width="6.5" stroke-linecap="round" fill="none"/><path d="M806 589 Q811 585 818 589" stroke="#de5f5f" stroke-width="6.5" stroke-linecap="round" fill="none"/><path d="M806 596 Q806 596 812 587" stroke="#de5f5f" stroke-width="6.5" stroke-linecap="round" fill="none"/><path d="M804 615 Q800 624 798 624" stroke="#de5f5f" stroke-width="6.5" stroke-linecap="round" fill="none"/><path d="M801 628 Q804 625 812 618" stroke="#de5f5f" stroke-width="6.5" stroke-linecap="round" fill="none"/><path d="M808 637 Q814 645 811 651" stroke="#de5f5f" stroke-width="6.5" stroke-linecap="round" fill="none"/><path d="M800 645 Q792 640 794 638" stroke="#de5f5f" stroke-width="6.5" stroke-linecap="round" fill="none"/><path d="M802 660 Q810 661 814 666" stroke="#de5f5f" stroke-width="6.5" stroke-linecap="round" fill="none"/><path d="M805 672 Q808 666 808 659" stroke="#de5f5f" stroke-width="6.5" stroke-linecap="round" fill="none"/><path d="M807 680 Q817 681 820 691" stroke="#de5f5f" stroke-width="6.5" stroke-linecap="round" fill="none"/><path d="M808 697 Q811 687 817 685" stroke="#de5f5f" stroke-width="6.5" stroke-linecap="round" fill="none"/><path d="M807 710 Q800 716 795 712" stroke="#de5f5f" stroke-width="6.5" stroke-linecap="round" fill="none"/><path d="M804 717 Q809 713 821 716" stroke="#de5f5f" stroke-width="6.5" stroke-linecap="round" fill="none"/><path d="M818 491 Q809 493 803 493" stroke="#de5f5f" stroke-width="6.5" stroke-linecap="round" fill="none"/><path d="M813 501 Q811 496 801 498" stroke="#de5f5f" stroke-width="6.5" stroke-linecap="round" fill="none"/><path d="M820 514 Q816 523 815 522" stroke="#de5f5f" stroke-width="6.5" stroke-linecap="round" fill="none"/><path d="M815 531 Q819 530 830 529" stroke="#de5f5f" stroke-width="6.5" stroke-linecap="round" fill="none"/><path d="M813 537 Q812 542 807 547" stroke="#de5f5f" stroke-width="6.5" stroke-linecap="round" fill="none"/><path d="M814 550 Q816 549 820 557" stroke="#de5f5f" stroke-width="6.5" stroke-linecap="round" fill="none"/><path d="M816 562 Q821 560 818 550" stroke="#de5f5f" stroke-width="6.5" stroke-linecap="round" fill="none"/><path d="M820 573 Q830 570 832 568" stroke="#de5f5f" stroke-width="6.5" stroke-linecap="round" fill="none"/><path d="M816 586 Q821 582 817 573" stroke="#de5f5f" stroke-width="6.5" stroke-linecap="round" fill="none"/><path d="M815 595 Q813 602 814 608" stroke="#de5f5f" stroke-width="6.5" stroke-linecap="round" fill="none"/><path d="M811 612 Q820 608 825 601" stroke="#de5f5f" stroke-width="6.5" stroke-linecap="round" fill="none"/><path d="M817 629 Q819 627 820 616" stroke="#de5f5f" stroke-width="6.5" stroke-linecap="round" fill="none"/><path d="M817 637 Q814 648 811 651" stroke="#de5f5f" stroke-width="6.5" stroke-linecap="round" fill="none"/><path d="M821 653 Q821 650 830 650" stroke="#de5f5f" stroke-width="6.5" stroke-linecap="round" fill="none"/><path d="M819 661 Q817 662 819 670" stroke="#de5f5f" stroke-width="6.5" stroke-linecap="round" fill="none"/><path d="M812 674 Q815 676 816 684" stroke="#de5f5f" stroke-width="6.5" stroke-linecap="round" fill="none"/><path d="M819 686 Q827 678 831 675" stroke="#de5f5f" stroke-width="6.5" stroke-linecap="round" fill="none"/><path d="M815 695 Q808 703 802 706" stroke="#de5f5f" stroke-width="6.5" stroke-linecap="round" fill="none"/><path d="M817 704 Q822 708 821 718" stroke="#de5f5f" stroke-width="6.5" stroke-linecap="round" fill="none"/><path d="M813 719 Q812 721 801 722" stroke="#de5f5f" stroke-width="6.5" stroke-linecap="round" fill="none"/><path d="M826 490 Q819 486 815 490" stroke="#de5f5f" stroke-width="6.5" stroke-linecap="round" fill="none"/><path d="M830 508 Q834 504 841 499" stroke="#de5f5f" stroke-width="6.5" stroke-linecap="round" fill="none"/><path d="M829 513 Q819 511 816 509" stroke="#de5f5f" stroke-width="6.5" stroke-linecap="round" fill="none"/><path d="M831 529 Q830 535 826 539" stroke="#de5f5f" stroke-width="6.5" stroke-linecap="round" fill="none"/><path d="M826 540 Q824 542 814 548" stroke="#de5f5f" stroke-width="6.5" stroke-linecap="round" fill="none"/><path d="M828 553 Q823 552 823 543" stroke="#de5f5f" stroke-width="6.5" stroke-linecap="round" fill="none"/><path d="M824 566 Q824 570 824 579" stroke="#de5f5f" stroke-width="6.5" stroke-linecap="round" fill="none"/><path d="M825 581 Q832 581 835 583" stroke="#de5f5f" stroke-width="6.5" stroke-linecap="round" fill="none"/><path d="M825 591 Q832 589 836 590" stroke="#de5f5f" stroke-width="6.5" stroke-linecap="round" fill="none"/><path d="M833 601 Q835 596 845 592" stroke="#de5f5f" stroke-width="6.5" stroke-linecap="round" fill="none"/><path d="M830 609 Q842 615 845 618" stroke="#de5f5f" stroke-width="6.5" stroke-linecap="round" fill="none"/><path d="M824 626 Q834 625 840 625" stroke="#de5f5f" stroke-width="6.5" stroke-linecap="round" fill="none"/><path d="M829 640 Q821 645 820 640" stroke="#de5f5f" stroke-width="6.5" stroke-linecap="round" fill="none"/><path d="M830 652 Q835 656 836 660" stroke="#de5f5f" stroke-width="6.5" stroke-linecap="round" fill="none"/><path d="M828 657 Q831 649 829 641" stroke="#de5f5f" stroke-width="6.5" stroke-linecap="round" fill="none"/><path d="M828 671 Q822 677 816 674" stroke="#de5f5f" stroke-width="6.5" stroke-linecap="round" fill="none"/><path d="M831 680 Q826 677 823 666" stroke="#de5f5f" stroke-width="6.5" stroke-linecap="round" fill="none"/><path d="M832 692 Q828 688 824 683" stroke="#de5f5f" stroke-width="6.5" stroke-linecap="round" fill="none"/><path d="M832 709 Q839 705 840 702" stroke="#de5f5f" stroke-width="6.5" stroke-linecap="round" fill="none"/><path d="M825 723 Q824 720 815 718" stroke="#de5f5f" stroke-width="6.5" stroke-linecap="round" fill="none"/><path d="M842 497 Q839 501 835 509" stroke="#de5f5f" stroke-width="6.5" stroke-linecap="round" fill="none"/><path d="M840 509 Q840 504 837 498" stroke="#de5f5f" stroke-width="6.5" stroke-linecap="round" fill="none"/><path d="M839 518 Q832 527 827 529" stroke="#de5f5f" stroke-width="6.5" stroke-linecap="round" fill="none"/><path d="M838 525 Q839 534 833 534" stroke="#de5f5f" stroke-width="6.5" stroke-linecap="round" fill="none"/><path d="M839 537 Q843 530 851 526" stroke="#de5f5f" stroke-width="6.5" stroke-linecap="round" fill="none"/><path d="M840 548 Q838 551 843 561" stroke="#de5f5f" stroke-width="6.5" stroke-linecap="round" fill="none"/><path d="M841 562 Q850 555 856 553" stroke="#de5f5f" stroke-width="6.5" stroke-linecap="round" fill="none"/><path d="M843 574 Q849 572 851 565" stroke="#de5f5f" stroke-width="6.5" stroke-linecap="round" fill="none"/><path d="M842 591 Q838 599 836 599" stroke="#de5f5f" stroke-width="6.5" stroke-linecap="round" fill="none"/><path d="M835 598 Q837 601 831 610" stroke="#de5f5f" stroke-width="6.5" stroke-linecap="round" fill="none"/><path d="M836 607 Q831 615 828 620" stroke="#de5f5f" stroke-width="6.5" stroke-linecap="round" fill="none"/><path d="M840 623 Q841 628 832 628" stroke="#de5f5f" stroke-width="6.5" stroke-linecap="round" fill="none"/><path d="M836 633 Q840 629 839 620" stroke="#de5f5f" stroke-width="6.5" stroke-linecap="round" fill="none"/><path d="M836 651 Q840 659 840 661" stroke="#de5f5f" stroke-width="6.5" stroke-linecap="round" fill="none"/><path d="M838 659 Q837 658 837 647" stroke="#de5f5f" stroke-width="6.5" stroke-linecap="round" fill="none"/><path d="M836 676 Q841 668 850 665" stroke="#de5f5f" stroke-width="6.5" stroke-linecap="round" fill="none"/><path d="M839 681 Q849 677 852 674" stroke="#de5f5f" stroke-width="6.5" stroke-linecap="round" fill="none"/><path d="M840 701 Q847 705 848 708" stroke="#de5f5f" stroke-width="6.5" stroke-linecap="round" fill="none"/><path d="M843 713 Q846 706 845 699" stroke="#de5f5f" stroke-width="6.5" stroke-linecap="round" fill="none"/><path d="M837 718 Q839 717 849 712" stroke="#de5f5f" stroke-width="6.5" stroke-linecap="round" fill="none"/><path d="M857 493 Q852 495 844 494" stroke="#de5f5f" stroke-width="6.5" stroke-linecap="round" fill="none"/><path d="M852 508 Q860 505 864 498" stroke="#de5f5f" stroke-width="6.5" stroke-linecap="round" fill="none"/><path d="M849 516 Q853 519 848 527" stroke="#de5f5f" stroke-width="6.5" stroke-linecap="round" fill="none"/><path d="M855 531 Q848 535 848 537" stroke="#de5f5f" stroke-width="6.5" stroke-linecap="round" fill="none"/><path d="M854 539 Q851 538 846 532" stroke="#de5f5f" stroke-width="6.5" stroke-linecap="round" fill="none"/><path d="M855 553 Q848 550 847 549" stroke="#de5f5f" stroke-width="6.5" stroke-linecap="round" fill="none"/><path d="M848 560 Q856 560 862 556" stroke="#de5f5f" stroke-width="6.5" stroke-linecap="round" fill="none"/><path d="M856 577 Q855 585 844 583" stroke="#de5f5f" stroke-width="6.5" stroke-linecap="round" fill="none"/><path d="M849 591 Q847 584 841 582" stroke="#de5f5f" stroke-width="6.5" stroke-linecap="round" fill="none"/><path d="M854 601 Q854 603 846 596" stroke="#de5f5f" stroke-width="6.5" stroke-linecap="round" fill="none"/><path d="M855 610 Q854 603 853 600" stroke="#de5f5f" stroke-width="6.5" stroke-linecap="round" fill="none"/><path d="M852 622 Q855 621 863 627" stroke="#de5f5f" stroke-width="6.5" stroke-linecap="round" fill="none"/><path d="M850 632 Q855 637 868 635" stroke="#de5f5f" stroke-width="6.5" stroke-linecap="round" fill="none"/><path d="M851 644 Q841 648 839 650" stroke="#de5f5f" stroke-width="6.5" stroke-linecap="round" fill="none"/><path d="M847 658 Q842 649 843 642" stroke="#de5f5f" stroke-width="6.5" stroke-linecap="round" fill="none"/><path d="M856 670 Q864 672 865 678" stroke="#de5f5f" stroke-width="6.5" stroke-linecap="round" fill="none"/><path d="M854 688 Q850 683 846 681" stroke="#de5f5f" stroke-width="6.5" stroke-linecap="round" fill="none"/><path d="M852 697 Q859 699 867 695" stroke="#de5f5f" stroke-width="6.5" stroke-linecap="round" fill="none"/><path d="M852 705 Q846 699 847 695" stroke="#de5f5f" stroke-width="6.5" stroke-linecap="round" fill="none"/><path d="M852 715 Q846 721 841 729" stroke="#de5f5f" stroke-width="6.5" stroke-linecap="round" fill="none"/><path d="M864 494 Q858 492 851 494" stroke="#de5f5f" stroke-width="6.5" stroke-linecap="round" fill="none"/><path d="M866 503 Q866 494 862 492" stroke="#de5f5f" stroke-width="6.5" stroke-linecap="round" fill="none"/><path d="M864 516 Q869 519 874 517" stroke="#de5f5f" stroke-width="6.5" stroke-linecap="round" fill="none"/><path d="M867 531 Q867 520 873 515" stroke="#de5f5f" stroke-width="6.5" stroke-linecap="round" fill="none"/><path d="M860 543 Q859 553 865 554" stroke="#de5f5f" stroke-width="6.5" stroke-linecap="round" fill="none"/><path d="M861 549 Q850 546 848 541" stroke="#de5f5f" stroke-width="6.5" stroke-linecap="round" fill="none"/><path d="M864 565 Q859 567 848 563" stroke="#de5f5f" stroke-width="6.5" stroke-linecap="round" fill="none"/><path d="M862 571 Q859 572 853 573" stroke="#de5f5f" stroke-width="6.5" stroke-linecap="round" fill="none"/><path d="M866 591 Q864 586 865 576" stroke="#de5f5f" stroke-width="6.5" stroke-linecap="round" fill="none"/><path d="M865 597 Q870 589 874 587" stroke="#de5f5f" stroke-width="6.5" stroke-linecap="round" fill="none"/><path d="M867 612 Q867 604 867 595" stroke="#de5f5f" stroke-width="6.5" stroke-linecap="round" fill="none"/><path d="M864 621 Q862 608 869 605" stroke="#de5f5f" stroke-width="6.5" stroke-linecap="round" fill="none"/><path d="M864 632 Q856 637 853 636" stroke="#de5f5f" stroke-width="6.5" stroke-linecap="round" fill="none"/><path d="M865 652 Q868 661 869 664" stroke="#de5f5f" stroke-width="6.5" stroke-linecap="round" fill="none"/><path d="M863 657 Q863 663 853 666" stroke="#de5f5f" stroke-width="6.5" stroke-linecap="round" fill="none"/><path d="M867 675 Q865 681 855 681" stroke="#de5f5f" stroke-width="6.5" stroke-linecap="round" fill="none"/><path d="M863 681 Q860 673 862 669" stroke="#de5f5f" stroke-width="6.5" stroke-linecap="round" fill="none"/><path d="M866 697 Q872 699 879 692" stroke="#de5f5f" stroke-width="6.5" stroke-linecap="round" fill="none"/><path d="M860 709 Q863 705 872 708" stroke="#de5f5f" stroke-width="6.5" stroke-linecap="round" fill="none"/><path d="M859 722 Q856 722 845 731" stroke="#de5f5f" stroke-width="6.5" stroke-linecap="round" fill="none"/><path d="M612 493 Q617 489 617 477" stroke="#e86c6c" stroke-width="2" stroke-linecap="round" fill="none" opacity="0.8"/><path d="M611 512 Q599 508 597 509" stroke="#e86c6c" stroke-width="2" stroke-linecap="round" fill="none" opacity="0.8"/><path d="M612 535 Q618 533 629 535" stroke="#e86c6c" stroke-width="2" stroke-linecap="round" fill="none" opacity="0.8"/><path d="M608 567 Q609 557 602 551" stroke="#e86c6c" stroke-width="2" stroke-linecap="round" fill="none" opacity="0.8"/><path d="M606 589 Q606 594 600 599" stroke="#e86c6c" stroke-width="2" stroke-linecap="round" fill="none" opacity="0.8"/><path d="M613 614 Q620 616 629 616" stroke="#e86c6c" stroke-width="2" stroke-linecap="round" fill="none" opacity="0.8"/><path d="M615 639 Q612 647 608 650" stroke="#e86c6c" stroke-width="2" stroke-linecap="round" fill="none" opacity="0.8"/><path d="M607 657 Q599 656 594 646" stroke="#e86c6c" stroke-width="2" stroke-linecap="round" fill="none" opacity="0.8"/><path d="M613 688 Q620 692 618 696" stroke="#e86c6c" stroke-width="2" stroke-linecap="round" fill="none" opacity="0.8"/><path d="M607 711 Q617 709 620 714" stroke="#e86c6c" stroke-width="2" stroke-linecap="round" fill="none" opacity="0.8"/><path d="M619 494 Q623 504 616 507" stroke="#e86c6c" stroke-width="2" stroke-linecap="round" fill="none" opacity="0.8"/><path d="M622 511 Q620 519 609 524" stroke="#e86c6c" stroke-width="2" stroke-linecap="round" fill="none" opacity="0.8"/><path d="M622 542 Q624 537 624 527" stroke="#e86c6c" stroke-width="2" stroke-linecap="round" fill="none" opacity="0.8"/><path d="M621 567 Q612 562 613 556" stroke="#e86c6c" stroke-width="2" stroke-linecap="round" fill="none" opacity="0.8"/><path d="M621 588 Q619 584 620 572" stroke="#e86c6c" stroke-width="2" stroke-linecap="round" fill="none" opacity="0.8"/><path d="M620 614 Q628 614 632 609" stroke="#e86c6c" stroke-width="2" stroke-linecap="round" fill="none" opacity="0.8"/><path d="M624 638 Q614 628 614 626" stroke="#e86c6c" stroke-width="2" stroke-linecap="round" fill="none" opacity="0.8"/><path d="M623 656 Q626 655 632 660" stroke="#e86c6c" stroke-width="2" stroke-linecap="round" fill="none" opacity="0.8"/><path d="M620 687 Q624 686 633 687" stroke="#e86c6c" stroke-width="2" stroke-linecap="round" fill="none" opacity="0.8"/><path d="M623 705 Q619 700 608 697" stroke="#e86c6c" stroke-width="2" stroke-linecap="round" fill="none" opacity="0.8"/><path d="M640 496 Q639 487 630 488" stroke="#e86c6c" stroke-width="2" stroke-linecap="round" fill="none" opacity="0.8"/><path d="M634 514 Q639 519 635 526" stroke="#e86c6c" stroke-width="2" stroke-linecap="round" fill="none" opacity="0.8"/><path d="M634 537 Q639 536 648 536" stroke="#e86c6c" stroke-width="2" stroke-linecap="round" fill="none" opacity="0.8"/><path d="M630 563 Q632 569 628 581" stroke="#e86c6c" stroke-width="2" stroke-linecap="round" fill="none" opacity="0.8"/><path d="M636 588 Q639 581 636 578" stroke="#e86c6c" stroke-width="2" stroke-linecap="round" fill="none" opacity="0.8"/><path d="M637 612 Q642 617 648 614" stroke="#e86c6c" stroke-width="2" stroke-linecap="round" fill="none" opacity="0.8"/><path d="M637 636 Q627 636 620 638" stroke="#e86c6c" stroke-width="2" stroke-linecap="round" fill="none" opacity="0.8"/><path d="M637 658 Q639 663 633 674" stroke="#e86c6c" stroke-width="2" stroke-linecap="round" fill="none" opacity="0.8"/><path d="M638 679 Q642 688 640 695" stroke="#e86c6c" stroke-width="2" stroke-linecap="round" fill="none" opacity="0.8"/><path d="M638 704 Q635 694 628 690" stroke="#e86c6c" stroke-width="2" stroke-linecap="round" fill="none" opacity="0.8"/><path d="M648 486 Q649 486 658 494" stroke="#e86c6c" stroke-width="2" stroke-linecap="round" fill="none" opacity="0.8"/><path d="M648 515 Q649 515 659 510" stroke="#e86c6c" stroke-width="2" stroke-linecap="round" fill="none" opacity="0.8"/><path d="M645 540 Q645 544 644 555" stroke="#e86c6c" stroke-width="2" stroke-linecap="round" fill="none" opacity="0.8"/><path d="M643 565 Q648 565 651 570" stroke="#e86c6c" stroke-width="2" stroke-linecap="round" fill="none" opacity="0.8"/><path d="M643 584 Q647 577 657 579" stroke="#e86c6c" stroke-width="2" stroke-linecap="round" fill="none" opacity="0.8"/><path d="M644 609 Q639 602 635 601" stroke="#e86c6c" stroke-width="2" stroke-linecap="round" fill="none" opacity="0.8"/><path d="M648 636 Q644 625 647 623" stroke="#e86c6c" stroke-width="2" stroke-linecap="round" fill="none" opacity="0.8"/><path d="M647 663 Q642 655 637 654" stroke="#e86c6c" stroke-width="2" stroke-linecap="round" fill="none" opacity="0.8"/><path d="M645 681 Q645 686 651 691" stroke="#e86c6c" stroke-width="2" stroke-linecap="round" fill="none" opacity="0.8"/><path d="M647 711 Q650 718 658 722" stroke="#e86c6c" stroke-width="2" stroke-linecap="round" fill="none" opacity="0.8"/><path d="M658 496 Q654 498 650 505" stroke="#e86c6c" stroke-width="2" stroke-linecap="round" fill="none" opacity="0.8"/><path d="M660 514 Q661 516 669 513" stroke="#e86c6c" stroke-width="2" stroke-linecap="round" fill="none" opacity="0.8"/><path d="M655 535 Q665 526 666 527" stroke="#e86c6c" stroke-width="2" stroke-linecap="round" fill="none" opacity="0.8"/><path d="M657 559 Q662 561 674 563" stroke="#e86c6c" stroke-width="2" stroke-linecap="round" fill="none" opacity="0.8"/><path d="M663 588 Q662 584 670 579" stroke="#e86c6c" stroke-width="2" stroke-linecap="round" fill="none" opacity="0.8"/><path d="M657 610 Q656 604 662 601" stroke="#e86c6c" stroke-width="2" stroke-linecap="round" fill="none" opacity="0.8"/><path d="M656 631 Q648 630 644 637" stroke="#e86c6c" stroke-width="2" stroke-linecap="round" fill="none" opacity="0.8"/><path d="M658 657 Q662 652 658 643" stroke="#e86c6c" stroke-width="2" stroke-linecap="round" fill="none" opacity="0.8"/><path d="M661 685 Q659 689 659 701" stroke="#e86c6c" stroke-width="2" stroke-linecap="round" fill="none" opacity="0.8"/><path d="M662 708 Q663 707 671 709" stroke="#e86c6c" stroke-width="2" stroke-linecap="round" fill="none" opacity="0.8"/><path d="M669 486 Q664 478 655 478" stroke="#e86c6c" stroke-width="2" stroke-linecap="round" fill="none" opacity="0.8"/><path d="M667 513 Q672 509 678 506" stroke="#e86c6c" stroke-width="2" stroke-linecap="round" fill="none" opacity="0.8"/><path d="M674 538 Q678 542 691 544" stroke="#e86c6c" stroke-width="2" stroke-linecap="round" fill="none" opacity="0.8"/><path d="M672 562 Q670 553 672 550" stroke="#e86c6c" stroke-width="2" stroke-linecap="round" fill="none" opacity="0.8"/><path d="M674 587 Q675 590 685 589" stroke="#e86c6c" stroke-width="2" stroke-linecap="round" fill="none" opacity="0.8"/><path d="M672 614 Q669 618 666 620" stroke="#e86c6c" stroke-width="2" stroke-linecap="round" fill="none" opacity="0.8"/><path d="M671 637 Q667 647 656 648" stroke="#e86c6c" stroke-width="2" stroke-linecap="round" fill="none" opacity="0.8"/><path d="M673 659 Q668 663 671 669" stroke="#e86c6c" stroke-width="2" stroke-linecap="round" fill="none" opacity="0.8"/><path d="M673 679 Q678 675 673 664" stroke="#e86c6c" stroke-width="2" stroke-linecap="round" fill="none" opacity="0.8"/><path d="M675 704 Q681 698 689 702" stroke="#e86c6c" stroke-width="2" stroke-linecap="round" fill="none" opacity="0.8"/><path d="M682 487 Q681 479 677 474" stroke="#e86c6c" stroke-width="2" stroke-linecap="round" fill="none" opacity="0.8"/><path d="M680 516 Q676 512 681 505" stroke="#e86c6c" stroke-width="2" stroke-linecap="round" fill="none" opacity="0.8"/><path d="M687 537 Q690 541 684 551" stroke="#e86c6c" stroke-width="2" stroke-linecap="round" fill="none" opacity="0.8"/><path d="M684 564 Q677 557 678 550" stroke="#e86c6c" stroke-width="2" stroke-linecap="round" fill="none" opacity="0.8"/><path d="M680 589 Q680 580 687 578" stroke="#e86c6c" stroke-width="2" stroke-linecap="round" fill="none" opacity="0.8"/><path d="M685 614 Q692 611 690 600" stroke="#e86c6c" stroke-width="2" stroke-linecap="round" fill="none" opacity="0.8"/><path d="M682 635 Q674 627 675 620" stroke="#e86c6c" stroke-width="2" stroke-linecap="round" fill="none" opacity="0.8"/><path d="M683 664 Q690 664 692 660" stroke="#e86c6c" stroke-width="2" stroke-linecap="round" fill="none" opacity="0.8"/><path d="M682 681 Q677 682 667 681" stroke="#e86c6c" stroke-width="2" stroke-linecap="round" fill="none" opacity="0.8"/><path d="M680 709 Q681 711 691 714" stroke="#e86c6c" stroke-width="2" stroke-linecap="round" fill="none" opacity="0.8"/><path d="M698 486 Q694 477 699 474" stroke="#e86c6c" stroke-width="2" stroke-linecap="round" fill="none" opacity="0.8"/><path d="M694 515 Q704 520 704 521" stroke="#e86c6c" stroke-width="2" stroke-linecap="round" fill="none" opacity="0.8"/><path d="M699 540 Q691 540 693 533" stroke="#e86c6c" stroke-width="2" stroke-linecap="round" fill="none" opacity="0.8"/><path d="M698 567 Q702 578 707 580" stroke="#e86c6c" stroke-width="2" stroke-linecap="round" fill="none" opacity="0.8"/><path d="M697 583 Q696 588 703 595" stroke="#e86c6c" stroke-width="2" stroke-linecap="round" fill="none" opacity="0.8"/><path d="M696 607 Q701 611 697 625" stroke="#e86c6c" stroke-width="2" stroke-linecap="round" fill="none" opacity="0.8"/><path d="M692 635 Q695 630 707 633" stroke="#e86c6c" stroke-width="2" stroke-linecap="round" fill="none" opacity="0.8"/><path d="M692 660 Q694 663 691 674" stroke="#e86c6c" stroke-width="2" stroke-linecap="round" fill="none" opacity="0.8"/><path d="M696 686 Q698 687 709 691" stroke="#e86c6c" stroke-width="2" stroke-linecap="round" fill="none" opacity="0.8"/><path d="M694 707 Q696 704 690 690" stroke="#e86c6c" stroke-width="2" stroke-linecap="round" fill="none" opacity="0.8"/><path d="M707 490 Q713 491 718 485" stroke="#e86c6c" stroke-width="2" stroke-linecap="round" fill="none" opacity="0.8"/><path d="M703 511 Q704 513 697 519" stroke="#e86c6c" stroke-width="2" stroke-linecap="round" fill="none" opacity="0.8"/><path d="M706 540 Q710 545 706 552" stroke="#e86c6c" stroke-width="2" stroke-linecap="round" fill="none" opacity="0.8"/><path d="M702 558 Q709 548 708 546" stroke="#e86c6c" stroke-width="2" stroke-linecap="round" fill="none" opacity="0.8"/><path d="M711 583 Q714 582 725 589" stroke="#e86c6c" stroke-width="2" stroke-linecap="round" fill="none" opacity="0.8"/><path d="M710 607 Q709 597 711 596" stroke="#e86c6c" stroke-width="2" stroke-linecap="round" fill="none" opacity="0.8"/><path d="M705 639 Q705 640 707 649" stroke="#e86c6c" stroke-width="2" stroke-linecap="round" fill="none" opacity="0.8"/><path d="M709 658 Q698 652 693 651" stroke="#e86c6c" stroke-width="2" stroke-linecap="round" fill="none" opacity="0.8"/><path d="M710 686 Q706 690 707 696" stroke="#e86c6c" stroke-width="2" stroke-linecap="round" fill="none" opacity="0.8"/><path d="M710 705 Q719 711 721 714" stroke="#e86c6c" stroke-width="2" stroke-linecap="round" fill="none" opacity="0.8"/><path d="M718 489 Q724 491 726 495" stroke="#e86c6c" stroke-width="2" stroke-linecap="round" fill="none" opacity="0.8"/><path d="M723 515 Q725 514 733 523" stroke="#e86c6c" stroke-width="2" stroke-linecap="round" fill="none" opacity="0.8"/><path d="M719 535 Q720 526 720 525" stroke="#e86c6c" stroke-width="2" stroke-linecap="round" fill="none" opacity="0.8"/><path d="M718 560 Q709 561 701 559" stroke="#e86c6c" stroke-width="2" stroke-linecap="round" fill="none" opacity="0.8"/><path d="M723 587 Q716 590 707 593" stroke="#e86c6c" stroke-width="2" stroke-linecap="round" fill="none" opacity="0.8"/><path d="M715 608 Q709 606 710 593" stroke="#e86c6c" stroke-width="2" stroke-linecap="round" fill="none" opacity="0.8"/><path d="M716 637 Q719 640 727 646" stroke="#e86c6c" stroke-width="2" stroke-linecap="round" fill="none" opacity="0.8"/><path d="M720 659 Q724 651 733 647" stroke="#e86c6c" stroke-width="2" stroke-linecap="round" fill="none" opacity="0.8"/><path d="M721 686 Q724 679 719 677" stroke="#e86c6c" stroke-width="2" stroke-linecap="round" fill="none" opacity="0.8"/><path d="M721 707 Q723 697 718 693" stroke="#e86c6c" stroke-width="2" stroke-linecap="round" fill="none" opacity="0.8"/><path d="M731 491 Q740 498 739 498" stroke="#e86c6c" stroke-width="2" stroke-linecap="round" fill="none" opacity="0.8"/><path d="M729 510 Q727 504 721 498" stroke="#e86c6c" stroke-width="2" stroke-linecap="round" fill="none" opacity="0.8"/><path d="M730 541 Q739 539 741 545" stroke="#e86c6c" stroke-width="2" stroke-linecap="round" fill="none" opacity="0.8"/><path d="M734 563 Q732 565 725 562" stroke="#e86c6c" stroke-width="2" stroke-linecap="round" fill="none" opacity="0.8"/><path d="M726 591 Q727 589 737 590" stroke="#e86c6c" stroke-width="2" stroke-linecap="round" fill="none" opacity="0.8"/><path d="M729 613 Q730 621 721 620" stroke="#e86c6c" stroke-width="2" stroke-linecap="round" fill="none" opacity="0.8"/><path d="M731 638 Q729 632 725 622" stroke="#e86c6c" stroke-width="2" stroke-linecap="round" fill="none" opacity="0.8"/><path d="M735 661 Q728 661 725 665" stroke="#e86c6c" stroke-width="2" stroke-linecap="round" fill="none" opacity="0.8"/><path d="M727 684 Q721 683 720 692" stroke="#e86c6c" stroke-width="2" stroke-linecap="round" fill="none" opacity="0.8"/><path d="M734 705 Q735 698 743 701" stroke="#e86c6c" stroke-width="2" stroke-linecap="round" fill="none" opacity="0.8"/><path d="M747 492 Q741 490 737 490" stroke="#e86c6c" stroke-width="2" stroke-linecap="round" fill="none" opacity="0.8"/><path d="M740 517 Q738 513 732 511" stroke="#e86c6c" stroke-width="2" stroke-linecap="round" fill="none" opacity="0.8"/><path d="M743 535 Q739 524 732 521" stroke="#e86c6c" stroke-width="2" stroke-linecap="round" fill="none" opacity="0.8"/><path d="M739 565 Q735 569 739 576" stroke="#e86c6c" stroke-width="2" stroke-linecap="round" fill="none" opacity="0.8"/><path d="M741 584 Q735 582 736 572" stroke="#e86c6c" stroke-width="2" stroke-linecap="round" fill="none" opacity="0.8"/><path d="M741 609 Q742 603 747 596" stroke="#e86c6c" stroke-width="2" stroke-linecap="round" fill="none" opacity="0.8"/><path d="M742 631 Q732 633 727 638" stroke="#e86c6c" stroke-width="2" stroke-linecap="round" fill="none" opacity="0.8"/><path d="M739 662 Q739 660 747 656" stroke="#e86c6c" stroke-width="2" stroke-linecap="round" fill="none" opacity="0.8"/><path d="M745 683 Q751 680 755 670" stroke="#e86c6c" stroke-width="2" stroke-linecap="round" fill="none" opacity="0.8"/><path d="M742 710 Q749 710 758 704" stroke="#e86c6c" stroke-width="2" stroke-linecap="round" fill="none" opacity="0.8"/><path d="M752 490 Q755 489 763 485" stroke="#e86c6c" stroke-width="2" stroke-linecap="round" fill="none" opacity="0.8"/><path d="M757 512 Q750 516 742 512" stroke="#e86c6c" stroke-width="2" stroke-linecap="round" fill="none" opacity="0.8"/><path d="M750 539 Q745 543 748 553" stroke="#e86c6c" stroke-width="2" stroke-linecap="round" fill="none" opacity="0.8"/><path d="M752 568 Q745 569 748 578" stroke="#e86c6c" stroke-width="2" stroke-linecap="round" fill="none" opacity="0.8"/><path d="M752 585 Q759 587 761 589" stroke="#e86c6c" stroke-width="2" stroke-linecap="round" fill="none" opacity="0.8"/><path d="M759 612 Q752 612 749 621" stroke="#e86c6c" stroke-width="2" stroke-linecap="round" fill="none" opacity="0.8"/><path d="M760 635 Q765 626 768 621" stroke="#e86c6c" stroke-width="2" stroke-linecap="round" fill="none" opacity="0.8"/><path d="M751 654 Q742 649 742 648" stroke="#e86c6c" stroke-width="2" stroke-linecap="round" fill="none" opacity="0.8"/><path d="M752 687 Q759 694 763 697" stroke="#e86c6c" stroke-width="2" stroke-linecap="round" fill="none" opacity="0.8"/><path d="M755 707 Q760 712 768 716" stroke="#e86c6c" stroke-width="2" stroke-linecap="round" fill="none" opacity="0.8"/><path d="M765 489 Q759 486 751 491" stroke="#e86c6c" stroke-width="2" stroke-linecap="round" fill="none" opacity="0.8"/><path d="M767 513 Q769 513 778 515" stroke="#e86c6c" stroke-width="2" stroke-linecap="round" fill="none" opacity="0.8"/><path d="M764 537 Q767 533 775 529" stroke="#e86c6c" stroke-width="2" stroke-linecap="round" fill="none" opacity="0.8"/><path d="M770 568 Q766 566 763 561" stroke="#e86c6c" stroke-width="2" stroke-linecap="round" fill="none" opacity="0.8"/><path d="M771 589 Q767 583 767 574" stroke="#e86c6c" stroke-width="2" stroke-linecap="round" fill="none" opacity="0.8"/><path d="M769 614 Q760 616 752 617" stroke="#e86c6c" stroke-width="2" stroke-linecap="round" fill="none" opacity="0.8"/><path d="M769 635 Q767 627 773 619" stroke="#e86c6c" stroke-width="2" stroke-linecap="round" fill="none" opacity="0.8"/><path d="M766 663 Q772 663 781 658" stroke="#e86c6c" stroke-width="2" stroke-linecap="round" fill="none" opacity="0.8"/><path d="M767 683 Q759 682 759 671" stroke="#e86c6c" stroke-width="2" stroke-linecap="round" fill="none" opacity="0.8"/><path d="M765 710 Q766 722 766 725" stroke="#e86c6c" stroke-width="2" stroke-linecap="round" fill="none" opacity="0.8"/><path d="M775 489 Q775 478 778 472" stroke="#e86c6c" stroke-width="2" stroke-linecap="round" fill="none" opacity="0.8"/><path d="M775 518 Q783 522 786 526" stroke="#e86c6c" stroke-width="2" stroke-linecap="round" fill="none" opacity="0.8"/><path d="M774 537 Q784 539 789 536" stroke="#e86c6c" stroke-width="2" stroke-linecap="round" fill="none" opacity="0.8"/><path d="M784 564 Q782 568 781 573" stroke="#e86c6c" stroke-width="2" stroke-linecap="round" fill="none" opacity="0.8"/><path d="M776 586 Q786 591 785 593" stroke="#e86c6c" stroke-width="2" stroke-linecap="round" fill="none" opacity="0.8"/><path d="M774 607 Q772 608 767 612" stroke="#e86c6c" stroke-width="2" stroke-linecap="round" fill="none" opacity="0.8"/><path d="M775 631 Q778 628 786 622" stroke="#e86c6c" stroke-width="2" stroke-linecap="round" fill="none" opacity="0.8"/><path d="M782 660 Q779 666 785 671" stroke="#e86c6c" stroke-width="2" stroke-linecap="round" fill="none" opacity="0.8"/><path d="M775 687 Q784 680 784 677" stroke="#e86c6c" stroke-width="2" stroke-linecap="round" fill="none" opacity="0.8"/><path d="M775 705 Q772 693 765 691" stroke="#e86c6c" stroke-width="2" stroke-linecap="round" fill="none" opacity="0.8"/><path d="M789 490 Q798 492 802 485" stroke="#e86c6c" stroke-width="2" stroke-linecap="round" fill="none" opacity="0.8"/><path d="M792 515 Q788 506 790 502" stroke="#e86c6c" stroke-width="2" stroke-linecap="round" fill="none" opacity="0.8"/><path d="M789 542 Q787 546 778 542" stroke="#e86c6c" stroke-width="2" stroke-linecap="round" fill="none" opacity="0.8"/><path d="M789 564 Q784 564 776 564" stroke="#e86c6c" stroke-width="2" stroke-linecap="round" fill="none" opacity="0.8"/><path d="M794 589 Q793 590 798 601" stroke="#e86c6c" stroke-width="2" stroke-linecap="round" fill="none" opacity="0.8"/><path d="M790 610 Q788 600 782 595" stroke="#e86c6c" stroke-width="2" stroke-linecap="round" fill="none" opacity="0.8"/><path d="M792 637 Q795 645 803 650" stroke="#e86c6c" stroke-width="2" stroke-linecap="round" fill="none" opacity="0.8"/><path d="M791 660 Q783 651 784 650" stroke="#e86c6c" stroke-width="2" stroke-linecap="round" fill="none" opacity="0.8"/><path d="M791 682 Q787 684 779 684" stroke="#e86c6c" stroke-width="2" stroke-linecap="round" fill="none" opacity="0.8"/><path d="M792 703 Q796 705 802 715" stroke="#e86c6c" stroke-width="2" stroke-linecap="round" fill="none" opacity="0.8"/><path d="M800 493 Q793 488 796 482" stroke="#e86c6c" stroke-width="2" stroke-linecap="round" fill="none" opacity="0.8"/><path d="M804 513 Q806 524 806 527" stroke="#e86c6c" stroke-width="2" stroke-linecap="round" fill="none" opacity="0.8"/><path d="M805 538 Q809 541 815 540" stroke="#e86c6c" stroke-width="2" stroke-linecap="round" fill="none" opacity="0.8"/><path d="M805 562 Q809 563 812 556" stroke="#e86c6c" stroke-width="2" stroke-linecap="round" fill="none" opacity="0.8"/><path d="M805 588 Q810 584 817 588" stroke="#e86c6c" stroke-width="2" stroke-linecap="round" fill="none" opacity="0.8"/><path d="M803 614 Q799 623 797 623" stroke="#e86c6c" stroke-width="2" stroke-linecap="round" fill="none" opacity="0.8"/><path d="M807 636 Q813 644 810 650" stroke="#e86c6c" stroke-width="2" stroke-linecap="round" fill="none" opacity="0.8"/><path d="M801 659 Q809 660 813 665" stroke="#e86c6c" stroke-width="2" stroke-linecap="round" fill="none" opacity="0.8"/><path d="M806 679 Q816 680 819 690" stroke="#e86c6c" stroke-width="2" stroke-linecap="round" fill="none" opacity="0.8"/><path d="M806 709 Q799 715 794 711" stroke="#e86c6c" stroke-width="2" stroke-linecap="round" fill="none" opacity="0.8"/><path d="M817 490 Q808 492 802 492" stroke="#e86c6c" stroke-width="2" stroke-linecap="round" fill="none" opacity="0.8"/><path d="M819 513 Q815 522 814 521" stroke="#e86c6c" stroke-width="2" stroke-linecap="round" fill="none" opacity="0.8"/><path d="M812 536 Q811 541 806 546" stroke="#e86c6c" stroke-width="2" stroke-linecap="round" fill="none" opacity="0.8"/><path d="M815 561 Q820 559 817 549" stroke="#e86c6c" stroke-width="2" stroke-linecap="round" fill="none" opacity="0.8"/><path d="M815 585 Q820 581 816 572" stroke="#e86c6c" stroke-width="2" stroke-linecap="round" fill="none" opacity="0.8"/><path d="M810 611 Q819 607 824 600" stroke="#e86c6c" stroke-width="2" stroke-linecap="round" fill="none" opacity="0.8"/><path d="M816 636 Q813 647 810 650" stroke="#e86c6c" stroke-width="2" stroke-linecap="round" fill="none" opacity="0.8"/><path d="M818 660 Q816 661 818 669" stroke="#e86c6c" stroke-width="2" stroke-linecap="round" fill="none" opacity="0.8"/><path d="M818 685 Q826 677 830 674" stroke="#e86c6c" stroke-width="2" stroke-linecap="round" fill="none" opacity="0.8"/><path d="M816 703 Q821 707 820 717" stroke="#e86c6c" stroke-width="2" stroke-linecap="round" fill="none" opacity="0.8"/><path d="M825 489 Q818 485 814 489" stroke="#e86c6c" stroke-width="2" stroke-linecap="round" fill="none" opacity="0.8"/><path d="M828 512 Q818 510 815 508" stroke="#e86c6c" stroke-width="2" stroke-linecap="round" fill="none" opacity="0.8"/><path d="M825 539 Q823 541 813 547" stroke="#e86c6c" stroke-width="2" stroke-linecap="round" fill="none" opacity="0.8"/><path d="M823 565 Q823 569 823 578" stroke="#e86c6c" stroke-width="2" stroke-linecap="round" fill="none" opacity="0.8"/><path d="M824 590 Q831 588 835 589" stroke="#e86c6c" stroke-width="2" stroke-linecap="round" fill="none" opacity="0.8"/><path d="M829 608 Q841 614 844 617" stroke="#e86c6c" stroke-width="2" stroke-linecap="round" fill="none" opacity="0.8"/><path d="M828 639 Q820 644 819 639" stroke="#e86c6c" stroke-width="2" stroke-linecap="round" fill="none" opacity="0.8"/><path d="M827 656 Q830 648 828 640" stroke="#e86c6c" stroke-width="2" stroke-linecap="round" fill="none" opacity="0.8"/><path d="M830 679 Q825 676 822 665" stroke="#e86c6c" stroke-width="2" stroke-linecap="round" fill="none" opacity="0.8"/><path d="M831 708 Q838 704 839 701" stroke="#e86c6c" stroke-width="2" stroke-linecap="round" fill="none" opacity="0.8"/><path d="M841 496 Q838 500 834 508" stroke="#e86c6c" stroke-width="2" stroke-linecap="round" fill="none" opacity="0.8"/><path d="M838 517 Q831 526 826 528" stroke="#e86c6c" stroke-width="2" stroke-linecap="round" fill="none" opacity="0.8"/><path d="M838 536 Q842 529 850 525" stroke="#e86c6c" stroke-width="2" stroke-linecap="round" fill="none" opacity="0.8"/><path d="M840 561 Q849 554 855 552" stroke="#e86c6c" stroke-width="2" stroke-linecap="round" fill="none" opacity="0.8"/><path d="M841 590 Q837 598 835 598" stroke="#e86c6c" stroke-width="2" stroke-linecap="round" fill="none" opacity="0.8"/><path d="M835 606 Q830 614 827 619" stroke="#e86c6c" stroke-width="2" stroke-linecap="round" fill="none" opacity="0.8"/><path d="M835 632 Q839 628 838 619" stroke="#e86c6c" stroke-width="2" stroke-linecap="round" fill="none" opacity="0.8"/><path d="M837 658 Q836 657 836 646" stroke="#e86c6c" stroke-width="2" stroke-linecap="round" fill="none" opacity="0.8"/><path d="M838 680 Q848 676 851 673" stroke="#e86c6c" stroke-width="2" stroke-linecap="round" fill="none" opacity="0.8"/><path d="M842 712 Q845 705 844 698" stroke="#e86c6c" stroke-width="2" stroke-linecap="round" fill="none" opacity="0.8"/><path d="M856 492 Q851 494 843 493" stroke="#e86c6c" stroke-width="2" stroke-linecap="round" fill="none" opacity="0.8"/><path d="M848 515 Q852 518 847 526" stroke="#e86c6c" stroke-width="2" stroke-linecap="round" fill="none" opacity="0.8"/><path d="M853 538 Q850 537 845 531" stroke="#e86c6c" stroke-width="2" stroke-linecap="round" fill="none" opacity="0.8"/><path d="M847 559 Q855 559 861 555" stroke="#e86c6c" stroke-width="2" stroke-linecap="round" fill="none" opacity="0.8"/><path d="M848 590 Q846 583 840 581" stroke="#e86c6c" stroke-width="2" stroke-linecap="round" fill="none" opacity="0.8"/><path d="M854 609 Q853 602 852 599" stroke="#e86c6c" stroke-width="2" stroke-linecap="round" fill="none" opacity="0.8"/><path d="M849 631 Q854 636 867 634" stroke="#e86c6c" stroke-width="2" stroke-linecap="round" fill="none" opacity="0.8"/><path d="M846 657 Q841 648 842 641" stroke="#e86c6c" stroke-width="2" stroke-linecap="round" fill="none" opacity="0.8"/><path d="M853 687 Q849 682 845 680" stroke="#e86c6c" stroke-width="2" stroke-linecap="round" fill="none" opacity="0.8"/><path d="M851 704 Q845 698 846 694" stroke="#e86c6c" stroke-width="2" stroke-linecap="round" fill="none" opacity="0.8"/><path d="M863 493 Q857 491 850 493" stroke="#e86c6c" stroke-width="2" stroke-linecap="round" fill="none" opacity="0.8"/><path d="M863 515 Q868 518 873 516" stroke="#e86c6c" stroke-width="2" stroke-linecap="round" fill="none" opacity="0.8"/><path d="M859 542 Q858 552 864 553" stroke="#e86c6c" stroke-width="2" stroke-linecap="round" fill="none" opacity="0.8"/><path d="M863 564 Q858 566 847 562" stroke="#e86c6c" stroke-width="2" stroke-linecap="round" fill="none" opacity="0.8"/><path d="M865 590 Q863 585 864 575" stroke="#e86c6c" stroke-width="2" stroke-linecap="round" fill="none" opacity="0.8"/><path d="M866 611 Q866 603 866 594" stroke="#e86c6c" stroke-width="2" stroke-linecap="round" fill="none" opacity="0.8"/><path d="M863 631 Q855 636 852 635" stroke="#e86c6c" stroke-width="2" stroke-linecap="round" fill="none" opacity="0.8"/><path d="M862 656 Q862 662 852 665" stroke="#e86c6c" stroke-width="2" stroke-linecap="round" fill="none" opacity="0.8"/><path d="M862 680 Q859 672 861 668" stroke="#e86c6c" stroke-width="2" stroke-linecap="round" fill="none" opacity="0.8"/><path d="M859 708 Q862 704 871 707" stroke="#e86c6c" stroke-width="2" stroke-linecap="round" fill="none" opacity="0.8"/></g></svg>
<svg class="a" style="left:1012px;top:425px" width="38" height="215" viewBox="1012 425 38 215"><defs><linearGradient id="cg" x1="0" y1="0" x2="1" y2="1"><stop offset="0" stop-color="#e8e8e8"/><stop offset="1" stop-color="#909090"/></linearGradient><radialGradient id="sg" cx="0.35" cy="0.35" r="0.7"><stop offset="0" stop-color="#f0f0f0"/><stop offset="1" stop-color="#8a8a8a"/></radialGradient><pattern id="chk" width="2" height="2" patternUnits="userSpaceOnUse"><rect width="2" height="2" fill="#f4f4f4"/><rect width="1" height="1" fill="#dcdcdc"/></pattern></defs><ellipse cx="1027" cy="438" rx="7" ry="7" fill="url(#sg)" stroke="#555" stroke-width="0.8"/><path d="M1024 438 L1030 435 L1037 438 L1037 447 L1030 452 L1024 447 Z" fill="#cfcfcf" stroke="#444" stroke-width="0.8"/><path d="M1024 438 L1030 441 L1037 438 M1030 441 V452" stroke="#444" stroke-width="0.8" fill="none"/><path d="M1033 440 L1041 447 L1038 447.5 L1040.5 452 L1038.5 452.8 L1036.5 448.3 L1034 450 Z" fill="#000"/><rect x="1015.5" y="457.5" width="29" height="28.5" fill="url(#chk)" stroke="#a0a0a0" stroke-width="1"/><path d="M1015.5 486 V457.5 H1044.5" stroke="#808080" stroke-width="1" fill="none"/><circle cx="1030" cy="472" r="8.5" fill="url(#sg)" stroke="#555" stroke-width="0.8"/><path d="M1030 462 L1033 466 L1031.2 466 L1031.2 471 L1036 471 L1036 469 L1041 473 L1036 477 L1036 475 L1031.2 475 L1031.2 480 L1033 480 L1030 485 L1027 480 L1028.8 480 L1028.8 475 L1024 475 L1024 477 L1019.5 473 L1024 469 L1024 471 L1028.8 471 L1028.8 466 L1027 466 Z" fill="#d8282a" stroke="#8a1010" stroke-width="0.5"/><path d="M1019.3 497.6 L1027.7 502.6 L1028.1 508.3 L1019.3 501.8 Z" fill="#d4d4d4" stroke="#333" stroke-width="0.7" stroke-linejoin="round"/><path d="M1027.7 502.6 L1032.7 494.1 L1036.6 498.4 L1036.6 503.3 L1028.1 508.3 Z" fill="#e8e8e8" stroke="#333" stroke-width="0.7" stroke-linejoin="round"/><path d="M1019.3 497.6 L1025.4 491.5 L1032.7 494.1 L1027.7 502.6 Z" fill="#a8a8a8" stroke="#333" stroke-width="0.7" stroke-linejoin="round"/><rect x="1031.4" y="500.5" width="1.6" height="5.5" fill="#666"/><path d="M1032.3 504.1 L1039.5 504.1 L1038 506.2 L1041.8 510.2 L1039.6 512.6 L1035.8 508.6 L1033.8 511.6 Z" fill="#e00000" stroke="#000" stroke-width="0.9" stroke-linejoin="round"/><path d="M1021.0 526.4 L1029.4 531.4 L1029.8 537.1 L1021.0 530.6 Z" fill="#d4d4d4" stroke="#333" stroke-width="0.7" stroke-linejoin="round"/><path d="M1029.4 531.4 L1034.4 522.9 L1038.3 527.2 L1038.3 532.1 L1029.8 537.1 Z" fill="#e8e8e8" stroke="#333" stroke-width="0.7" stroke-linejoin="round"/><path d="M1021.0 526.4 L1027.1 520.3 L1034.4 522.9 L1029.4 531.4 Z" fill="#a8a8a8" stroke="#333" stroke-width="0.7" stroke-linejoin="round"/><rect x="1033.1" y="529.3" width="1.6" height="5.5" fill="#666"/><path d="M1023.9 537 L1035.8 537 L1029.9 543.6 Z" fill="#e00000" stroke="#000" stroke-width="0.7" stroke-linejoin="round"/><rect x="1018.5" y="550.5" width="23" height="23" fill="none" stroke="#666" stroke-width="1.2" stroke-dasharray="3 2.5"/><circle cx="1028" cy="559" r="6.5" fill="url(#sg)" stroke="#555" stroke-width="0.6"/><path d="M1025 558 L1031 555 L1038 558 L1038 567 L1031 571.5 L1025 567 Z" fill="#c8c8c8" stroke="#555" stroke-width="0.6"/><circle cx="1029.6" cy="591.5" r="8" fill="none" stroke="#000" stroke-width="1.2"/><path d="M1029.6 581 V587.5 M1029.6 595.5 V602 M1019 591.5 H1025.5 M1033.7 591.5 H1040" stroke="#000" stroke-width="1.4"/><rect x="1028.3" y="581.5" width="2.6" height="2.6" fill="#000"/><rect x="1028.3" y="599" width="2.6" height="2.6" fill="#000"/><rect x="1019.6" y="590.2" width="2.6" height="2.6" fill="#000"/><rect x="1037.2" y="590.2" width="2.6" height="2.6" fill="#000"/><path d="M1021 614 L1030 610 L1040 614 L1040 623 L1030.5 633 L1021 623 Z" fill="#9a9a9a" stroke="#666" stroke-width="0.6"/><path d="M1021 614 L1030.5 617 L1040 614 L1030 610 Z" fill="#c4c4c4"/><path d="M1030.5 617 L1040 614 L1040 623 L1030.5 633 Z" fill="#7a7a7a"/></svg>
<svg class="a" style="left:447px;top:673px" width="20" height="126"><rect x="0.5" y="0.5" width="19" height="125" fill="#f0f0f0" stroke="#fff" stroke-width="1"/><path d="M0.5 125.5 V0.5 H19.5" stroke="#a0a0a0" stroke-width="1" fill="none"/><defs><linearGradient id="wg447_673" x1="0" y1="0" x2="0" y2="1"><stop offset="0" stop-color="#333"/><stop offset="0.22" stop-color="#808080"/><stop offset="0.5" stop-color="#ababab"/><stop offset="0.78" stop-color="#808080"/><stop offset="1" stop-color="#333"/></linearGradient><linearGradient id="wg447_673s" x1="0" y1="0" x2="1" y2="0"><stop offset="0" stop-color="#000" stop-opacity="0.45"/><stop offset="0.2" stop-color="#000" stop-opacity="0"/><stop offset="0.8" stop-color="#000" stop-opacity="0"/><stop offset="1" stop-color="#000" stop-opacity="0.45"/></linearGradient></defs><rect x="2" y="2" width="16" height="122" fill="#111"/><rect x="3" y="3" width="14" height="120" fill="url(#wg447_673)"/><rect x="4" y="3.1" width="12" height="1" fill="rgb(32,32,32)"/><rect x="4" y="4.1" width="12" height="0.5" fill="rgb(90,90,90)"/><rect x="4" y="4.2" width="12" height="1" fill="rgb(37,37,37)"/><rect x="4" y="5.2" width="12" height="0.5" fill="rgb(91,91,91)"/><rect x="4" y="6.2" width="12" height="1" fill="rgb(42,42,42)"/><rect x="4" y="7.2" width="12" height="0.5" fill="rgb(95,95,95)"/><rect x="4" y="9.2" width="12" height="1" fill="rgb(47,47,47)"/><rect x="4" y="10.2" width="12" height="0.6" fill="rgb(104,104,104)"/><rect x="4" y="13.1" width="12" height="1" fill="rgb(52,52,52)"/><rect x="4" y="14.1" width="12" height="0.7" fill="rgb(118,118,118)"/><rect x="4" y="17.9" width="12" height="1" fill="rgb(56,56,56)"/><rect x="4" y="18.9" width="12" height="0.9" fill="rgb(137,137,137)"/><rect x="4" y="23.4" width="12" height="1" fill="rgb(60,60,60)"/><rect x="4" y="24.4" width="12" height="1.0" fill="rgb(160,160,160)"/><rect x="4" y="29.7" width="12" height="1" fill="rgb(63,63,63)"/><rect x="4" y="30.7" width="12" height="1.1" fill="rgb(184,184,184)"/><rect x="4" y="36.5" width="12" height="1" fill="rgb(65,65,65)"/><rect x="4" y="37.5" width="12" height="1.2" fill="rgb(209,209,209)"/><rect x="4" y="43.7" width="12" height="1" fill="rgb(67,67,67)"/><rect x="4" y="44.7" width="12" height="1.2" fill="rgb(230,230,230)"/><rect x="4" y="51.3" width="12" height="1" fill="rgb(69,69,69)"/><rect x="4" y="52.3" width="12" height="1.3" fill="rgb(245,245,245)"/><rect x="4" y="59.1" width="12" height="1" fill="rgb(69,69,69)"/><rect x="4" y="60.1" width="12" height="1.3" fill="rgb(253,253,253)"/><rect x="4" y="66.9" width="12" height="1" fill="rgb(69,69,69)"/><rect x="4" y="67.9" width="12" height="1.3" fill="rgb(253,253,253)"/><rect x="4" y="74.7" width="12" height="1" fill="rgb(69,69,69)"/><rect x="4" y="75.7" width="12" height="1.3" fill="rgb(245,245,245)"/><rect x="4" y="82.3" width="12" height="1" fill="rgb(67,67,67)"/><rect x="4" y="83.3" width="12" height="1.2" fill="rgb(230,230,230)"/><rect x="4" y="89.5" width="12" height="1" fill="rgb(65,65,65)"/><rect x="4" y="90.5" width="12" height="1.2" fill="rgb(209,209,209)"/><rect x="4" y="96.3" width="12" height="1" fill="rgb(63,63,63)"/><rect x="4" y="97.3" width="12" height="1.1" fill="rgb(184,184,184)"/><rect x="4" y="102.6" width="12" height="1" fill="rgb(60,60,60)"/><rect x="4" y="103.6" width="12" height="1.0" fill="rgb(160,160,160)"/><rect x="4" y="108.1" width="12" height="1" fill="rgb(56,56,56)"/><rect x="4" y="109.1" width="12" height="0.9" fill="rgb(137,137,137)"/><rect x="4" y="112.9" width="12" height="1" fill="rgb(52,52,52)"/><rect x="4" y="113.9" width="12" height="0.7" fill="rgb(118,118,118)"/><rect x="4" y="116.8" width="12" height="1" fill="rgb(47,47,47)"/><rect x="4" y="117.8" width="12" height="0.6" fill="rgb(104,104,104)"/><rect x="4" y="119.8" width="12" height="1" fill="rgb(42,42,42)"/><rect x="4" y="120.8" width="12" height="0.5" fill="rgb(95,95,95)"/><rect x="4" y="121.8" width="12" height="1" fill="rgb(37,37,37)"/><rect x="4" y="122.8" width="12" height="0.5" fill="rgb(91,91,91)"/><rect x="4" y="122.9" width="12" height="1" fill="rgb(32,32,32)"/><rect x="4" y="123.9" width="12" height="0.5" fill="rgb(90,90,90)"/><rect x="3" y="3" width="14" height="120" fill="url(#wg447_673s)"/></svg>
<svg class="a" style="left:1020px;top:673px" width="20" height="126"><rect x="0.5" y="0.5" width="19" height="125" fill="#f0f0f0" stroke="#fff" stroke-width="1"/><path d="M0.5 125.5 V0.5 H19.5" stroke="#a0a0a0" stroke-width="1" fill="none"/><defs><linearGradient id="wg1020_673" x1="0" y1="0" x2="0" y2="1"><stop offset="0" stop-color="#333"/><stop offset="0.22" stop-color="#808080"/><stop offset="0.5" stop-color="#ababab"/><stop offset="0.78" stop-color="#808080"/><stop offset="1" stop-color="#333"/></linearGradient><linearGradient id="wg1020_673s" x1="0" y1="0" x2="1" y2="0"><stop offset="0" stop-color="#000" stop-opacity="0.45"/><stop offset="0.2" stop-color="#000" stop-opacity="0"/><stop offset="0.8" stop-color="#000" stop-opacity="0"/><stop offset="1" stop-color="#000" stop-opacity="0.45"/></linearGradient></defs><rect x="2" y="2" width="16" height="122" fill="#111"/><rect x="3" y="3" width="14" height="120" fill="url(#wg1020_673)"/><rect x="4" y="3.1" width="12" height="1" fill="rgb(32,32,32)"/><rect x="4" y="4.1" width="12" height="0.5" fill="rgb(90,90,90)"/><rect x="4" y="4.2" width="12" height="1" fill="rgb(37,37,37)"/><rect x="4" y="5.2" width="12" height="0.5" fill="rgb(91,91,91)"/><rect x="4" y="6.2" width="12" height="1" fill="rgb(42,42,42)"/><rect x="4" y="7.2" width="12" height="0.5" fill="rgb(95,95,95)"/><rect x="4" y="9.2" width="12" height="1" fill="rgb(47,47,47)"/><rect x="4" y="10.2" width="12" height="0.6" fill="rgb(104,104,104)"/><rect x="4" y="13.1" width="12" height="1" fill="rgb(52,52,52)"/><rect x="4" y="14.1" width="12" height="0.7" fill="rgb(118,118,118)"/><rect x="4" y="17.9" width="12" height="1" fill="rgb(56,56,56)"/><rect x="4" y="18.9" width="12" height="0.9" fill="rgb(137,137,137)"/><rect x="4" y="23.4" width="12" height="1" fill="rgb(60,60,60)"/><rect x="4" y="24.4" width="12" height="1.0" fill="rgb(160,160,160)"/><rect x="4" y="29.7" width="12" height="1" fill="rgb(63,63,63)"/><rect x="4" y="30.7" width="12" height="1.1" fill="rgb(184,184,184)"/><rect x="4" y="36.5" width="12" height="1" fill="rgb(65,65,65)"/><rect x="4" y="37.5" width="12" height="1.2" fill="rgb(209,209,209)"/><rect x="4" y="43.7" width="12" height="1" fill="rgb(67,67,67)"/><rect x="4" y="44.7" width="12" height="1.2" fill="rgb(230,230,230)"/><rect x="4" y="51.3" width="12" height="1" fill="rgb(69,69,69)"/><rect x="4" y="52.3" width="12" height="1.3" fill="rgb(245,245,245)"/><rect x="4" y="59.1" width="12" height="1" fill="rgb(69,69,69)"/><rect x="4" y="60.1" width="12" height="1.3" fill="rgb(253,253,253)"/><rect x="4" y="66.9" width="12" height="1" fill="rgb(69,69,69)"/><rect x="4" y="67.9" width="12" height="1.3" fill="rgb(253,253,253)"/><rect x="4" y="74.7" width="12" height="1" fill="rgb(69,69,69)"/><rect x="4" y="75.7" width="12" height="1.3" fill="rgb(245,245,245)"/><rect x="4" y="82.3" width="12" height="1" fill="rgb(67,67,67)"/><rect x="4" y="83.3" width="12" height="1.2" fill="rgb(230,230,230)"/><rect x="4" y="89.5" width="12" height="1" fill="rgb(65,65,65)"/><rect x="4" y="90.5" width="12" height="1.2" fill="rgb(209,209,209)"/><rect x="4" y="96.3" width="12" height="1" fill="rgb(63,63,63)"/><rect x="4" y="97.3" width="12" height="1.1" fill="rgb(184,184,184)"/><rect x="4" y="102.6" width="12" height="1" fill="rgb(60,60,60)"/><rect x="4" y="103.6" width="12" height="1.0" fill="rgb(160,160,160)"/><rect x="4" y="108.1" width="12" height="1" fill="rgb(56,56,56)"/><rect x="4" y="109.1" width="12" height="0.9" fill="rgb(137,137,137)"/><rect x="4" y="112.9" width="12" height="1" fill="rgb(52,52,52)"/><rect x="4" y="113.9" width="12" height="0.7" fill="rgb(118,118,118)"/><rect x="4" y="116.8" width="12" height="1" fill="rgb(47,47,47)"/><rect x="4" y="117.8" width="12" height="0.6" fill="rgb(104,104,104)"/><rect x="4" y="119.8" width="12" height="1" fill="rgb(42,42,42)"/><rect x="4" y="120.8" width="12" height="0.5" fill="rgb(95,95,95)"/><rect x="4" y="121.8" width="12" height="1" fill="rgb(37,37,37)"/><rect x="4" y="122.8" width="12" height="0.5" fill="rgb(91,91,91)"/><rect x="4" y="122.9" width="12" height="1" fill="rgb(32,32,32)"/><rect x="4" y="123.9" width="12" height="0.5" fill="rgb(90,90,90)"/><rect x="3" y="3" width="14" height="120" fill="url(#wg1020_673s)"/></svg>
<svg class="a" style="left:511px;top:807px" width="126" height="19"><rect x="0.5" y="0.5" width="125" height="18" fill="#f0f0f0" stroke="#fff" stroke-width="1"/><path d="M0.5 18.5 V0.5 H125.5" stroke="#a0a0a0" stroke-width="1" fill="none"/><defs><linearGradient id="wg511_807" x1="0" y1="0" x2="1" y2="0"><stop offset="0" stop-color="#333"/><stop offset="0.22" stop-color="#808080"/><stop offset="0.5" stop-color="#ababab"/><stop offset="0.78" stop-color="#808080"/><stop offset="1" stop-color="#333"/></linearGradient><linearGradient id="wg511_807s" x1="0" y1="0" x2="0" y2="1"><stop offset="0" stop-color="#000" stop-opacity="0.45"/><stop offset="0.2" stop-color="#000" stop-opacity="0"/><stop offset="0.8" stop-color="#000" stop-opacity="0"/><stop offset="1" stop-color="#000" stop-opacity="0.45"/></linearGradient></defs><rect x="2" y="2" width="122" height="15" fill="#111"/><rect x="3" y="3" width="120" height="13" fill="url(#wg511_807)"/><rect x="3.1" y="4" width="1" height="11" fill="rgb(32,32,32)"/><rect x="4.1" y="4" width="0.5" height="11" fill="rgb(90,90,90)"/><rect x="4.2" y="4" width="1" height="11" fill="rgb(37,37,37)"/><rect x="5.2" y="4" width="0.5" height="11" fill="rgb(91,91,91)"/><rect x="6.2" y="4" width="1" height="11" fill="rgb(42,42,42)"/><rect x="7.2" y="4" width="0.5" height="11" fill="rgb(95,95,95)"/><rect x="9.2" y="4" width="1" height="11" fill="rgb(47,47,47)"/><rect x="10.2" y="4" width="0.6" height="11" fill="rgb(104,104,104)"/><rect x="13.1" y="4" width="1" height="11" fill="rgb(52,52,52)"/><rect x="14.1" y="4" width="0.7" height="11" fill="rgb(118,118,118)"/><rect x="17.9" y="4" width="1" height="11" fill="rgb(56,56,56)"/><rect x="18.9" y="4" width="0.9" height="11" fill="rgb(137,137,137)"/><rect x="23.4" y="4" width="1" height="11" fill="rgb(60,60,60)"/><rect x="24.4" y="4" width="1.0" height="11" fill="rgb(160,160,160)"/><rect x="29.7" y="4" width="1" height="11" fill="rgb(63,63,63)"/><rect x="30.7" y="4" width="1.1" height="11" fill="rgb(184,184,184)"/><rect x="36.5" y="4" width="1" height="11" fill="rgb(65,65,65)"/><rect x="37.5" y="4" width="1.2" height="11" fill="rgb(209,209,209)"/><rect x="43.7" y="4" width="1" height="11" fill="rgb(67,67,67)"/><rect x="44.7" y="4" width="1.2" height="11" fill="rgb(230,230,230)"/><rect x="51.3" y="4" width="1" height="11" fill="rgb(69,69,69)"/><rect x="52.3" y="4" width="1.3" height="11" fill="rgb(245,245,245)"/><rect x="59.1" y="4" width="1" height="11" fill="rgb(69,69,69)"/><rect x="60.1" y="4" width="1.3" height="11" fill="rgb(253,253,253)"/><rect x="66.9" y="4" width="1" height="11" fill="rgb(69,69,69)"/><rect x="67.9" y="4" width="1.3" height="11" fill="rgb(253,253,253)"/><rect x="74.7" y="4" width="1" height="11" fill="rgb(69,69,69)"/><rect x="75.7" y="4" width="1.3" height="11" fill="rgb(245,245,245)"/><rect x="82.3" y="4" width="1" height="11" fill="rgb(67,67,67)"/><rect x="83.3" y="4" width="1.2" height="11" fill="rgb(230,230,230)"/><rect x="89.5" y="4" width="1" height="11" fill="rgb(65,65,65)"/><rect x="90.5" y="4" width="1.2" height="11" fill="rgb(209,209,209)"/><rect x="96.3" y="4" width="1" height="11" fill="rgb(63,63,63)"/><rect x="97.3" y="4" width="1.1" height="11" fill="rgb(184,184,184)"/><rect x="102.6" y="4" width="1" height="11" fill="rgb(60,60,60)"/><rect x="103.6" y="4" width="1.0" height="11" fill="rgb(160,160,160)"/><rect x="108.1" y="4" width="1" height="11" fill="rgb(56,56,56)"/><rect x="109.1" y="4" width="0.9" height="11" fill="rgb(137,137,137)"/><rect x="112.9" y="4" width="1" height="11" fill="rgb(52,52,52)"/><rect x="113.9" y="4" width="0.7" height="11" fill="rgb(118,118,118)"/><rect x="116.8" y="4" width="1" height="11" fill="rgb(47,47,47)"/><rect x="117.8" y="4" width="0.6" height="11" fill="rgb(104,104,104)"/><rect x="119.8" y="4" width="1" height="11" fill="rgb(42,42,42)"/><rect x="120.8" y="4" width="0.5" height="11" fill="rgb(95,95,95)"/><rect x="121.8" y="4" width="1" height="11" fill="rgb(37,37,37)"/><rect x="122.8" y="4" width="0.5" height="11" fill="rgb(91,91,91)"/><rect x="122.9" y="4" width="1" height="11" fill="rgb(32,32,32)"/><rect x="123.9" y="4" width="0.5" height="11" fill="rgb(90,90,90)"/><rect x="3" y="3" width="120" height="13" fill="url(#wg511_807s)"/></svg>
<div class="t" style="left:445.5px;top:809.50px;font-size:13px;line-height:16px;color:#000;">Rotx</div>
<div class="t" style="left:477px;top:809.50px;font-size:13px;line-height:16px;color:#000;">Roty</div>
<div class="t" style="right:14px;top:809.50px;font-size:13px;line-height:16px;color:#000;">Dolly</div>
</body></html>
